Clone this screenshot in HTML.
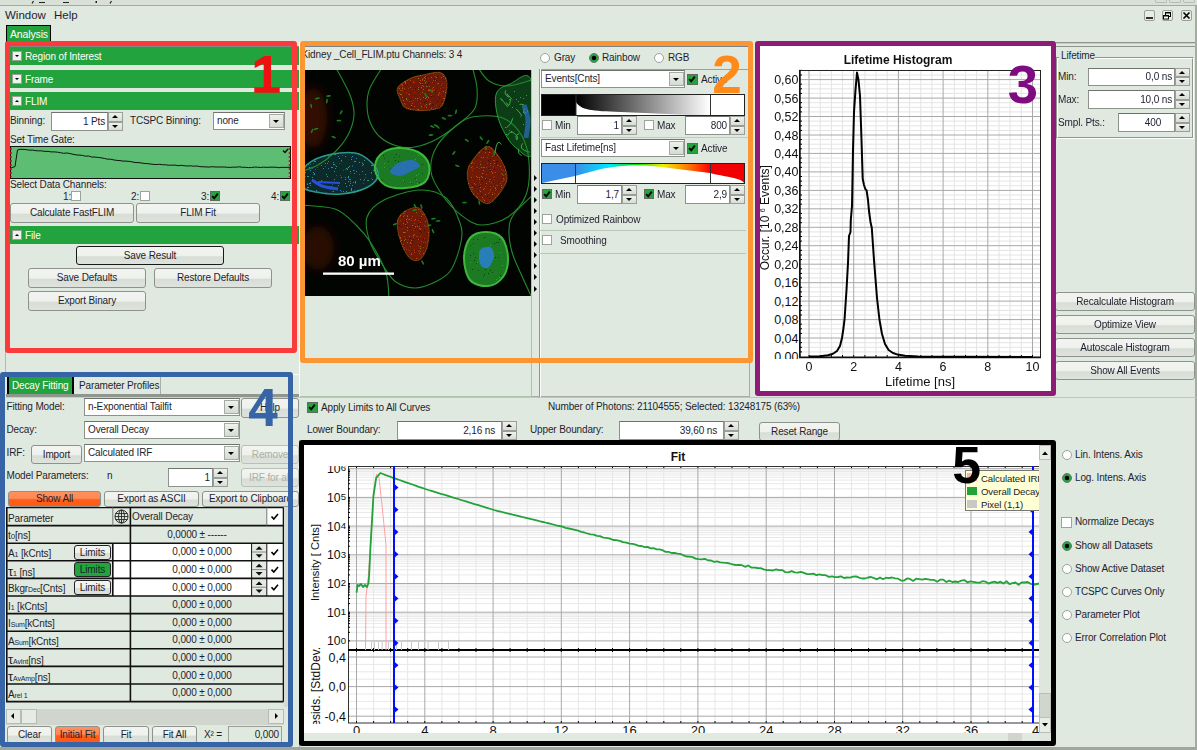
<!DOCTYPE html>
<html><head><meta charset="utf-8"><style>
html,body{margin:0;padding:0;}
body{width:1197px;height:750px;position:relative;overflow:hidden;background:#e0e9df;font-family:"Liberation Sans", sans-serif;color:#1e1e2e;}
body>div,body>svg{position:absolute;}
svg text{font-family:"Liberation Sans", sans-serif;}
</style></head><body>
<div style="left:0px;top:5px;width:1197px;height:1px;background:#a3aba1"></div>
<div style="left:0px;top:0px;width:1197px;height:5px;background:#d9e0d7"></div>
<svg style="left:0px;top:0px;" width="130" height="5" viewBox="0 0 130 5"><path d="M33.5 1 L32 3.5 M39 2.5 L45 2.5 M63 2.5 L69 2.5 M111.5 1 L110 3.5" stroke="#222" stroke-width="1.2"/><rect x="95.5" y="1" width="1.5" height="2" fill="#222"/></svg>
<div style="left:1155px;top:0px;width:12px;height:3px;border:1px solid #b5bcb3;border-top:none;border-radius:0 0 2px 2px;box-sizing:border-box"></div>
<div style="left:1169px;top:0px;width:12px;height:3px;border:1px solid #b5bcb3;border-top:none;border-radius:0 0 2px 2px;box-sizing:border-box"></div>
<div style="left:1183px;top:0px;width:12px;height:3px;border:1px solid #b5bcb3;border-top:none;border-radius:0 0 2px 2px;box-sizing:border-box"></div>
<div style="left:5px;top:9.87px;font-size:11.5px;line-height:11.5px;white-space:nowrap;color:#1e1e2e">Window</div>
<div style="left:54px;top:9.87px;font-size:11.5px;line-height:11.5px;white-space:nowrap;color:#1e1e2e">Help</div>
<div style="left:1144px;top:10px;width:11px;height:11px;border:1px solid #9aa098;border-radius:2px;background:#e8eee6;box-sizing:border-box"></div>
<div style="left:1162px;top:10px;width:11px;height:11px;border:1px solid #9aa098;border-radius:2px;background:#e8eee6;box-sizing:border-box"></div>
<div style="left:1181px;top:10px;width:11px;height:11px;border:1px solid #9aa098;border-radius:2px;background:#e8eee6;box-sizing:border-box"></div>
<svg style="left:1144px;top:10px;" width="11" height="11" viewBox="0 0 11 11"><rect x="2" y="7.2" width="7" height="1.6" fill="#000"/></svg>
<svg style="left:1162px;top:10px;" width="11" height="11" viewBox="0 0 11 11"><rect x="3.5" y="2.5" width="5" height="4" fill="none" stroke="#000" stroke-width="1"/><rect x="3.5" y="2" width="5" height="1.5" fill="#000"/><rect x="1.5" y="5.5" width="5" height="3.5" fill="#fff" stroke="#000" stroke-width="1"/><rect x="1.5" y="5" width="5" height="1.5" fill="#000"/></svg>
<svg style="left:1181px;top:10px;" width="11" height="11" viewBox="0 0 11 11"><path d="M2.5 2.5 L8.5 8.5 M8.5 2.5 L2.5 8.5" stroke="#000" stroke-width="1.6"/></svg>
<div style="left:1195px;top:6px;width:2px;height:744px;background:#a4aca2"></div>
<div style="left:0px;top:747px;width:1197px;height:3px;background:#9fa79d"></div>
<div style="left:1056px;top:42px;width:139px;height:1px;background:#8d948b"></div>
<div style="left:1056px;top:43px;width:139px;height:1px;background:#c7cec5"></div>
<div style="left:1056px;top:46px;width:139px;height:1px;background:#8d948b"></div>
<div style="left:6px;top:25px;width:45px;height:17px;background:#22a33e;border:1px solid #000;box-sizing:border-box"></div>
<div style="left:10px;top:28.61px;font-size:10.5px;line-height:10.5px;white-space:nowrap;letter-spacing:-0.14px;color:#fff">Analysis</div>
<div style="left:5px;top:42px;width:294px;height:333px;background:#e0e9df"></div>
<div style="left:299px;top:42px;width:1px;height:333px;background:#fafcfa"></div>
<div style="left:5px;top:42px;width:1px;height:332px;background:#b3bbb1"></div>
<div style="left:5px;top:374px;width:294px;height:1px;background:#fafcfa"></div>
<div style="left:299px;top:375px;width:1px;height:22px;background:#fafcfa"></div>
<div style="left:10px;top:46px;width:289px;height:1px;background:#808a80"></div>
<div style="left:10px;top:47px;width:289px;height:18px;background:#22a33e"></div>
<div style="left:12px;top:51px;width:10px;height:10px;background:#eef1ec;border:1px solid #9aa098;box-sizing:border-box"></div>
<div style="left:14.5px;top:55.2px;width:0;height:0;border-left:2.5px solid transparent;border-right:2.5px solid transparent;border-top:2.5px solid #000"></div>
<div style="left:25px;top:51.73px;font-size:10px;line-height:10px;white-space:nowrap;letter-spacing:-0.14px;color:#fff">Region of Interest</div>
<div style="left:10px;top:70px;width:289px;height:18px;background:#22a33e"></div>
<div style="left:12px;top:74px;width:10px;height:10px;background:#eef1ec;border:1px solid #9aa098;box-sizing:border-box"></div>
<div style="left:14.5px;top:78.2px;width:0;height:0;border-left:2.5px solid transparent;border-right:2.5px solid transparent;border-top:2.5px solid #000"></div>
<div style="left:25px;top:74.73px;font-size:10px;line-height:10px;white-space:nowrap;letter-spacing:-0.14px;color:#fff">Frame</div>
<div style="left:10px;top:92px;width:289px;height:18px;background:#22a33e"></div>
<div style="left:12px;top:96px;width:10px;height:10px;background:#eef1ec;border:1px solid #9aa098;box-sizing:border-box"></div>
<div style="left:14.5px;top:99.8px;width:0;height:0;border-left:2.5px solid transparent;border-right:2.5px solid transparent;border-bottom:2.5px solid #000"></div>
<div style="left:25px;top:96.73px;font-size:10px;line-height:10px;white-space:nowrap;letter-spacing:-0.14px;color:#fff">FLIM</div>
<div style="left:10px;top:115.53px;font-size:10px;line-height:10px;white-space:nowrap;letter-spacing:-0.14px;color:#1e1e2e">Binning:</div>
<div style="left:51px;top:112px;width:55px;height:17px;background:#fff;border:1px solid #8e928d;border-top-color:#6f736e;"></div>
<div style="left:-195px;top:116.63px;width:300px;font-size:10px;line-height:10px;text-align:right;white-space:nowrap;letter-spacing:-0.14px;color:#1e1e2e">1 Pts</div>
<div style="left:108px;top:112px;width:13px;height:7.5px;border:1px solid #9aa098;background:linear-gradient(#eef1ec,#d9ddd7)"></div>
<div style="left:108px;top:121.5px;width:13px;height:7.5px;border:1px solid #9aa098;background:linear-gradient(#eef1ec,#d9ddd7)"></div>
<div style="left:112.0px;top:115.0px;width:0;height:0;border-left:3.5px solid transparent;border-right:3.5px solid transparent;border-bottom:3.5px solid #000"></div>
<div style="left:112.0px;top:125.0px;width:0;height:0;border-left:3.5px solid transparent;border-right:3.5px solid transparent;border-top:3.5px solid #000"></div>
<div style="left:130px;top:115.53px;font-size:10px;line-height:10px;white-space:nowrap;letter-spacing:-0.14px;color:#1e1e2e">TCSPC Binning:</div>
<div style="left:213px;top:112px;width:70px;height:16px;background:#fff;border:1px solid #8e928d;border-top-color:#6f736e;"></div>
<div style="left:217px;top:116.13px;font-size:10px;line-height:10px;white-space:nowrap;letter-spacing:-0.14px;color:#1e1e2e">none</div>
<div style="left:269px;top:114px;width:13px;height:12px;border:1px solid #a5aba3;background:linear-gradient(#eef1ec,#d5dad3)"></div>
<div style="left:272.5px;top:119.8px;width:0;height:0;border-left:3.5px solid transparent;border-right:3.5px solid transparent;border-top:3.5px solid #000"></div>
<div style="left:10px;top:135.23px;font-size:10px;line-height:10px;white-space:nowrap;letter-spacing:-0.14px;color:#1e1e2e">Set Time Gate:</div>
<svg style="left:10px;top:146px;" width="281" height="33" viewBox="0 0 281 33"><rect x="0.5" y="0.5" width="280" height="32" fill="#5cbd73" stroke="#111" stroke-width="1"/><path d="M1.0 22.0 L5.0 20.5 L7.5 4.0 L10.0 3.3 L13.1 3.4 L16.2 3.6 L19.3 4.2 L22.5 4.1 L25.6 4.7 L28.7 4.8 L31.8 4.9 L34.9 5.4 L38.0 5.4 L41.1 5.9 L44.2 5.9 L47.4 6.2 L50.5 6.7 L53.6 7.3 L56.7 7.0 L59.8 7.5 L63.0 8.3 L66.1 8.9 L69.2 9.1 L72.4 9.4 L75.5 10.2 L78.6 10.0 L81.8 11.0 L84.9 11.1 L88.1 11.4 L91.2 11.8 L94.3 12.4 L97.5 13.2 L100.6 13.2 L103.7 13.9 L106.9 14.4 L110.0 14.6 L113.0 15.1 L116.0 15.1 L119.0 15.4 L122.0 15.8 L125.0 16.5 L128.0 16.6 L131.0 16.9 L134.0 17.4 L137.0 17.6 L140.0 17.9 L143.1 18.4 L146.2 18.5 L149.3 18.3 L152.4 18.7 L155.6 18.8 L158.7 19.2 L161.8 19.2 L164.9 19.1 L168.0 19.7 L171.1 19.3 L174.2 19.7 L177.3 20.0 L180.4 19.8 L183.6 20.2 L186.7 20.0 L189.8 20.6 L192.9 20.8 L196.0 20.9 L199.0 21.1 L202.1 20.7 L205.1 21.0 L208.2 21.0 L211.2 21.0 L214.2 21.0 L217.3 21.3 L220.3 21.4 L223.3 21.1 L226.4 21.2 L229.4 20.8 L232.5 21.3 L235.5 21.3 L238.5 21.6 L241.6 21.5 L244.6 21.1 L247.7 21.2 L250.7 21.5 L253.7 21.1 L256.8 21.4 L259.8 21.2 L262.8 21.2 L265.9 21.2 L268.9 21.7 L272.0 21.3 L275.0 21.4 L280.0 21.3" fill="none" stroke="#111" stroke-width="1"/><path d="M1 2 L1 31" stroke="#e01010" stroke-width="1.6" stroke-dasharray="2 2"/><path d="M279.5 2 L279.5 31" stroke="#e01010" stroke-width="1.6" stroke-dasharray="2 2"/><path d="M273 4.5 L275 6.5 L278 3" stroke="#111" stroke-width="1.5" fill="none"/></svg>
<div style="left:10px;top:180.23px;font-size:10px;line-height:10px;white-space:nowrap;letter-spacing:-0.14px;color:#1e1e2e">Select Data Channels:</div>
<div style="left:63px;top:191.53px;font-size:10px;line-height:10px;white-space:nowrap;letter-spacing:-0.14px;color:#1e1e2e">1:</div>
<div style="left:71px;top:191px;width:8px;height:8px;border:1px solid #9ba39a;background:#fff"></div>
<div style="left:131px;top:191.53px;font-size:10px;line-height:10px;white-space:nowrap;letter-spacing:-0.14px;color:#1e1e2e">2:</div>
<div style="left:140px;top:191px;width:8px;height:8px;border:1px solid #9ba39a;background:#fff"></div>
<div style="left:201px;top:191.53px;font-size:10px;line-height:10px;white-space:nowrap;letter-spacing:-0.14px;color:#1e1e2e">3:</div>
<div style="left:210px;top:191px;width:8px;height:8px;border:1px solid #5f6b5e;background:#24a33f"></div>
<svg style="left:210px;top:191px" width="10" height="10"><path d="M2.2 5.2 L4.2 7.3 L7.8 2.6" stroke="#000" stroke-width="1.8" fill="none"/></svg>
<div style="left:271px;top:191.53px;font-size:10px;line-height:10px;white-space:nowrap;letter-spacing:-0.14px;color:#1e1e2e">4:</div>
<div style="left:280px;top:191px;width:8px;height:8px;border:1px solid #5f6b5e;background:#24a33f"></div>
<svg style="left:280px;top:191px" width="10" height="10"><path d="M2.2 5.2 L4.2 7.3 L7.8 2.6" stroke="#000" stroke-width="1.8" fill="none"/></svg>
<div style="left:10px;top:203px;width:122px;height:18px;border:1px solid #8d938c;border-radius:3px;background:linear-gradient(#f1f4f0 0%,#eef1ec 50%,#d8ddd6 58%,#dfe3dd 100%);"></div>
<div style="left:-228.0px;top:208.13px;width:600px;font-size:10px;line-height:10px;text-align:center;white-space:nowrap;letter-spacing:-0.14px;color:#1e1e2e;">Calculate FastFLIM</div>
<div style="left:136px;top:203px;width:122px;height:18px;border:1px solid #8d938c;border-radius:3px;background:linear-gradient(#f1f4f0 0%,#eef1ec 50%,#d8ddd6 58%,#dfe3dd 100%);"></div>
<div style="left:-102.0px;top:208.13px;width:600px;font-size:10px;line-height:10px;text-align:center;white-space:nowrap;letter-spacing:-0.14px;color:#1e1e2e;">FLIM Fit</div>
<div style="left:10px;top:226px;width:289px;height:18px;background:#22a33e"></div>
<div style="left:12px;top:230px;width:10px;height:10px;background:#eef1ec;border:1px solid #9aa098;box-sizing:border-box"></div>
<div style="left:14.5px;top:233.8px;width:0;height:0;border-left:2.5px solid transparent;border-right:2.5px solid transparent;border-bottom:2.5px solid #000"></div>
<div style="left:25px;top:230.73px;font-size:10px;line-height:10px;white-space:nowrap;letter-spacing:-0.14px;color:#fff">File</div>
<div style="left:76px;top:246px;width:146px;height:17px;border:1px solid #1a1a1a;border-radius:3px;background:linear-gradient(#f1f4f0 0%,#eef1ec 50%,#d8ddd6 58%,#dfe3dd 100%);"></div>
<div style="left:-150.0px;top:250.64px;width:600px;font-size:10px;line-height:10px;text-align:center;white-space:nowrap;letter-spacing:-0.14px;color:#1e1e2e;">Save Result</div>
<div style="left:28px;top:268px;width:116px;height:18px;border:1px solid #8d938c;border-radius:3px;background:linear-gradient(#f1f4f0 0%,#eef1ec 50%,#d8ddd6 58%,#dfe3dd 100%);"></div>
<div style="left:-213.0px;top:273.14px;width:600px;font-size:10px;line-height:10px;text-align:center;white-space:nowrap;letter-spacing:-0.14px;color:#1e1e2e;">Save Defaults</div>
<div style="left:154px;top:268px;width:116px;height:18px;border:1px solid #8d938c;border-radius:3px;background:linear-gradient(#f1f4f0 0%,#eef1ec 50%,#d8ddd6 58%,#dfe3dd 100%);"></div>
<div style="left:-87.0px;top:273.14px;width:600px;font-size:10px;line-height:10px;text-align:center;white-space:nowrap;letter-spacing:-0.14px;color:#1e1e2e;">Restore Defaults</div>
<div style="left:28px;top:291px;width:116px;height:18px;border:1px solid #8d938c;border-radius:3px;background:linear-gradient(#f1f4f0 0%,#eef1ec 50%,#d8ddd6 58%,#dfe3dd 100%);"></div>
<div style="left:-213.0px;top:296.14px;width:600px;font-size:10px;line-height:10px;text-align:center;white-space:nowrap;letter-spacing:-0.14px;color:#1e1e2e;">Export Binary</div>
<div style="left:300px;top:42px;width:450px;height:355px;background:#e0e9df"></div>
<div style="left:749px;top:42px;width:1px;height:355px;background:#a6ada4"></div>
<div style="left:300px;top:396px;width:450px;height:1px;background:#a6ada4"></div>
<div style="left:301.5px;top:49.53px;font-size:10px;line-height:10px;white-space:nowrap;letter-spacing:-0.14px;color:#1e1e2e">Kidney _Cell_FLIM.ptu Channels: 3 4</div>
<svg style="left:304px;top:70px;" width="227" height="226" viewBox="0 0 227 226"><defs><filter id="bl1" x="-20%" y="-20%" width="140%" height="140%"><feGaussianBlur stdDeviation="0.5"/></filter><filter id="bl2" x="-30%" y="-30%" width="160%" height="160%"><feGaussianBlur stdDeviation="1.5"/></filter><filter id="bl3" x="-50%" y="-50%" width="200%" height="200%"><feGaussianBlur stdDeviation="5"/></filter></defs><rect width="227" height="226" fill="#020402"/><g filter="url(#bl3)"><ellipse cx="9" cy="48" rx="14" ry="30" fill="#4a1206" opacity="0.7"/><ellipse cx="14" cy="178" rx="16" ry="22" fill="#3a0e05" opacity="0.7"/></g><g filter="url(#bl1)"><path d="M114.0 82.0 C119.3 84.8 123.8 90.0 125.0 95.0 C126.2 100.0 125.0 108.2 121.0 112.0 C117.0 115.8 107.7 117.5 101.0 118.0 C94.3 118.5 86.0 118.0 81.0 115.0 C76.0 112.0 71.8 105.0 71.0 100.0 C70.2 95.0 72.3 88.7 76.0 85.0 C79.7 81.3 86.7 78.5 93.0 78.0 C99.3 77.5 108.7 79.2 114.0 82.0 Z" fill="#1e7a22"/><path d="M198.0 168.0 C201.7 172.3 203.8 181.5 204.0 188.0 C204.2 194.5 202.3 202.3 199.0 207.0 C195.7 211.7 189.5 215.5 184.0 216.0 C178.5 216.5 170.0 214.7 166.0 210.0 C162.0 205.3 160.0 195.0 160.0 188.0 C160.0 181.0 162.3 172.3 166.0 168.0 C169.7 163.7 176.7 162.0 182.0 162.0 C187.3 162.0 194.3 163.7 198.0 168.0 Z" fill="#1e7a22"/><path d="M20.0 86.0 C28.5 83.5 43.0 81.8 51.0 83.0 C59.0 84.2 64.2 89.2 68.0 93.0 C71.8 96.8 75.0 101.8 74.0 106.0 C73.0 110.2 68.2 115.0 62.0 118.0 C55.8 121.0 45.3 123.3 37.0 124.0 C28.7 124.7 18.5 123.3 12.0 122.0 C5.5 120.7 0.0 120.0 -2.0 116.0 C-4.0 112.0 -3.7 103.0 0.0 98.0 C3.7 93.0 11.5 88.5 20.0 86.0 Z" fill="#0a2a2a"/><path d="M206.0 14.0 C211.7 12.0 223.2 -1.3 227.0 10.0 C230.8 21.3 231.7 70.8 229.0 82.0 C226.3 93.2 216.2 81.0 211.0 77.0 C205.8 73.0 201.2 64.5 198.0 58.0 C194.8 51.5 192.8 44.0 192.0 38.0 C191.2 32.0 190.7 26.0 193.0 22.0 C195.3 18.0 200.3 16.0 206.0 14.0 Z" fill="#0e3e18"/></g><rect x="114" y="85" width="1" height="1" fill="#3aa040"/><rect x="94" y="91" width="1" height="1" fill="#0a3a10"/><rect x="112" y="109" width="1" height="1" fill="#3aa040"/><rect x="107" y="113" width="1" height="1" fill="#104a18"/><rect x="115" y="112" width="1" height="1" fill="#0a3a10"/><rect x="80" y="88" width="1" height="1" fill="#104a18"/><rect x="86" y="98" width="1" height="1" fill="#104a18"/><rect x="84" y="91" width="1" height="1" fill="#0a3a10"/><rect x="94" y="94" width="1" height="1" fill="#104a18"/><rect x="90" y="87" width="1" height="1" fill="#104a18"/><rect x="118" y="103" width="1" height="1" fill="#104a18"/><rect x="78" y="110" width="1" height="1" fill="#104a18"/><rect x="111" y="95" width="1" height="1" fill="#3aa040"/><rect x="93" y="97" width="1" height="1" fill="#3aa040"/><rect x="79" y="85" width="1" height="1" fill="#0a3a10"/><rect x="95" y="86" width="1" height="1" fill="#104a18"/><rect x="78" y="83" width="1" height="1" fill="#0a3a10"/><rect x="100" y="111" width="1" height="1" fill="#104a18"/><rect x="77" y="109" width="1" height="1" fill="#104a18"/><rect x="93" y="102" width="1" height="1" fill="#3aa040"/><rect x="103" y="97" width="1" height="1" fill="#0a3a10"/><rect x="113" y="113" width="1" height="1" fill="#3aa040"/><rect x="97" y="92" width="1" height="1" fill="#0a3a10"/><rect x="80" y="93" width="1" height="1" fill="#3aa040"/><rect x="97" y="104" width="1" height="1" fill="#104a18"/><rect x="77" y="112" width="1" height="1" fill="#104a18"/><rect x="92" y="104" width="1" height="1" fill="#0a3a10"/><rect x="109" y="92" width="1" height="1" fill="#104a18"/><rect x="114" y="104" width="1" height="1" fill="#3aa040"/><rect x="99" y="110" width="1" height="1" fill="#3aa040"/><rect x="110" y="99" width="1" height="1" fill="#104a18"/><rect x="91" y="90" width="1" height="1" fill="#0a3a10"/><rect x="111" y="108" width="1" height="1" fill="#104a18"/><rect x="111" y="89" width="1" height="1" fill="#3aa040"/><rect x="92" y="84" width="1" height="1" fill="#0a3a10"/><rect x="111" y="97" width="1" height="1" fill="#0a3a10"/><rect x="106" y="112" width="1" height="1" fill="#3aa040"/><rect x="112" y="105" width="1" height="1" fill="#3aa040"/><rect x="118" y="94" width="1" height="1" fill="#0a3a10"/><rect x="80" y="97" width="1" height="1" fill="#3aa040"/><rect x="172" y="193" width="1" height="1" fill="#104a18"/><rect x="194" y="187" width="1" height="1" fill="#104a18"/><rect x="177" y="194" width="1" height="1" fill="#104a18"/><rect x="169" y="183" width="1" height="1" fill="#104a18"/><rect x="191" y="187" width="1" height="1" fill="#0a3a10"/><rect x="180" y="194" width="1" height="1" fill="#0a3a10"/><rect x="192" y="209" width="1" height="1" fill="#3aa040"/><rect x="181" y="199" width="1" height="1" fill="#0a3a10"/><rect x="190" y="173" width="1" height="1" fill="#0a3a10"/><rect x="166" y="192" width="1" height="1" fill="#3aa040"/><rect x="192" y="172" width="1" height="1" fill="#104a18"/><rect x="198" y="195" width="1" height="1" fill="#3aa040"/><rect x="170" y="190" width="1" height="1" fill="#0a3a10"/><rect x="165" y="209" width="1" height="1" fill="#104a18"/><rect x="168" y="199" width="1" height="1" fill="#0a3a10"/><rect x="180" y="204" width="1" height="1" fill="#0a3a10"/><rect x="166" y="175" width="1" height="1" fill="#104a18"/><rect x="173" y="192" width="1" height="1" fill="#3aa040"/><rect x="184" y="203" width="1" height="1" fill="#0a3a10"/><rect x="196" y="182" width="1" height="1" fill="#3aa040"/><rect x="188" y="202" width="1" height="1" fill="#104a18"/><rect x="179" y="206" width="1" height="1" fill="#104a18"/><rect x="169" y="173" width="1" height="1" fill="#104a18"/><rect x="166" y="185" width="1" height="1" fill="#0a3a10"/><rect x="186" y="200" width="1" height="1" fill="#0a3a10"/><rect x="171" y="187" width="1" height="1" fill="#104a18"/><rect x="169" y="169" width="1" height="1" fill="#104a18"/><rect x="183" y="190" width="1" height="1" fill="#0a3a10"/><rect x="195" y="169" width="1" height="1" fill="#0a3a10"/><rect x="174" y="200" width="1" height="1" fill="#104a18"/><rect x="180" y="167" width="1" height="1" fill="#0a3a10"/><rect x="180" y="193" width="1" height="1" fill="#104a18"/><rect x="186" y="175" width="1" height="1" fill="#3aa040"/><rect x="180" y="189" width="1" height="1" fill="#3aa040"/><rect x="182" y="177" width="1" height="1" fill="#104a18"/><rect x="195" y="207" width="1" height="1" fill="#3aa040"/><rect x="196" y="205" width="1" height="1" fill="#0a3a10"/><rect x="194" y="172" width="1" height="1" fill="#0a3a10"/><rect x="178" y="180" width="1" height="1" fill="#104a18"/><rect x="173" y="169" width="1" height="1" fill="#104a18"/><rect x="206" y="26" width="1" height="1" fill="#0a3a10"/><rect x="222" y="52" width="1" height="1" fill="#3aa040"/><rect x="202" y="64" width="1" height="1" fill="#3aa040"/><rect x="204" y="68" width="1" height="1" fill="#3aa040"/><rect x="220" y="28" width="1" height="1" fill="#104a18"/><rect x="219" y="28" width="1" height="1" fill="#3aa040"/><rect x="223" y="40" width="1" height="1" fill="#3aa040"/><rect x="204" y="36" width="1" height="1" fill="#104a18"/><rect x="208" y="37" width="1" height="1" fill="#3aa040"/><rect x="210" y="21" width="1" height="1" fill="#3aa040"/><rect x="211" y="35" width="1" height="1" fill="#0a3a10"/><rect x="202" y="66" width="1" height="1" fill="#0a3a10"/><rect x="222" y="25" width="1" height="1" fill="#3aa040"/><rect x="206" y="65" width="1" height="1" fill="#0a3a10"/><rect x="205" y="26" width="1" height="1" fill="#3aa040"/><rect x="219" y="54" width="1" height="1" fill="#3aa040"/><rect x="209" y="47" width="1" height="1" fill="#104a18"/><rect x="213" y="55" width="1" height="1" fill="#0a3a10"/><rect x="206" y="60" width="1" height="1" fill="#0a3a10"/><rect x="209" y="24" width="1" height="1" fill="#0a3a10"/><rect x="214" y="60" width="1" height="1" fill="#0a3a10"/><rect x="214" y="31" width="1" height="1" fill="#3aa040"/><rect x="220" y="43" width="1" height="1" fill="#3aa040"/><rect x="223" y="41" width="1" height="1" fill="#3aa040"/><rect x="214" y="22" width="1" height="1" fill="#104a18"/><rect x="205" y="25" width="1" height="1" fill="#0a3a10"/><rect x="205" y="29" width="1" height="1" fill="#3aa040"/><rect x="214" y="47" width="1" height="1" fill="#0a3a10"/><rect x="206" y="45" width="1" height="1" fill="#0a3a10"/><rect x="205" y="60" width="1" height="1" fill="#3aa040"/><rect x="200" y="21" width="1" height="1" fill="#104a18"/><rect x="212" y="29" width="1" height="1" fill="#3aa040"/><rect x="205" y="42" width="1" height="1" fill="#104a18"/><rect x="219" y="42" width="1" height="1" fill="#3aa040"/><rect x="212" y="64" width="1" height="1" fill="#104a18"/><rect x="206" y="31" width="1" height="1" fill="#0a3a10"/><rect x="207" y="62" width="1" height="1" fill="#104a18"/><rect x="216" y="27" width="1" height="1" fill="#3aa040"/><rect x="223" y="62" width="1" height="1" fill="#0a3a10"/><rect x="201" y="57" width="1" height="1" fill="#3aa040"/><defs><clipPath id="clc"><path d="M20.0 86.0 C28.5 83.5 43.0 81.8 51.0 83.0 C59.0 84.2 64.2 89.2 68.0 93.0 C71.8 96.8 75.0 101.8 74.0 106.0 C73.0 110.2 68.2 115.0 62.0 118.0 C55.8 121.0 45.3 123.3 37.0 124.0 C28.7 124.7 18.5 123.3 12.0 122.0 C5.5 120.7 0.0 120.0 -2.0 116.0 C-4.0 112.0 -3.7 103.0 0.0 98.0 C3.7 93.0 11.5 88.5 20.0 86.0 Z"/></clipPath></defs><g clip-path="url(#clc)"><rect x="32" y="85" width="1" height="1" fill="#0a2a3a"/><rect x="64" y="110" width="1" height="1" fill="#2aa070"/><rect x="44" y="111" width="1" height="1" fill="#2a8aa0"/><rect x="34" y="89" width="1" height="1" fill="#0a2a3a"/><rect x="0" y="98" width="1" height="1" fill="#2aa070"/><rect x="72" y="105" width="1" height="1" fill="#1a5a8a"/><rect x="3" y="119" width="1" height="1" fill="#1a5a8a"/><rect x="26" y="83" width="1" height="1" fill="#0a2a3a"/><rect x="6" y="94" width="1" height="1" fill="#1a5a8a"/><rect x="18" y="115" width="1" height="1" fill="#2a8aa0"/><rect x="20" y="87" width="1" height="1" fill="#0a2a3a"/><rect x="43" y="99" width="1" height="1" fill="#2aa070"/><rect x="23" y="93" width="1" height="1" fill="#3a7ad0"/><rect x="71" y="118" width="1" height="1" fill="#1a5a8a"/><rect x="49" y="112" width="1" height="1" fill="#3a7ad0"/><rect x="29" y="96" width="1" height="1" fill="#0a2a3a"/><rect x="11" y="113" width="1" height="1" fill="#1a5a8a"/><rect x="3" y="117" width="1" height="1" fill="#3a7ad0"/><rect x="46" y="113" width="1" height="1" fill="#3a7ad0"/><rect x="10" y="104" width="1" height="1" fill="#3a7ad0"/><rect x="42" y="116" width="1" height="1" fill="#2a8aa0"/><rect x="61" y="107" width="1" height="1" fill="#1a5a8a"/><rect x="6" y="85" width="1" height="1" fill="#2aa070"/><rect x="71" y="98" width="1" height="1" fill="#0a2a3a"/><rect x="41" y="109" width="1" height="1" fill="#3a7ad0"/><rect x="50" y="103" width="1" height="1" fill="#2a8aa0"/><rect x="34" y="86" width="1" height="1" fill="#3a7ad0"/><rect x="66" y="87" width="1" height="1" fill="#3a7ad0"/><rect x="5" y="113" width="1" height="1" fill="#2aa070"/><rect x="60" y="118" width="1" height="1" fill="#1a5a8a"/><rect x="54" y="91" width="1" height="1" fill="#0a2a3a"/><rect x="37" y="99" width="1" height="1" fill="#0a2a3a"/><rect x="67" y="95" width="1" height="1" fill="#2a8aa0"/><rect x="46" y="109" width="1" height="1" fill="#2a8aa0"/><rect x="44" y="97" width="1" height="1" fill="#2aa070"/><rect x="46" y="88" width="1" height="1" fill="#0a2a3a"/><rect x="4" y="94" width="1" height="1" fill="#2a8aa0"/><rect x="51" y="111" width="1" height="1" fill="#2aa070"/><rect x="52" y="95" width="1" height="1" fill="#0a2a3a"/><rect x="35" y="88" width="1" height="1" fill="#3a7ad0"/><rect x="15" y="123" width="1" height="1" fill="#0a2a3a"/><rect x="1" y="102" width="1" height="1" fill="#3a7ad0"/><rect x="72" y="101" width="1" height="1" fill="#2aa070"/><rect x="29" y="121" width="1" height="1" fill="#1a5a8a"/><rect x="6" y="87" width="1" height="1" fill="#3a7ad0"/><rect x="19" y="98" width="1" height="1" fill="#3a7ad0"/><rect x="61" y="104" width="1" height="1" fill="#2a8aa0"/><rect x="52" y="92" width="1" height="1" fill="#0a2a3a"/><rect x="29" y="90" width="1" height="1" fill="#0a2a3a"/><rect x="50" y="100" width="1" height="1" fill="#1a5a8a"/><rect x="31" y="98" width="1" height="1" fill="#2a8aa0"/><rect x="62" y="83" width="1" height="1" fill="#2aa070"/><rect x="62" y="88" width="1" height="1" fill="#1a5a8a"/><rect x="53" y="120" width="1" height="1" fill="#2aa070"/><rect x="19" y="86" width="1" height="1" fill="#0a2a3a"/><rect x="74" y="107" width="1" height="1" fill="#2aa070"/><rect x="68" y="114" width="1" height="1" fill="#2a8aa0"/><rect x="21" y="85" width="1" height="1" fill="#2aa070"/><rect x="47" y="89" width="1" height="1" fill="#2aa070"/><rect x="32" y="96" width="1" height="1" fill="#2aa070"/><rect x="58" y="101" width="1" height="1" fill="#2a8aa0"/><rect x="60" y="109" width="1" height="1" fill="#3a7ad0"/><rect x="41" y="113" width="1" height="1" fill="#2a8aa0"/><rect x="69" y="100" width="1" height="1" fill="#3a7ad0"/><rect x="56" y="109" width="1" height="1" fill="#2aa070"/><rect x="36" y="120" width="1" height="1" fill="#3a7ad0"/><rect x="9" y="102" width="1" height="1" fill="#2aa070"/><rect x="21" y="93" width="1" height="1" fill="#2aa070"/><rect x="30" y="93" width="1" height="1" fill="#0a2a3a"/><rect x="41" y="99" width="1" height="1" fill="#1a5a8a"/><rect x="48" y="86" width="1" height="1" fill="#3a7ad0"/><rect x="67" y="103" width="1" height="1" fill="#1a5a8a"/><rect x="34" y="97" width="1" height="1" fill="#0a2a3a"/><rect x="32" y="105" width="1" height="1" fill="#1a5a8a"/><rect x="7" y="97" width="1" height="1" fill="#2a8aa0"/><rect x="24" y="98" width="1" height="1" fill="#3a7ad0"/><rect x="15" y="84" width="1" height="1" fill="#0a2a3a"/><rect x="28" y="114" width="1" height="1" fill="#1a5a8a"/><rect x="28" y="97" width="1" height="1" fill="#2a8aa0"/><rect x="37" y="107" width="1" height="1" fill="#2aa070"/><rect x="9" y="104" width="1" height="1" fill="#1a5a8a"/><rect x="7" y="120" width="1" height="1" fill="#0a2a3a"/><rect x="30" y="101" width="1" height="1" fill="#2aa070"/><rect x="63" y="119" width="1" height="1" fill="#2a8aa0"/><rect x="9" y="100" width="1" height="1" fill="#0a2a3a"/><rect x="72" y="103" width="1" height="1" fill="#2a8aa0"/><rect x="29" y="121" width="1" height="1" fill="#3a7ad0"/><rect x="63" y="123" width="1" height="1" fill="#1a5a8a"/><rect x="58" y="92" width="1" height="1" fill="#1a5a8a"/><rect x="39" y="111" width="1" height="1" fill="#0a2a3a"/><rect x="6" y="115" width="1" height="1" fill="#2a8aa0"/><rect x="58" y="93" width="1" height="1" fill="#2a8aa0"/><rect x="48" y="95" width="1" height="1" fill="#1a5a8a"/><rect x="46" y="105" width="1" height="1" fill="#0a2a3a"/><rect x="52" y="88" width="1" height="1" fill="#2a8aa0"/><rect x="22" y="122" width="1" height="1" fill="#1a5a8a"/><rect x="29" y="92" width="1" height="1" fill="#3a7ad0"/><rect x="0" y="105" width="1" height="1" fill="#0a2a3a"/><rect x="21" y="96" width="1" height="1" fill="#1a5a8a"/><rect x="35" y="93" width="1" height="1" fill="#1a5a8a"/><rect x="2" y="100" width="1" height="1" fill="#2aa070"/><rect x="4" y="91" width="1" height="1" fill="#0a2a3a"/><rect x="6" y="92" width="1" height="1" fill="#0a2a3a"/><rect x="68" y="92" width="1" height="1" fill="#2a8aa0"/><rect x="51" y="112" width="1" height="1" fill="#2aa070"/><rect x="51" y="91" width="1" height="1" fill="#2aa070"/><rect x="55" y="104" width="1" height="1" fill="#1a5a8a"/><rect x="37" y="91" width="1" height="1" fill="#1a5a8a"/><rect x="17" y="92" width="1" height="1" fill="#2aa070"/><rect x="8" y="109" width="1" height="1" fill="#3a7ad0"/><rect x="14" y="92" width="1" height="1" fill="#0a2a3a"/><rect x="67" y="85" width="1" height="1" fill="#3a7ad0"/><rect x="11" y="99" width="1" height="1" fill="#1a5a8a"/><rect x="2" y="107" width="1" height="1" fill="#0a2a3a"/><rect x="4" y="85" width="1" height="1" fill="#0a2a3a"/><rect x="33" y="112" width="1" height="1" fill="#2aa070"/><rect x="54" y="124" width="1" height="1" fill="#1a5a8a"/><rect x="24" y="91" width="1" height="1" fill="#3a7ad0"/><rect x="55" y="84" width="1" height="1" fill="#0a2a3a"/><rect x="62" y="123" width="1" height="1" fill="#0a2a3a"/><rect x="13" y="83" width="1" height="1" fill="#2aa070"/><rect x="6" y="100" width="1" height="1" fill="#2a8aa0"/><rect x="42" y="114" width="1" height="1" fill="#0a2a3a"/><rect x="26" y="117" width="1" height="1" fill="#0a2a3a"/><rect x="6" y="112" width="1" height="1" fill="#1a5a8a"/><rect x="28" y="121" width="1" height="1" fill="#1a5a8a"/><rect x="24" y="113" width="1" height="1" fill="#0a2a3a"/><rect x="2" y="100" width="1" height="1" fill="#0a2a3a"/><rect x="3" y="84" width="1" height="1" fill="#2a8aa0"/><rect x="59" y="86" width="1" height="1" fill="#1a5a8a"/><rect x="55" y="120" width="1" height="1" fill="#2aa070"/><rect x="27" y="97" width="1" height="1" fill="#3a7ad0"/><rect x="3" y="114" width="1" height="1" fill="#2aa070"/><rect x="68" y="95" width="1" height="1" fill="#3a7ad0"/><rect x="68" y="109" width="1" height="1" fill="#2a8aa0"/><rect x="2" y="93" width="1" height="1" fill="#0a2a3a"/><rect x="53" y="102" width="1" height="1" fill="#0a2a3a"/><rect x="58" y="120" width="1" height="1" fill="#0a2a3a"/><rect x="10" y="103" width="1" height="1" fill="#2a8aa0"/><rect x="59" y="113" width="1" height="1" fill="#1a5a8a"/><rect x="45" y="96" width="1" height="1" fill="#2aa070"/><rect x="34" y="115" width="1" height="1" fill="#3a7ad0"/><rect x="6" y="91" width="1" height="1" fill="#1a5a8a"/><rect x="18" y="86" width="1" height="1" fill="#2a8aa0"/><rect x="36" y="105" width="1" height="1" fill="#1a5a8a"/><rect x="73" y="119" width="1" height="1" fill="#2a8aa0"/><rect x="20" y="86" width="1" height="1" fill="#2a8aa0"/><rect x="31" y="124" width="1" height="1" fill="#0a2a3a"/><rect x="13" y="88" width="1" height="1" fill="#0a2a3a"/><rect x="46" y="111" width="1" height="1" fill="#3a7ad0"/><rect x="63" y="110" width="1" height="1" fill="#2a8aa0"/><rect x="58" y="95" width="1" height="1" fill="#2aa070"/><rect x="42" y="98" width="1" height="1" fill="#2aa070"/><rect x="15" y="93" width="1" height="1" fill="#1a5a8a"/><rect x="17" y="95" width="1" height="1" fill="#3a7ad0"/><rect x="14" y="86" width="1" height="1" fill="#2aa070"/><rect x="73" y="104" width="1" height="1" fill="#1a5a8a"/><rect x="48" y="87" width="1" height="1" fill="#0a2a3a"/><rect x="73" y="87" width="1" height="1" fill="#0a2a3a"/><rect x="65" y="92" width="1" height="1" fill="#0a2a3a"/><rect x="68" y="85" width="1" height="1" fill="#2aa070"/><rect x="17" y="85" width="1" height="1" fill="#3a7ad0"/><rect x="72" y="107" width="1" height="1" fill="#2a8aa0"/><rect x="28" y="119" width="1" height="1" fill="#0a2a3a"/><rect x="45" y="115" width="1" height="1" fill="#2a8aa0"/><rect x="8" y="107" width="1" height="1" fill="#3a7ad0"/><rect x="26" y="85" width="1" height="1" fill="#2aa070"/><rect x="10" y="91" width="1" height="1" fill="#2aa070"/><rect x="3" y="113" width="1" height="1" fill="#1a5a8a"/><rect x="60" y="117" width="1" height="1" fill="#0a2a3a"/><rect x="50" y="91" width="1" height="1" fill="#2aa070"/><rect x="6" y="84" width="1" height="1" fill="#0a2a3a"/><rect x="41" y="86" width="1" height="1" fill="#2a8aa0"/><rect x="59" y="110" width="1" height="1" fill="#1a5a8a"/><rect x="47" y="87" width="1" height="1" fill="#1a5a8a"/><rect x="29" y="94" width="1" height="1" fill="#2aa070"/><rect x="49" y="100" width="1" height="1" fill="#2a8aa0"/><rect x="23" y="106" width="1" height="1" fill="#2aa070"/><rect x="31" y="84" width="1" height="1" fill="#2aa070"/><rect x="48" y="99" width="1" height="1" fill="#0a2a3a"/><rect x="15" y="83" width="1" height="1" fill="#1a5a8a"/><rect x="31" y="117" width="1" height="1" fill="#0a2a3a"/><rect x="43" y="98" width="1" height="1" fill="#1a5a8a"/><rect x="10" y="85" width="1" height="1" fill="#1a5a8a"/><rect x="47" y="120" width="1" height="1" fill="#2a8aa0"/><rect x="42" y="121" width="1" height="1" fill="#3a7ad0"/><rect x="13" y="97" width="1" height="1" fill="#1a5a8a"/><rect x="39" y="121" width="1" height="1" fill="#2a8aa0"/><rect x="28" y="114" width="1" height="1" fill="#1a5a8a"/><rect x="22" y="117" width="1" height="1" fill="#2a8aa0"/><rect x="72" y="103" width="1" height="1" fill="#2a8aa0"/><rect x="45" y="109" width="1" height="1" fill="#2a8aa0"/><rect x="67" y="108" width="1" height="1" fill="#1a5a8a"/><rect x="47" y="118" width="1" height="1" fill="#3a7ad0"/><rect x="30" y="118" width="1" height="1" fill="#0a2a3a"/><rect x="14" y="92" width="1" height="1" fill="#0a2a3a"/><rect x="69" y="89" width="1" height="1" fill="#2aa070"/><rect x="9" y="93" width="1" height="1" fill="#1a5a8a"/><rect x="3" y="106" width="1" height="1" fill="#2a8aa0"/><rect x="49" y="96" width="1" height="1" fill="#0a2a3a"/><rect x="44" y="106" width="1" height="1" fill="#2aa070"/><rect x="48" y="96" width="1" height="1" fill="#1a5a8a"/><rect x="32" y="110" width="1" height="1" fill="#0a2a3a"/><rect x="37" y="90" width="1" height="1" fill="#2a8aa0"/><rect x="46" y="103" width="1" height="1" fill="#1a5a8a"/><rect x="33" y="108" width="1" height="1" fill="#0a2a3a"/><rect x="62" y="116" width="1" height="1" fill="#0a2a3a"/><rect x="8" y="88" width="1" height="1" fill="#0a2a3a"/><rect x="27" y="116" width="1" height="1" fill="#3a7ad0"/><rect x="38" y="85" width="1" height="1" fill="#1a5a8a"/><rect x="6" y="113" width="1" height="1" fill="#3a7ad0"/><rect x="6" y="114" width="1" height="1" fill="#0a2a3a"/><rect x="48" y="115" width="1" height="1" fill="#2a8aa0"/><rect x="63" y="124" width="1" height="1" fill="#2a8aa0"/><rect x="14" y="123" width="1" height="1" fill="#0a2a3a"/><rect x="21" y="116" width="1" height="1" fill="#1a5a8a"/><rect x="51" y="113" width="1" height="1" fill="#1a5a8a"/><rect x="5" y="97" width="1" height="1" fill="#2aa070"/><rect x="12" y="120" width="1" height="1" fill="#2aa070"/><rect x="67" y="102" width="1" height="1" fill="#2aa070"/><rect x="37" y="121" width="1" height="1" fill="#1a5a8a"/><rect x="44" y="108" width="1" height="1" fill="#1a5a8a"/><rect x="24" y="85" width="1" height="1" fill="#1a5a8a"/><rect x="30" y="109" width="1" height="1" fill="#2aa070"/><rect x="50" y="120" width="1" height="1" fill="#1a5a8a"/><rect x="59" y="94" width="1" height="1" fill="#3a7ad0"/><rect x="4" y="118" width="1" height="1" fill="#0a2a3a"/><rect x="41" y="107" width="1" height="1" fill="#2a8aa0"/><rect x="19" y="105" width="1" height="1" fill="#0a2a3a"/><rect x="55" y="98" width="1" height="1" fill="#0a2a3a"/><rect x="73" y="107" width="1" height="1" fill="#2aa070"/><rect x="24" y="86" width="1" height="1" fill="#1a5a8a"/><rect x="13" y="113" width="1" height="1" fill="#2a8aa0"/><rect x="22" y="104" width="1" height="1" fill="#2aa070"/><rect x="47" y="123" width="1" height="1" fill="#3a7ad0"/><rect x="69" y="120" width="1" height="1" fill="#2a8aa0"/><rect x="55" y="92" width="1" height="1" fill="#2aa070"/><rect x="46" y="101" width="1" height="1" fill="#3a7ad0"/><rect x="27" y="85" width="1" height="1" fill="#0a2a3a"/><rect x="17" y="110" width="1" height="1" fill="#2a8aa0"/><rect x="4" y="106" width="1" height="1" fill="#2aa070"/><rect x="8" y="98" width="1" height="1" fill="#1a5a8a"/><rect x="31" y="95" width="1" height="1" fill="#1a5a8a"/><rect x="15" y="109" width="1" height="1" fill="#0a2a3a"/><rect x="12" y="84" width="1" height="1" fill="#1a5a8a"/><rect x="52" y="101" width="1" height="1" fill="#2a8aa0"/><rect x="47" y="119" width="1" height="1" fill="#2aa070"/><rect x="30" y="94" width="1" height="1" fill="#2a8aa0"/><rect x="4" y="117" width="1" height="1" fill="#2aa070"/><rect x="44" y="107" width="1" height="1" fill="#3a7ad0"/><rect x="69" y="113" width="1" height="1" fill="#1a5a8a"/><rect x="12" y="83" width="1" height="1" fill="#2a8aa0"/><rect x="39" y="100" width="1" height="1" fill="#1a5a8a"/><rect x="12" y="120" width="1" height="1" fill="#2a8aa0"/><rect x="1" y="106" width="1" height="1" fill="#1a5a8a"/><rect x="11" y="91" width="1" height="1" fill="#3a7ad0"/><rect x="48" y="110" width="1" height="1" fill="#0a2a3a"/><rect x="60" y="90" width="1" height="1" fill="#2aa070"/><rect x="5" y="109" width="1" height="1" fill="#0a2a3a"/><rect x="53" y="83" width="1" height="1" fill="#0a2a3a"/></g><g filter="url(#bl1)"><path d="M216.6 46.8 q 2.9 -0.8 -4.4 -7.9" stroke="#38b040" stroke-width="1" fill="none"/><path d="M201.7 20.4 q -2.0 4.0 3.1 6.9" stroke="#38b040" stroke-width="1" fill="none"/><path d="M215.6 34.5 q 0.6 -1.0 4.6 0.5" stroke="#38b040" stroke-width="1" fill="none"/><path d="M202.7 57.8 q 5.6 -4.5 6.1 -9.7" stroke="#38b040" stroke-width="1" fill="none"/><path d="M202.6 32.6 q 2.9 7.1 3.9 -3.5" stroke="#38b040" stroke-width="1" fill="none"/><path d="M220.5 38.4 q -3.1 6.5 2.1 3.9" stroke="#38b040" stroke-width="1" fill="none"/><path d="M214.3 78.7 q -0.4 5.4 3.2 7.2" stroke="#38b040" stroke-width="1" fill="none"/><path d="M207.7 62.9 q 0.8 -3.1 -4.6 2.5" stroke="#38b040" stroke-width="1" fill="none"/><path d="M197.3 74.5 q -4.3 -7.6 -6.3 8.6" stroke="#38b040" stroke-width="1" fill="none"/><path d="M205.0 26.8 q -5.7 -7.3 3.1 2.7" stroke="#38b040" stroke-width="1" fill="none"/><path d="M215.2 63.7 q -5.2 1.4 -2.2 6.4" stroke="#38b040" stroke-width="1" fill="none"/><path d="M218.8 73.3 q -5.2 5.9 6.6 8.9" stroke="#38b040" stroke-width="1" fill="none"/><path d="M198.1 30.8 q -4.7 -7.4 5.6 6.2" stroke="#38b040" stroke-width="1" fill="none"/><path d="M213.4 69.2 q 1.6 -3.4 -6.4 -8.0" stroke="#38b040" stroke-width="1" fill="none"/></g><defs><clipPath id="nc0"><path d="M93.0 18.0 C94.7 14.3 101.3 10.3 106.0 8.0 C110.7 5.7 116.0 5.0 121.0 4.0 C126.0 3.0 132.3 1.0 136.0 2.0 C139.7 3.0 142.0 6.0 143.0 10.0 C144.0 14.0 143.2 21.3 142.0 26.0 C140.8 30.7 140.3 35.5 136.0 38.0 C131.7 40.5 121.8 41.0 116.0 41.0 C110.2 41.0 104.3 39.8 101.0 38.0 C97.7 36.2 97.3 33.3 96.0 30.0 C94.7 26.7 91.3 21.7 93.0 18.0 Z"/></clipPath><clipPath id="nc1"><path d="M195.0 86.0 C198.2 90.5 202.0 98.0 203.0 103.0 C204.0 108.0 203.7 111.0 201.0 116.0 C198.3 121.0 191.2 130.5 187.0 133.0 C182.8 135.5 179.5 133.3 176.0 131.0 C172.5 128.7 168.2 124.0 166.0 119.0 C163.8 114.0 162.0 106.7 163.0 101.0 C164.0 95.3 168.5 89.2 172.0 85.0 C175.5 80.8 180.2 75.8 184.0 76.0 C187.8 76.2 191.8 81.5 195.0 86.0 Z"/></clipPath><clipPath id="nc2"><path d="M116.0 138.0 C119.8 140.5 123.7 148.7 125.0 155.0 C126.3 161.3 125.5 170.2 124.0 176.0 C122.5 181.8 119.2 188.0 116.0 190.0 C112.8 192.0 108.3 191.2 105.0 188.0 C101.7 184.8 98.0 177.2 96.0 171.0 C94.0 164.8 92.0 156.2 93.0 151.0 C94.0 145.8 98.2 142.2 102.0 140.0 C105.8 137.8 112.2 135.5 116.0 138.0 Z"/></clipPath></defs><g clip-path="url(#nc0)"><path d="M93.0 18.0 C94.7 14.3 101.3 10.3 106.0 8.0 C110.7 5.7 116.0 5.0 121.0 4.0 C126.0 3.0 132.3 1.0 136.0 2.0 C139.7 3.0 142.0 6.0 143.0 10.0 C144.0 14.0 143.2 21.3 142.0 26.0 C140.8 30.7 140.3 35.5 136.0 38.0 C131.7 40.5 121.8 41.0 116.0 41.0 C110.2 41.0 104.3 39.8 101.0 38.0 C97.7 36.2 97.3 33.3 96.0 30.0 C94.7 26.7 91.3 21.7 93.0 18.0 Z" fill="#6e1a08"/><rect x="131" y="10" width="1" height="1" fill="#c04a10"/><rect x="110" y="12" width="1" height="1" fill="#c04a10"/><rect x="106" y="13" width="1" height="1" fill="#5a1004"/><rect x="131" y="38" width="1" height="1" fill="#7a7a10"/><rect x="141" y="22" width="1" height="1" fill="#7a7a10"/><rect x="107" y="31" width="1" height="1" fill="#7a7a10"/><rect x="114" y="19" width="1" height="1" fill="#7a7a10"/><rect x="98" y="20" width="1" height="1" fill="#b02a0a"/><rect x="120" y="10" width="1" height="1" fill="#7a7a10"/><rect x="134" y="24" width="1" height="1" fill="#c04a10"/><rect x="102" y="2" width="1" height="1" fill="#a03a0a"/><rect x="107" y="31" width="1" height="1" fill="#b02a0a"/><rect x="93" y="21" width="1" height="1" fill="#3a0a04"/><rect x="128" y="34" width="1" height="1" fill="#3a0a04"/><rect x="123" y="39" width="1" height="1" fill="#8a1a06"/><rect x="106" y="39" width="1" height="1" fill="#c04a10"/><rect x="134" y="39" width="1" height="1" fill="#a03a0a"/><rect x="118" y="6" width="1" height="1" fill="#5a1004"/><rect x="131" y="21" width="1" height="1" fill="#5a1004"/><rect x="121" y="6" width="1" height="1" fill="#c04a10"/><rect x="111" y="18" width="1" height="1" fill="#3a0a04"/><rect x="138" y="31" width="1" height="1" fill="#3a0a04"/><rect x="137" y="3" width="1" height="1" fill="#a03a0a"/><rect x="108" y="19" width="1" height="1" fill="#8a1a06"/><rect x="118" y="17" width="1" height="1" fill="#5a1004"/><rect x="105" y="20" width="1" height="1" fill="#8a1a06"/><rect x="123" y="29" width="1" height="1" fill="#8a1a06"/><rect x="125" y="16" width="1" height="1" fill="#c04a10"/><rect x="119" y="36" width="1" height="1" fill="#3a0a04"/><rect x="126" y="31" width="1" height="1" fill="#a03a0a"/><rect x="116" y="29" width="1" height="1" fill="#c04a10"/><rect x="122" y="7" width="1" height="1" fill="#3a0a04"/><rect x="125" y="29" width="1" height="1" fill="#8a1a06"/><rect x="103" y="14" width="1" height="1" fill="#5a1004"/><rect x="134" y="26" width="1" height="1" fill="#5a1004"/><rect x="101" y="12" width="1" height="1" fill="#c04a10"/><rect x="123" y="16" width="1" height="1" fill="#a03a0a"/><rect x="109" y="9" width="1" height="1" fill="#5a1004"/><rect x="143" y="8" width="1" height="1" fill="#5a1004"/><rect x="98" y="17" width="1" height="1" fill="#a03a0a"/><rect x="133" y="31" width="1" height="1" fill="#3a0a04"/><rect x="107" y="6" width="1" height="1" fill="#b02a0a"/><rect x="107" y="37" width="1" height="1" fill="#3a0a04"/><rect x="95" y="18" width="1" height="1" fill="#7a7a10"/><rect x="115" y="11" width="1" height="1" fill="#5a1004"/><rect x="108" y="3" width="1" height="1" fill="#c04a10"/><rect x="123" y="18" width="1" height="1" fill="#5a1004"/><rect x="105" y="35" width="1" height="1" fill="#5a1004"/><rect x="122" y="31" width="1" height="1" fill="#3a0a04"/><rect x="135" y="28" width="1" height="1" fill="#5a1004"/><rect x="137" y="32" width="1" height="1" fill="#5a1004"/><rect x="122" y="11" width="1" height="1" fill="#a03a0a"/><rect x="125" y="20" width="1" height="1" fill="#c04a10"/><rect x="106" y="29" width="1" height="1" fill="#3a0a04"/><rect x="105" y="18" width="1" height="1" fill="#5a1004"/><rect x="124" y="12" width="1" height="1" fill="#3a0a04"/><rect x="117" y="3" width="1" height="1" fill="#7a7a10"/><rect x="113" y="28" width="1" height="1" fill="#7a7a10"/><rect x="102" y="28" width="1" height="1" fill="#7a7a10"/><rect x="94" y="34" width="1" height="1" fill="#b02a0a"/><rect x="95" y="23" width="1" height="1" fill="#a03a0a"/><rect x="129" y="39" width="1" height="1" fill="#a03a0a"/><rect x="119" y="6" width="1" height="1" fill="#8a1a06"/><rect x="116" y="10" width="1" height="1" fill="#3a0a04"/><rect x="119" y="27" width="1" height="1" fill="#7a7a10"/><rect x="111" y="15" width="1" height="1" fill="#5a1004"/><rect x="140" y="10" width="1" height="1" fill="#5a1004"/><rect x="102" y="22" width="1" height="1" fill="#b02a0a"/><rect x="129" y="26" width="1" height="1" fill="#5a1004"/><rect x="96" y="13" width="1" height="1" fill="#3a0a04"/><rect x="96" y="5" width="1" height="1" fill="#3a0a04"/><rect x="124" y="28" width="1" height="1" fill="#8a1a06"/><rect x="106" y="11" width="1" height="1" fill="#5a1004"/><rect x="113" y="39" width="1" height="1" fill="#a03a0a"/><rect x="143" y="39" width="1" height="1" fill="#3a0a04"/><rect x="104" y="7" width="1" height="1" fill="#7a7a10"/><rect x="96" y="33" width="1" height="1" fill="#a03a0a"/><rect x="116" y="24" width="1" height="1" fill="#a03a0a"/><rect x="134" y="8" width="1" height="1" fill="#5a1004"/><rect x="125" y="34" width="1" height="1" fill="#7a7a10"/><rect x="114" y="41" width="1" height="1" fill="#7a7a10"/><rect x="120" y="7" width="1" height="1" fill="#7a7a10"/><rect x="116" y="33" width="1" height="1" fill="#a03a0a"/><rect x="106" y="17" width="1" height="1" fill="#c04a10"/><rect x="142" y="28" width="1" height="1" fill="#3a0a04"/><rect x="93" y="30" width="1" height="1" fill="#c04a10"/><rect x="111" y="28" width="1" height="1" fill="#c04a10"/><rect x="117" y="19" width="1" height="1" fill="#5a1004"/><rect x="97" y="37" width="1" height="1" fill="#a03a0a"/><rect x="139" y="35" width="1" height="1" fill="#b02a0a"/><rect x="97" y="24" width="1" height="1" fill="#c04a10"/><rect x="132" y="7" width="1" height="1" fill="#7a7a10"/><rect x="110" y="25" width="1" height="1" fill="#5a1004"/><rect x="94" y="39" width="1" height="1" fill="#5a1004"/><rect x="108" y="26" width="1" height="1" fill="#8a1a06"/><rect x="100" y="11" width="1" height="1" fill="#7a7a10"/><rect x="116" y="33" width="1" height="1" fill="#a03a0a"/><rect x="138" y="33" width="1" height="1" fill="#a03a0a"/><rect x="123" y="29" width="1" height="1" fill="#7a7a10"/><rect x="98" y="37" width="1" height="1" fill="#8a1a06"/><rect x="132" y="35" width="1" height="1" fill="#a03a0a"/><rect x="118" y="10" width="1" height="1" fill="#b02a0a"/><rect x="130" y="19" width="1" height="1" fill="#b02a0a"/><rect x="121" y="12" width="1" height="1" fill="#a03a0a"/><rect x="134" y="20" width="1" height="1" fill="#8a1a06"/><rect x="96" y="20" width="1" height="1" fill="#a03a0a"/><rect x="128" y="12" width="1" height="1" fill="#a03a0a"/><rect x="120" y="36" width="1" height="1" fill="#b02a0a"/><rect x="101" y="15" width="1" height="1" fill="#5a1004"/><rect x="121" y="28" width="1" height="1" fill="#7a7a10"/><rect x="116" y="19" width="1" height="1" fill="#5a1004"/><rect x="97" y="27" width="1" height="1" fill="#5a1004"/><rect x="125" y="3" width="1" height="1" fill="#b02a0a"/><rect x="127" y="38" width="1" height="1" fill="#c04a10"/><rect x="133" y="6" width="1" height="1" fill="#3a0a04"/><rect x="117" y="37" width="1" height="1" fill="#b02a0a"/><rect x="104" y="18" width="1" height="1" fill="#a03a0a"/><rect x="110" y="36" width="1" height="1" fill="#c04a10"/><rect x="110" y="32" width="1" height="1" fill="#8a1a06"/><rect x="132" y="10" width="1" height="1" fill="#3a0a04"/><rect x="110" y="12" width="1" height="1" fill="#b02a0a"/><rect x="134" y="13" width="1" height="1" fill="#7a7a10"/><rect x="118" y="15" width="1" height="1" fill="#c04a10"/><rect x="137" y="15" width="1" height="1" fill="#a03a0a"/><rect x="126" y="33" width="1" height="1" fill="#c04a10"/><rect x="103" y="30" width="1" height="1" fill="#a03a0a"/><rect x="122" y="27" width="1" height="1" fill="#7a7a10"/><rect x="143" y="18" width="1" height="1" fill="#8a1a06"/><rect x="137" y="23" width="1" height="1" fill="#b02a0a"/><rect x="113" y="6" width="1" height="1" fill="#b02a0a"/><rect x="102" y="38" width="1" height="1" fill="#8a1a06"/><rect x="131" y="4" width="1" height="1" fill="#8a1a06"/><rect x="138" y="26" width="1" height="1" fill="#8a1a06"/><rect x="100" y="28" width="1" height="1" fill="#5a1004"/><rect x="123" y="29" width="1" height="1" fill="#a03a0a"/><rect x="95" y="27" width="1" height="1" fill="#5a1004"/><rect x="131" y="6" width="1" height="1" fill="#a03a0a"/><rect x="136" y="18" width="1" height="1" fill="#b02a0a"/><rect x="139" y="28" width="1" height="1" fill="#c04a10"/><rect x="137" y="7" width="1" height="1" fill="#c04a10"/><rect x="121" y="12" width="1" height="1" fill="#c04a10"/><rect x="102" y="3" width="1" height="1" fill="#b02a0a"/><rect x="115" y="27" width="1" height="1" fill="#b02a0a"/><rect x="118" y="22" width="1" height="1" fill="#7a7a10"/><rect x="99" y="34" width="1" height="1" fill="#8a1a06"/><rect x="128" y="18" width="1" height="1" fill="#b02a0a"/><rect x="94" y="17" width="1" height="1" fill="#8a1a06"/><rect x="143" y="28" width="1" height="1" fill="#a03a0a"/><rect x="117" y="18" width="1" height="1" fill="#b02a0a"/><rect x="97" y="20" width="1" height="1" fill="#a03a0a"/><rect x="124" y="19" width="1" height="1" fill="#b02a0a"/><rect x="127" y="7" width="1" height="1" fill="#7a7a10"/><rect x="97" y="36" width="1" height="1" fill="#a03a0a"/><rect x="117" y="13" width="1" height="1" fill="#8a1a06"/><rect x="105" y="31" width="1" height="1" fill="#a03a0a"/><rect x="139" y="16" width="1" height="1" fill="#5a1004"/><rect x="129" y="35" width="1" height="1" fill="#5a1004"/><rect x="131" y="13" width="1" height="1" fill="#8a1a06"/><rect x="128" y="20" width="1" height="1" fill="#c04a10"/><rect x="139" y="4" width="1" height="1" fill="#b02a0a"/><rect x="94" y="3" width="1" height="1" fill="#5a1004"/><rect x="127" y="26" width="1" height="1" fill="#3a0a04"/><rect x="109" y="30" width="1" height="1" fill="#a03a0a"/><rect x="141" y="35" width="1" height="1" fill="#8a1a06"/><rect x="96" y="16" width="1" height="1" fill="#8a1a06"/><rect x="129" y="20" width="1" height="1" fill="#a03a0a"/><rect x="100" y="33" width="1" height="1" fill="#c04a10"/><rect x="141" y="8" width="1" height="1" fill="#7a7a10"/><rect x="114" y="17" width="1" height="1" fill="#7a7a10"/><rect x="116" y="13" width="1" height="1" fill="#7a7a10"/><rect x="121" y="13" width="1" height="1" fill="#b02a0a"/><rect x="124" y="27" width="1" height="1" fill="#7a7a10"/><rect x="134" y="15" width="1" height="1" fill="#8a1a06"/><rect x="129" y="3" width="1" height="1" fill="#a03a0a"/><rect x="123" y="14" width="1" height="1" fill="#3a0a04"/><rect x="142" y="12" width="1" height="1" fill="#3a0a04"/><rect x="127" y="25" width="1" height="1" fill="#a03a0a"/><rect x="133" y="13" width="1" height="1" fill="#b02a0a"/><rect x="109" y="12" width="1" height="1" fill="#a03a0a"/><rect x="122" y="34" width="1" height="1" fill="#7a7a10"/><rect x="95" y="34" width="1" height="1" fill="#7a7a10"/><rect x="138" y="41" width="1" height="1" fill="#a03a0a"/><rect x="107" y="35" width="1" height="1" fill="#7a7a10"/><rect x="120" y="32" width="1" height="1" fill="#3a0a04"/><rect x="110" y="5" width="1" height="1" fill="#8a1a06"/><rect x="117" y="17" width="1" height="1" fill="#7a7a10"/><rect x="131" y="38" width="1" height="1" fill="#a03a0a"/><rect x="108" y="4" width="1" height="1" fill="#3a0a04"/><rect x="116" y="10" width="1" height="1" fill="#c04a10"/><rect x="122" y="2" width="1" height="1" fill="#3a0a04"/><rect x="116" y="5" width="1" height="1" fill="#7a7a10"/><rect x="111" y="4" width="1" height="1" fill="#3a0a04"/><rect x="122" y="37" width="1" height="1" fill="#7a7a10"/><rect x="119" y="21" width="1" height="1" fill="#8a1a06"/><rect x="103" y="10" width="1" height="1" fill="#b02a0a"/><rect x="102" y="29" width="1" height="1" fill="#c04a10"/><rect x="122" y="16" width="1" height="1" fill="#7a7a10"/><rect x="119" y="8" width="1" height="1" fill="#b02a0a"/><rect x="139" y="21" width="1" height="1" fill="#7a7a10"/><rect x="98" y="27" width="1" height="1" fill="#7a7a10"/><rect x="97" y="14" width="1" height="1" fill="#b02a0a"/><rect x="110" y="22" width="1" height="1" fill="#b02a0a"/><rect x="98" y="10" width="1" height="1" fill="#7a7a10"/><rect x="136" y="21" width="1" height="1" fill="#8a1a06"/><rect x="104" y="38" width="1" height="1" fill="#c04a10"/><rect x="114" y="39" width="1" height="1" fill="#7a7a10"/><rect x="123" y="26" width="1" height="1" fill="#a03a0a"/><rect x="106" y="3" width="1" height="1" fill="#a03a0a"/><rect x="143" y="17" width="1" height="1" fill="#b02a0a"/><rect x="96" y="24" width="1" height="1" fill="#7a7a10"/><rect x="128" y="21" width="1" height="1" fill="#7a7a10"/><rect x="138" y="5" width="1" height="1" fill="#8a1a06"/><rect x="125" y="38" width="1" height="1" fill="#5a1004"/><rect x="141" y="12" width="1" height="1" fill="#8a1a06"/><rect x="105" y="6" width="1" height="1" fill="#5a1004"/><rect x="118" y="9" width="1" height="1" fill="#7a7a10"/><rect x="101" y="40" width="1" height="1" fill="#5a1004"/><rect x="104" y="4" width="1" height="1" fill="#c04a10"/><rect x="140" y="4" width="1" height="1" fill="#8a1a06"/><rect x="138" y="35" width="1" height="1" fill="#b02a0a"/><rect x="106" y="22" width="1" height="1" fill="#5a1004"/><rect x="125" y="40" width="1" height="1" fill="#b02a0a"/><rect x="98" y="14" width="1" height="1" fill="#b02a0a"/><rect x="140" y="28" width="1" height="1" fill="#c04a10"/><rect x="122" y="19" width="1" height="1" fill="#5a1004"/><rect x="98" y="15" width="1" height="1" fill="#c04a10"/><rect x="113" y="17" width="1" height="1" fill="#3a0a04"/><rect x="101" y="11" width="1" height="1" fill="#a03a0a"/><rect x="139" y="37" width="1" height="1" fill="#3a0a04"/><rect x="129" y="10" width="1" height="1" fill="#b02a0a"/><rect x="101" y="34" width="1" height="1" fill="#b02a0a"/><rect x="140" y="36" width="1" height="1" fill="#5a1004"/><rect x="100" y="19" width="1" height="1" fill="#b02a0a"/><rect x="139" y="17" width="1" height="1" fill="#b02a0a"/><rect x="124" y="20" width="1" height="1" fill="#c04a10"/><rect x="109" y="11" width="1" height="1" fill="#b02a0a"/><rect x="124" y="8" width="1" height="1" fill="#a03a0a"/><rect x="130" y="9" width="1" height="1" fill="#3a0a04"/><rect x="121" y="8" width="1" height="1" fill="#7a7a10"/><rect x="100" y="18" width="1" height="1" fill="#a03a0a"/><rect x="101" y="13" width="1" height="1" fill="#7a7a10"/><rect x="108" y="33" width="1" height="1" fill="#c04a10"/><rect x="118" y="14" width="1" height="1" fill="#3a0a04"/><rect x="99" y="40" width="1" height="1" fill="#b02a0a"/><rect x="125" y="33" width="1" height="1" fill="#a03a0a"/><rect x="121" y="35" width="1" height="1" fill="#b02a0a"/><rect x="106" y="10" width="1" height="1" fill="#c04a10"/><rect x="115" y="12" width="1" height="1" fill="#a03a0a"/><rect x="139" y="6" width="1" height="1" fill="#c04a10"/><rect x="114" y="8" width="1" height="1" fill="#7a7a10"/><rect x="129" y="13" width="1" height="1" fill="#5a1004"/><rect x="94" y="33" width="1" height="1" fill="#c04a10"/><rect x="119" y="19" width="1" height="1" fill="#7a7a10"/><rect x="135" y="23" width="1" height="1" fill="#a03a0a"/><rect x="111" y="4" width="1" height="1" fill="#3a0a04"/><rect x="104" y="24" width="1" height="1" fill="#a03a0a"/><rect x="135" y="22" width="1" height="1" fill="#a03a0a"/><rect x="129" y="10" width="1" height="1" fill="#b02a0a"/><rect x="134" y="37" width="1" height="1" fill="#5a1004"/><rect x="118" y="13" width="1" height="1" fill="#a03a0a"/><rect x="100" y="28" width="1" height="1" fill="#5a1004"/><rect x="134" y="25" width="1" height="1" fill="#a03a0a"/><rect x="94" y="29" width="1" height="1" fill="#8a1a06"/><rect x="113" y="30" width="1" height="1" fill="#b02a0a"/><rect x="119" y="16" width="1" height="1" fill="#c04a10"/><rect x="135" y="36" width="1" height="1" fill="#3a0a04"/><rect x="98" y="18" width="1" height="1" fill="#7a7a10"/><rect x="117" y="36" width="1" height="1" fill="#c04a10"/><rect x="105" y="24" width="1" height="1" fill="#c04a10"/><rect x="95" y="29" width="1" height="1" fill="#8a1a06"/><rect x="123" y="2" width="1" height="1" fill="#8a1a06"/><rect x="140" y="40" width="1" height="1" fill="#b02a0a"/><rect x="99" y="30" width="1" height="1" fill="#7a7a10"/><rect x="135" y="38" width="1" height="1" fill="#7a7a10"/><rect x="129" y="17" width="1" height="1" fill="#7a7a10"/><rect x="138" y="13" width="1" height="1" fill="#b02a0a"/><rect x="141" y="21" width="1" height="1" fill="#8a1a06"/><rect x="94" y="33" width="1" height="1" fill="#a03a0a"/><path d="M93.0 18.0 C94.7 14.3 101.3 10.3 106.0 8.0 C110.7 5.7 116.0 5.0 121.0 4.0 C126.0 3.0 132.3 1.0 136.0 2.0 C139.7 3.0 142.0 6.0 143.0 10.0 C144.0 14.0 143.2 21.3 142.0 26.0 C140.8 30.7 140.3 35.5 136.0 38.0 C131.7 40.5 121.8 41.0 116.0 41.0 C110.2 41.0 104.3 39.8 101.0 38.0 C97.7 36.2 97.3 33.3 96.0 30.0 C94.7 26.7 91.3 21.7 93.0 18.0 Z" fill="none" stroke="#9a8a10" stroke-width="2" opacity="0.35"/></g><g clip-path="url(#nc1)"><path d="M195.0 86.0 C198.2 90.5 202.0 98.0 203.0 103.0 C204.0 108.0 203.7 111.0 201.0 116.0 C198.3 121.0 191.2 130.5 187.0 133.0 C182.8 135.5 179.5 133.3 176.0 131.0 C172.5 128.7 168.2 124.0 166.0 119.0 C163.8 114.0 162.0 106.7 163.0 101.0 C164.0 95.3 168.5 89.2 172.0 85.0 C175.5 80.8 180.2 75.8 184.0 76.0 C187.8 76.2 191.8 81.5 195.0 86.0 Z" fill="#6e1a08"/><rect x="164" y="131" width="1" height="1" fill="#a03a0a"/><rect x="188" y="86" width="1" height="1" fill="#c04a10"/><rect x="173" y="123" width="1" height="1" fill="#b02a0a"/><rect x="164" y="129" width="1" height="1" fill="#5a1004"/><rect x="171" y="77" width="1" height="1" fill="#8a1a06"/><rect x="188" y="102" width="1" height="1" fill="#a03a0a"/><rect x="191" y="82" width="1" height="1" fill="#7a7a10"/><rect x="167" y="86" width="1" height="1" fill="#c04a10"/><rect x="168" y="104" width="1" height="1" fill="#8a1a06"/><rect x="193" y="82" width="1" height="1" fill="#b02a0a"/><rect x="179" y="84" width="1" height="1" fill="#8a1a06"/><rect x="172" y="89" width="1" height="1" fill="#5a1004"/><rect x="186" y="119" width="1" height="1" fill="#a03a0a"/><rect x="201" y="77" width="1" height="1" fill="#5a1004"/><rect x="179" y="100" width="1" height="1" fill="#7a7a10"/><rect x="187" y="78" width="1" height="1" fill="#b02a0a"/><rect x="194" y="95" width="1" height="1" fill="#a03a0a"/><rect x="197" y="117" width="1" height="1" fill="#7a7a10"/><rect x="202" y="122" width="1" height="1" fill="#c04a10"/><rect x="196" y="124" width="1" height="1" fill="#b02a0a"/><rect x="176" y="84" width="1" height="1" fill="#5a1004"/><rect x="200" y="90" width="1" height="1" fill="#3a0a04"/><rect x="190" y="77" width="1" height="1" fill="#b02a0a"/><rect x="184" y="80" width="1" height="1" fill="#3a0a04"/><rect x="171" y="114" width="1" height="1" fill="#a03a0a"/><rect x="169" y="131" width="1" height="1" fill="#7a7a10"/><rect x="203" y="102" width="1" height="1" fill="#b02a0a"/><rect x="195" y="126" width="1" height="1" fill="#b02a0a"/><rect x="164" y="113" width="1" height="1" fill="#c04a10"/><rect x="200" y="112" width="1" height="1" fill="#5a1004"/><rect x="185" y="129" width="1" height="1" fill="#8a1a06"/><rect x="167" y="83" width="1" height="1" fill="#b02a0a"/><rect x="180" y="130" width="1" height="1" fill="#c04a10"/><rect x="168" y="96" width="1" height="1" fill="#a03a0a"/><rect x="168" y="110" width="1" height="1" fill="#8a1a06"/><rect x="199" y="81" width="1" height="1" fill="#8a1a06"/><rect x="184" y="84" width="1" height="1" fill="#b02a0a"/><rect x="183" y="126" width="1" height="1" fill="#3a0a04"/><rect x="186" y="92" width="1" height="1" fill="#5a1004"/><rect x="167" y="107" width="1" height="1" fill="#7a7a10"/><rect x="181" y="116" width="1" height="1" fill="#a03a0a"/><rect x="189" y="87" width="1" height="1" fill="#5a1004"/><rect x="178" y="127" width="1" height="1" fill="#c04a10"/><rect x="188" y="103" width="1" height="1" fill="#c04a10"/><rect x="164" y="95" width="1" height="1" fill="#a03a0a"/><rect x="183" y="98" width="1" height="1" fill="#8a1a06"/><rect x="179" y="129" width="1" height="1" fill="#a03a0a"/><rect x="197" y="90" width="1" height="1" fill="#8a1a06"/><rect x="176" y="91" width="1" height="1" fill="#a03a0a"/><rect x="175" y="120" width="1" height="1" fill="#a03a0a"/><rect x="185" y="111" width="1" height="1" fill="#c04a10"/><rect x="181" y="80" width="1" height="1" fill="#3a0a04"/><rect x="196" y="96" width="1" height="1" fill="#7a7a10"/><rect x="167" y="89" width="1" height="1" fill="#5a1004"/><rect x="193" y="85" width="1" height="1" fill="#c04a10"/><rect x="190" y="84" width="1" height="1" fill="#a03a0a"/><rect x="188" y="124" width="1" height="1" fill="#7a7a10"/><rect x="197" y="81" width="1" height="1" fill="#7a7a10"/><rect x="193" y="119" width="1" height="1" fill="#3a0a04"/><rect x="174" y="112" width="1" height="1" fill="#5a1004"/><rect x="200" y="83" width="1" height="1" fill="#7a7a10"/><rect x="167" y="99" width="1" height="1" fill="#8a1a06"/><rect x="186" y="104" width="1" height="1" fill="#8a1a06"/><rect x="169" y="124" width="1" height="1" fill="#c04a10"/><rect x="198" y="111" width="1" height="1" fill="#3a0a04"/><rect x="197" y="115" width="1" height="1" fill="#c04a10"/><rect x="192" y="93" width="1" height="1" fill="#3a0a04"/><rect x="184" y="110" width="1" height="1" fill="#5a1004"/><rect x="176" y="121" width="1" height="1" fill="#7a7a10"/><rect x="203" y="98" width="1" height="1" fill="#c04a10"/><rect x="170" y="93" width="1" height="1" fill="#a03a0a"/><rect x="180" y="97" width="1" height="1" fill="#a03a0a"/><rect x="167" y="128" width="1" height="1" fill="#c04a10"/><rect x="202" y="111" width="1" height="1" fill="#a03a0a"/><rect x="201" y="88" width="1" height="1" fill="#3a0a04"/><rect x="199" y="130" width="1" height="1" fill="#b02a0a"/><rect x="165" y="108" width="1" height="1" fill="#3a0a04"/><rect x="175" y="107" width="1" height="1" fill="#c04a10"/><rect x="185" y="133" width="1" height="1" fill="#8a1a06"/><rect x="196" y="117" width="1" height="1" fill="#3a0a04"/><rect x="179" y="96" width="1" height="1" fill="#8a1a06"/><rect x="190" y="102" width="1" height="1" fill="#b02a0a"/><rect x="190" y="106" width="1" height="1" fill="#b02a0a"/><rect x="179" y="105" width="1" height="1" fill="#5a1004"/><rect x="185" y="109" width="1" height="1" fill="#a03a0a"/><rect x="202" y="104" width="1" height="1" fill="#3a0a04"/><rect x="194" y="127" width="1" height="1" fill="#8a1a06"/><rect x="177" y="106" width="1" height="1" fill="#7a7a10"/><rect x="167" y="97" width="1" height="1" fill="#c04a10"/><rect x="202" y="123" width="1" height="1" fill="#8a1a06"/><rect x="170" y="113" width="1" height="1" fill="#c04a10"/><rect x="191" y="123" width="1" height="1" fill="#8a1a06"/><rect x="199" y="100" width="1" height="1" fill="#a03a0a"/><rect x="184" y="123" width="1" height="1" fill="#a03a0a"/><rect x="183" y="87" width="1" height="1" fill="#a03a0a"/><rect x="165" y="108" width="1" height="1" fill="#b02a0a"/><rect x="177" y="133" width="1" height="1" fill="#5a1004"/><rect x="192" y="115" width="1" height="1" fill="#b02a0a"/><rect x="195" y="93" width="1" height="1" fill="#5a1004"/><rect x="185" y="128" width="1" height="1" fill="#3a0a04"/><rect x="197" y="109" width="1" height="1" fill="#5a1004"/><rect x="164" y="86" width="1" height="1" fill="#7a7a10"/><rect x="185" y="91" width="1" height="1" fill="#5a1004"/><rect x="199" y="105" width="1" height="1" fill="#a03a0a"/><rect x="186" y="99" width="1" height="1" fill="#b02a0a"/><rect x="169" y="106" width="1" height="1" fill="#8a1a06"/><rect x="167" y="82" width="1" height="1" fill="#a03a0a"/><rect x="201" y="104" width="1" height="1" fill="#3a0a04"/><rect x="188" y="122" width="1" height="1" fill="#b02a0a"/><rect x="189" y="115" width="1" height="1" fill="#8a1a06"/><rect x="176" y="117" width="1" height="1" fill="#c04a10"/><rect x="174" y="78" width="1" height="1" fill="#5a1004"/><rect x="167" y="128" width="1" height="1" fill="#8a1a06"/><rect x="166" y="87" width="1" height="1" fill="#8a1a06"/><rect x="178" y="79" width="1" height="1" fill="#3a0a04"/><rect x="186" y="131" width="1" height="1" fill="#3a0a04"/><rect x="165" y="90" width="1" height="1" fill="#a03a0a"/><rect x="165" y="129" width="1" height="1" fill="#7a7a10"/><rect x="170" y="76" width="1" height="1" fill="#7a7a10"/><rect x="196" y="93" width="1" height="1" fill="#8a1a06"/><rect x="173" y="127" width="1" height="1" fill="#b02a0a"/><rect x="173" y="98" width="1" height="1" fill="#5a1004"/><rect x="186" y="100" width="1" height="1" fill="#3a0a04"/><rect x="198" y="104" width="1" height="1" fill="#7a7a10"/><rect x="198" y="81" width="1" height="1" fill="#a03a0a"/><rect x="177" y="87" width="1" height="1" fill="#c04a10"/><rect x="179" y="97" width="1" height="1" fill="#c04a10"/><rect x="184" y="98" width="1" height="1" fill="#3a0a04"/><rect x="189" y="131" width="1" height="1" fill="#3a0a04"/><rect x="196" y="96" width="1" height="1" fill="#a03a0a"/><rect x="178" y="103" width="1" height="1" fill="#c04a10"/><rect x="172" y="78" width="1" height="1" fill="#5a1004"/><rect x="164" y="122" width="1" height="1" fill="#a03a0a"/><rect x="191" y="81" width="1" height="1" fill="#c04a10"/><rect x="185" y="121" width="1" height="1" fill="#8a1a06"/><rect x="181" y="124" width="1" height="1" fill="#7a7a10"/><rect x="173" y="97" width="1" height="1" fill="#a03a0a"/><rect x="192" y="97" width="1" height="1" fill="#8a1a06"/><rect x="171" y="130" width="1" height="1" fill="#8a1a06"/><rect x="171" y="125" width="1" height="1" fill="#5a1004"/><rect x="168" y="116" width="1" height="1" fill="#c04a10"/><rect x="187" y="101" width="1" height="1" fill="#c04a10"/><rect x="184" y="99" width="1" height="1" fill="#8a1a06"/><rect x="172" y="126" width="1" height="1" fill="#b02a0a"/><rect x="190" y="81" width="1" height="1" fill="#7a7a10"/><rect x="174" y="120" width="1" height="1" fill="#3a0a04"/><rect x="164" y="117" width="1" height="1" fill="#a03a0a"/><rect x="175" y="98" width="1" height="1" fill="#b02a0a"/><rect x="191" y="120" width="1" height="1" fill="#a03a0a"/><rect x="176" y="114" width="1" height="1" fill="#b02a0a"/><rect x="166" y="128" width="1" height="1" fill="#7a7a10"/><rect x="183" y="93" width="1" height="1" fill="#b02a0a"/><rect x="192" y="81" width="1" height="1" fill="#c04a10"/><rect x="168" y="117" width="1" height="1" fill="#c04a10"/><rect x="177" y="124" width="1" height="1" fill="#3a0a04"/><rect x="194" y="126" width="1" height="1" fill="#7a7a10"/><rect x="198" y="129" width="1" height="1" fill="#a03a0a"/><rect x="164" y="115" width="1" height="1" fill="#5a1004"/><rect x="191" y="127" width="1" height="1" fill="#b02a0a"/><rect x="189" y="116" width="1" height="1" fill="#a03a0a"/><rect x="203" y="99" width="1" height="1" fill="#5a1004"/><rect x="167" y="93" width="1" height="1" fill="#c04a10"/><rect x="200" y="118" width="1" height="1" fill="#5a1004"/><rect x="190" y="99" width="1" height="1" fill="#8a1a06"/><rect x="169" y="87" width="1" height="1" fill="#c04a10"/><rect x="169" y="118" width="1" height="1" fill="#8a1a06"/><rect x="175" y="112" width="1" height="1" fill="#a03a0a"/><rect x="186" y="89" width="1" height="1" fill="#3a0a04"/><rect x="192" y="91" width="1" height="1" fill="#3a0a04"/><rect x="190" y="109" width="1" height="1" fill="#b02a0a"/><rect x="167" y="120" width="1" height="1" fill="#5a1004"/><rect x="174" y="78" width="1" height="1" fill="#7a7a10"/><rect x="186" y="116" width="1" height="1" fill="#a03a0a"/><rect x="190" y="78" width="1" height="1" fill="#c04a10"/><rect x="171" y="128" width="1" height="1" fill="#5a1004"/><rect x="200" y="100" width="1" height="1" fill="#5a1004"/><rect x="179" y="119" width="1" height="1" fill="#7a7a10"/><rect x="172" y="106" width="1" height="1" fill="#c04a10"/><rect x="201" y="100" width="1" height="1" fill="#c04a10"/><rect x="191" y="118" width="1" height="1" fill="#7a7a10"/><rect x="197" y="112" width="1" height="1" fill="#8a1a06"/><rect x="165" y="116" width="1" height="1" fill="#3a0a04"/><rect x="190" y="124" width="1" height="1" fill="#7a7a10"/><rect x="168" y="119" width="1" height="1" fill="#b02a0a"/><rect x="201" y="123" width="1" height="1" fill="#8a1a06"/><rect x="173" y="107" width="1" height="1" fill="#7a7a10"/><rect x="189" y="107" width="1" height="1" fill="#a03a0a"/><rect x="202" y="86" width="1" height="1" fill="#c04a10"/><rect x="179" y="87" width="1" height="1" fill="#c04a10"/><rect x="168" y="115" width="1" height="1" fill="#3a0a04"/><rect x="190" y="90" width="1" height="1" fill="#a03a0a"/><rect x="163" y="115" width="1" height="1" fill="#a03a0a"/><rect x="200" y="96" width="1" height="1" fill="#c04a10"/><rect x="168" y="116" width="1" height="1" fill="#8a1a06"/><rect x="186" y="95" width="1" height="1" fill="#7a7a10"/><rect x="168" y="100" width="1" height="1" fill="#a03a0a"/><rect x="190" y="85" width="1" height="1" fill="#3a0a04"/><rect x="197" y="99" width="1" height="1" fill="#a03a0a"/><rect x="168" y="92" width="1" height="1" fill="#c04a10"/><rect x="182" y="78" width="1" height="1" fill="#c04a10"/><rect x="175" y="82" width="1" height="1" fill="#c04a10"/><rect x="181" y="82" width="1" height="1" fill="#c04a10"/><rect x="181" y="108" width="1" height="1" fill="#c04a10"/><rect x="170" y="80" width="1" height="1" fill="#b02a0a"/><rect x="182" y="132" width="1" height="1" fill="#3a0a04"/><rect x="166" y="117" width="1" height="1" fill="#5a1004"/><rect x="186" y="82" width="1" height="1" fill="#3a0a04"/><rect x="201" y="104" width="1" height="1" fill="#7a7a10"/><rect x="185" y="76" width="1" height="1" fill="#b02a0a"/><rect x="189" y="112" width="1" height="1" fill="#5a1004"/><rect x="189" y="90" width="1" height="1" fill="#a03a0a"/><rect x="166" y="119" width="1" height="1" fill="#b02a0a"/><rect x="194" y="124" width="1" height="1" fill="#c04a10"/><rect x="178" y="131" width="1" height="1" fill="#8a1a06"/><rect x="197" y="129" width="1" height="1" fill="#a03a0a"/><rect x="167" y="117" width="1" height="1" fill="#c04a10"/><rect x="193" y="95" width="1" height="1" fill="#a03a0a"/><rect x="189" y="96" width="1" height="1" fill="#a03a0a"/><rect x="178" y="107" width="1" height="1" fill="#c04a10"/><rect x="197" y="90" width="1" height="1" fill="#b02a0a"/><rect x="165" y="108" width="1" height="1" fill="#5a1004"/><rect x="200" y="133" width="1" height="1" fill="#3a0a04"/><rect x="199" y="130" width="1" height="1" fill="#3a0a04"/><rect x="180" y="118" width="1" height="1" fill="#c04a10"/><rect x="187" y="112" width="1" height="1" fill="#a03a0a"/><rect x="191" y="85" width="1" height="1" fill="#3a0a04"/><rect x="188" y="99" width="1" height="1" fill="#b02a0a"/><rect x="197" y="103" width="1" height="1" fill="#a03a0a"/><rect x="192" y="76" width="1" height="1" fill="#7a7a10"/><rect x="187" y="124" width="1" height="1" fill="#8a1a06"/><rect x="180" y="92" width="1" height="1" fill="#5a1004"/><rect x="165" y="117" width="1" height="1" fill="#c04a10"/><rect x="166" y="77" width="1" height="1" fill="#7a7a10"/><rect x="170" y="117" width="1" height="1" fill="#3a0a04"/><rect x="175" y="101" width="1" height="1" fill="#8a1a06"/><rect x="190" y="108" width="1" height="1" fill="#3a0a04"/><rect x="166" y="94" width="1" height="1" fill="#3a0a04"/><rect x="180" y="106" width="1" height="1" fill="#5a1004"/><rect x="198" y="132" width="1" height="1" fill="#8a1a06"/><rect x="188" y="122" width="1" height="1" fill="#b02a0a"/><rect x="192" y="95" width="1" height="1" fill="#5a1004"/><rect x="175" y="109" width="1" height="1" fill="#c04a10"/><rect x="182" y="113" width="1" height="1" fill="#c04a10"/><rect x="198" y="106" width="1" height="1" fill="#5a1004"/><rect x="164" y="87" width="1" height="1" fill="#5a1004"/><rect x="193" y="115" width="1" height="1" fill="#a03a0a"/><rect x="189" y="97" width="1" height="1" fill="#8a1a06"/><rect x="201" y="97" width="1" height="1" fill="#a03a0a"/><rect x="186" y="99" width="1" height="1" fill="#b02a0a"/><rect x="172" y="131" width="1" height="1" fill="#a03a0a"/><rect x="185" y="82" width="1" height="1" fill="#7a7a10"/><rect x="196" y="113" width="1" height="1" fill="#a03a0a"/><rect x="184" y="90" width="1" height="1" fill="#3a0a04"/><rect x="172" y="102" width="1" height="1" fill="#8a1a06"/><rect x="186" y="82" width="1" height="1" fill="#8a1a06"/><rect x="199" y="108" width="1" height="1" fill="#7a7a10"/><rect x="179" y="80" width="1" height="1" fill="#3a0a04"/><rect x="168" y="105" width="1" height="1" fill="#8a1a06"/><rect x="192" y="119" width="1" height="1" fill="#b02a0a"/><rect x="188" y="131" width="1" height="1" fill="#8a1a06"/><rect x="167" y="123" width="1" height="1" fill="#3a0a04"/><rect x="185" y="131" width="1" height="1" fill="#a03a0a"/><rect x="186" y="120" width="1" height="1" fill="#a03a0a"/><rect x="178" y="111" width="1" height="1" fill="#3a0a04"/><rect x="172" y="97" width="1" height="1" fill="#b02a0a"/><rect x="191" y="130" width="1" height="1" fill="#3a0a04"/><rect x="175" y="116" width="1" height="1" fill="#3a0a04"/><rect x="199" y="81" width="1" height="1" fill="#7a7a10"/><rect x="171" y="83" width="1" height="1" fill="#5a1004"/><rect x="198" y="86" width="1" height="1" fill="#5a1004"/><rect x="197" y="122" width="1" height="1" fill="#5a1004"/><rect x="190" y="123" width="1" height="1" fill="#b02a0a"/><rect x="173" y="105" width="1" height="1" fill="#8a1a06"/><rect x="201" y="117" width="1" height="1" fill="#b02a0a"/><rect x="196" y="96" width="1" height="1" fill="#c04a10"/><rect x="185" y="122" width="1" height="1" fill="#b02a0a"/><rect x="164" y="128" width="1" height="1" fill="#a03a0a"/><rect x="173" y="87" width="1" height="1" fill="#3a0a04"/><rect x="164" y="132" width="1" height="1" fill="#3a0a04"/><rect x="168" y="77" width="1" height="1" fill="#b02a0a"/><rect x="166" y="91" width="1" height="1" fill="#a03a0a"/><rect x="185" y="93" width="1" height="1" fill="#5a1004"/><rect x="190" y="124" width="1" height="1" fill="#8a1a06"/><rect x="198" y="107" width="1" height="1" fill="#5a1004"/><rect x="193" y="91" width="1" height="1" fill="#3a0a04"/><rect x="164" y="96" width="1" height="1" fill="#a03a0a"/><rect x="182" y="104" width="1" height="1" fill="#b02a0a"/><rect x="195" y="78" width="1" height="1" fill="#a03a0a"/><rect x="188" y="113" width="1" height="1" fill="#8a1a06"/><rect x="179" y="103" width="1" height="1" fill="#a03a0a"/><rect x="191" y="102" width="1" height="1" fill="#a03a0a"/><rect x="198" y="111" width="1" height="1" fill="#b02a0a"/><rect x="177" y="106" width="1" height="1" fill="#c04a10"/><rect x="199" y="110" width="1" height="1" fill="#b02a0a"/><rect x="171" y="123" width="1" height="1" fill="#5a1004"/><rect x="182" y="109" width="1" height="1" fill="#3a0a04"/><rect x="200" y="94" width="1" height="1" fill="#c04a10"/><rect x="186" y="95" width="1" height="1" fill="#b02a0a"/><rect x="173" y="126" width="1" height="1" fill="#8a1a06"/><rect x="165" y="84" width="1" height="1" fill="#5a1004"/><rect x="169" y="98" width="1" height="1" fill="#b02a0a"/><rect x="183" y="91" width="1" height="1" fill="#8a1a06"/><rect x="186" y="109" width="1" height="1" fill="#a03a0a"/><rect x="203" y="78" width="1" height="1" fill="#8a1a06"/><rect x="199" y="81" width="1" height="1" fill="#a03a0a"/><rect x="194" y="112" width="1" height="1" fill="#5a1004"/><rect x="167" y="121" width="1" height="1" fill="#7a7a10"/><rect x="195" y="126" width="1" height="1" fill="#a03a0a"/><rect x="190" y="93" width="1" height="1" fill="#7a7a10"/><rect x="177" y="97" width="1" height="1" fill="#7a7a10"/><rect x="188" y="96" width="1" height="1" fill="#8a1a06"/><rect x="192" y="95" width="1" height="1" fill="#5a1004"/><rect x="176" y="94" width="1" height="1" fill="#7a7a10"/><rect x="182" y="97" width="1" height="1" fill="#a03a0a"/><rect x="195" y="133" width="1" height="1" fill="#a03a0a"/><rect x="168" y="76" width="1" height="1" fill="#7a7a10"/><rect x="190" y="99" width="1" height="1" fill="#3a0a04"/><rect x="186" y="93" width="1" height="1" fill="#a03a0a"/><rect x="186" y="84" width="1" height="1" fill="#5a1004"/><rect x="175" y="117" width="1" height="1" fill="#8a1a06"/><rect x="189" y="131" width="1" height="1" fill="#b02a0a"/><rect x="200" y="109" width="1" height="1" fill="#b02a0a"/><rect x="186" y="93" width="1" height="1" fill="#c04a10"/><rect x="202" y="96" width="1" height="1" fill="#7a7a10"/><rect x="191" y="117" width="1" height="1" fill="#b02a0a"/><path d="M195.0 86.0 C198.2 90.5 202.0 98.0 203.0 103.0 C204.0 108.0 203.7 111.0 201.0 116.0 C198.3 121.0 191.2 130.5 187.0 133.0 C182.8 135.5 179.5 133.3 176.0 131.0 C172.5 128.7 168.2 124.0 166.0 119.0 C163.8 114.0 162.0 106.7 163.0 101.0 C164.0 95.3 168.5 89.2 172.0 85.0 C175.5 80.8 180.2 75.8 184.0 76.0 C187.8 76.2 191.8 81.5 195.0 86.0 Z" fill="none" stroke="#9a8a10" stroke-width="2" opacity="0.35"/></g><g clip-path="url(#nc2)"><path d="M116.0 138.0 C119.8 140.5 123.7 148.7 125.0 155.0 C126.3 161.3 125.5 170.2 124.0 176.0 C122.5 181.8 119.2 188.0 116.0 190.0 C112.8 192.0 108.3 191.2 105.0 188.0 C101.7 184.8 98.0 177.2 96.0 171.0 C94.0 164.8 92.0 156.2 93.0 151.0 C94.0 145.8 98.2 142.2 102.0 140.0 C105.8 137.8 112.2 135.5 116.0 138.0 Z" fill="#6e1a08"/><rect x="120" y="155" width="1" height="1" fill="#a03a0a"/><rect x="102" y="151" width="1" height="1" fill="#b02a0a"/><rect x="117" y="171" width="1" height="1" fill="#a03a0a"/><rect x="116" y="149" width="1" height="1" fill="#3a0a04"/><rect x="107" y="184" width="1" height="1" fill="#c04a10"/><rect x="121" y="172" width="1" height="1" fill="#a03a0a"/><rect x="101" y="141" width="1" height="1" fill="#a03a0a"/><rect x="112" y="142" width="1" height="1" fill="#7a7a10"/><rect x="119" y="168" width="1" height="1" fill="#5a1004"/><rect x="97" y="148" width="1" height="1" fill="#8a1a06"/><rect x="114" y="139" width="1" height="1" fill="#c04a10"/><rect x="123" y="149" width="1" height="1" fill="#c04a10"/><rect x="121" y="139" width="1" height="1" fill="#3a0a04"/><rect x="106" y="173" width="1" height="1" fill="#c04a10"/><rect x="99" y="183" width="1" height="1" fill="#7a7a10"/><rect x="94" y="171" width="1" height="1" fill="#c04a10"/><rect x="118" y="189" width="1" height="1" fill="#3a0a04"/><rect x="101" y="162" width="1" height="1" fill="#b02a0a"/><rect x="94" y="154" width="1" height="1" fill="#5a1004"/><rect x="125" y="141" width="1" height="1" fill="#8a1a06"/><rect x="116" y="181" width="1" height="1" fill="#a03a0a"/><rect x="96" y="146" width="1" height="1" fill="#a03a0a"/><rect x="110" y="182" width="1" height="1" fill="#c04a10"/><rect x="119" y="160" width="1" height="1" fill="#8a1a06"/><rect x="115" y="183" width="1" height="1" fill="#a03a0a"/><rect x="114" y="169" width="1" height="1" fill="#c04a10"/><rect x="100" y="170" width="1" height="1" fill="#7a7a10"/><rect x="116" y="178" width="1" height="1" fill="#7a7a10"/><rect x="114" y="172" width="1" height="1" fill="#8a1a06"/><rect x="124" y="162" width="1" height="1" fill="#c04a10"/><rect x="105" y="166" width="1" height="1" fill="#c04a10"/><rect x="97" y="138" width="1" height="1" fill="#3a0a04"/><rect x="96" y="180" width="1" height="1" fill="#c04a10"/><rect x="98" y="171" width="1" height="1" fill="#3a0a04"/><rect x="117" y="143" width="1" height="1" fill="#b02a0a"/><rect x="113" y="144" width="1" height="1" fill="#8a1a06"/><rect x="109" y="167" width="1" height="1" fill="#a03a0a"/><rect x="101" y="170" width="1" height="1" fill="#5a1004"/><rect x="98" y="147" width="1" height="1" fill="#5a1004"/><rect x="120" y="179" width="1" height="1" fill="#8a1a06"/><rect x="94" y="178" width="1" height="1" fill="#a03a0a"/><rect x="107" y="183" width="1" height="1" fill="#a03a0a"/><rect x="113" y="156" width="1" height="1" fill="#7a7a10"/><rect x="105" y="149" width="1" height="1" fill="#7a7a10"/><rect x="122" y="144" width="1" height="1" fill="#5a1004"/><rect x="93" y="180" width="1" height="1" fill="#3a0a04"/><rect x="115" y="156" width="1" height="1" fill="#a03a0a"/><rect x="111" y="159" width="1" height="1" fill="#3a0a04"/><rect x="123" y="171" width="1" height="1" fill="#a03a0a"/><rect x="94" y="139" width="1" height="1" fill="#5a1004"/><rect x="107" y="150" width="1" height="1" fill="#a03a0a"/><rect x="103" y="160" width="1" height="1" fill="#c04a10"/><rect x="103" y="190" width="1" height="1" fill="#a03a0a"/><rect x="124" y="179" width="1" height="1" fill="#3a0a04"/><rect x="121" y="183" width="1" height="1" fill="#c04a10"/><rect x="124" y="145" width="1" height="1" fill="#c04a10"/><rect x="102" y="155" width="1" height="1" fill="#3a0a04"/><rect x="121" y="151" width="1" height="1" fill="#c04a10"/><rect x="115" y="169" width="1" height="1" fill="#3a0a04"/><rect x="100" y="141" width="1" height="1" fill="#7a7a10"/><rect x="100" y="184" width="1" height="1" fill="#c04a10"/><rect x="94" y="178" width="1" height="1" fill="#3a0a04"/><rect x="99" y="183" width="1" height="1" fill="#c04a10"/><rect x="115" y="180" width="1" height="1" fill="#a03a0a"/><rect x="124" y="138" width="1" height="1" fill="#c04a10"/><rect x="98" y="176" width="1" height="1" fill="#b02a0a"/><rect x="117" y="162" width="1" height="1" fill="#3a0a04"/><rect x="96" y="156" width="1" height="1" fill="#5a1004"/><rect x="116" y="184" width="1" height="1" fill="#b02a0a"/><rect x="112" y="148" width="1" height="1" fill="#5a1004"/><rect x="115" y="140" width="1" height="1" fill="#8a1a06"/><rect x="112" y="168" width="1" height="1" fill="#5a1004"/><rect x="96" y="139" width="1" height="1" fill="#c04a10"/><rect x="95" y="144" width="1" height="1" fill="#3a0a04"/><rect x="124" y="165" width="1" height="1" fill="#b02a0a"/><rect x="99" y="174" width="1" height="1" fill="#a03a0a"/><rect x="113" y="166" width="1" height="1" fill="#b02a0a"/><rect x="110" y="182" width="1" height="1" fill="#b02a0a"/><rect x="104" y="149" width="1" height="1" fill="#a03a0a"/><rect x="116" y="152" width="1" height="1" fill="#a03a0a"/><rect x="93" y="152" width="1" height="1" fill="#b02a0a"/><rect x="99" y="140" width="1" height="1" fill="#7a7a10"/><rect x="111" y="157" width="1" height="1" fill="#b02a0a"/><rect x="103" y="140" width="1" height="1" fill="#3a0a04"/><rect x="110" y="167" width="1" height="1" fill="#5a1004"/><rect x="106" y="190" width="1" height="1" fill="#5a1004"/><rect x="116" y="159" width="1" height="1" fill="#c04a10"/><rect x="110" y="158" width="1" height="1" fill="#a03a0a"/><rect x="105" y="158" width="1" height="1" fill="#3a0a04"/><rect x="119" y="185" width="1" height="1" fill="#5a1004"/><rect x="93" y="170" width="1" height="1" fill="#c04a10"/><rect x="115" y="176" width="1" height="1" fill="#a03a0a"/><rect x="119" y="172" width="1" height="1" fill="#b02a0a"/><rect x="120" y="179" width="1" height="1" fill="#5a1004"/><rect x="95" y="174" width="1" height="1" fill="#c04a10"/><rect x="115" y="161" width="1" height="1" fill="#5a1004"/><rect x="103" y="189" width="1" height="1" fill="#b02a0a"/><rect x="108" y="172" width="1" height="1" fill="#3a0a04"/><rect x="109" y="169" width="1" height="1" fill="#3a0a04"/><rect x="101" y="171" width="1" height="1" fill="#5a1004"/><rect x="121" y="156" width="1" height="1" fill="#b02a0a"/><rect x="106" y="165" width="1" height="1" fill="#8a1a06"/><rect x="114" y="181" width="1" height="1" fill="#b02a0a"/><rect x="113" y="166" width="1" height="1" fill="#a03a0a"/><rect x="123" y="178" width="1" height="1" fill="#c04a10"/><rect x="122" y="163" width="1" height="1" fill="#5a1004"/><rect x="104" y="169" width="1" height="1" fill="#8a1a06"/><rect x="100" y="145" width="1" height="1" fill="#7a7a10"/><rect x="110" y="165" width="1" height="1" fill="#8a1a06"/><rect x="98" y="157" width="1" height="1" fill="#5a1004"/><rect x="99" y="181" width="1" height="1" fill="#3a0a04"/><rect x="99" y="187" width="1" height="1" fill="#7a7a10"/><rect x="122" y="183" width="1" height="1" fill="#b02a0a"/><rect x="103" y="157" width="1" height="1" fill="#7a7a10"/><rect x="119" y="144" width="1" height="1" fill="#a03a0a"/><rect x="115" y="158" width="1" height="1" fill="#c04a10"/><rect x="104" y="180" width="1" height="1" fill="#8a1a06"/><rect x="103" y="172" width="1" height="1" fill="#c04a10"/><rect x="106" y="190" width="1" height="1" fill="#5a1004"/><rect x="97" y="171" width="1" height="1" fill="#5a1004"/><rect x="119" y="177" width="1" height="1" fill="#a03a0a"/><rect x="93" y="145" width="1" height="1" fill="#3a0a04"/><rect x="110" y="150" width="1" height="1" fill="#c04a10"/><rect x="110" y="180" width="1" height="1" fill="#c04a10"/><rect x="94" y="148" width="1" height="1" fill="#8a1a06"/><rect x="101" y="169" width="1" height="1" fill="#c04a10"/><rect x="116" y="152" width="1" height="1" fill="#c04a10"/><rect x="101" y="152" width="1" height="1" fill="#3a0a04"/><rect x="96" y="171" width="1" height="1" fill="#7a7a10"/><rect x="96" y="145" width="1" height="1" fill="#7a7a10"/><rect x="102" y="179" width="1" height="1" fill="#b02a0a"/><rect x="116" y="158" width="1" height="1" fill="#b02a0a"/><rect x="116" y="153" width="1" height="1" fill="#3a0a04"/><rect x="107" y="170" width="1" height="1" fill="#c04a10"/><rect x="104" y="158" width="1" height="1" fill="#8a1a06"/><rect x="97" y="170" width="1" height="1" fill="#7a7a10"/><rect x="116" y="157" width="1" height="1" fill="#5a1004"/><rect x="100" y="183" width="1" height="1" fill="#b02a0a"/><rect x="117" y="158" width="1" height="1" fill="#8a1a06"/><rect x="106" y="187" width="1" height="1" fill="#5a1004"/><rect x="117" y="139" width="1" height="1" fill="#8a1a06"/><rect x="111" y="187" width="1" height="1" fill="#5a1004"/><rect x="120" y="160" width="1" height="1" fill="#3a0a04"/><rect x="99" y="141" width="1" height="1" fill="#3a0a04"/><rect x="109" y="165" width="1" height="1" fill="#7a7a10"/><rect x="93" y="150" width="1" height="1" fill="#a03a0a"/><rect x="106" y="140" width="1" height="1" fill="#5a1004"/><rect x="102" y="155" width="1" height="1" fill="#3a0a04"/><rect x="118" y="144" width="1" height="1" fill="#a03a0a"/><rect x="120" y="168" width="1" height="1" fill="#b02a0a"/><rect x="96" y="143" width="1" height="1" fill="#7a7a10"/><rect x="100" y="162" width="1" height="1" fill="#7a7a10"/><rect x="115" y="175" width="1" height="1" fill="#3a0a04"/><rect x="121" y="167" width="1" height="1" fill="#5a1004"/><rect x="106" y="168" width="1" height="1" fill="#3a0a04"/><rect x="119" y="183" width="1" height="1" fill="#a03a0a"/><rect x="103" y="148" width="1" height="1" fill="#b02a0a"/><rect x="99" y="166" width="1" height="1" fill="#8a1a06"/><rect x="101" y="154" width="1" height="1" fill="#c04a10"/><rect x="114" y="154" width="1" height="1" fill="#3a0a04"/><rect x="109" y="160" width="1" height="1" fill="#b02a0a"/><rect x="103" y="151" width="1" height="1" fill="#3a0a04"/><rect x="119" y="183" width="1" height="1" fill="#c04a10"/><rect x="103" y="145" width="1" height="1" fill="#a03a0a"/><rect x="110" y="157" width="1" height="1" fill="#3a0a04"/><rect x="114" y="175" width="1" height="1" fill="#a03a0a"/><rect x="105" y="180" width="1" height="1" fill="#a03a0a"/><rect x="108" y="175" width="1" height="1" fill="#5a1004"/><rect x="95" y="154" width="1" height="1" fill="#8a1a06"/><rect x="95" y="187" width="1" height="1" fill="#7a7a10"/><rect x="103" y="152" width="1" height="1" fill="#7a7a10"/><rect x="107" y="148" width="1" height="1" fill="#a03a0a"/><rect x="119" y="169" width="1" height="1" fill="#3a0a04"/><rect x="106" y="176" width="1" height="1" fill="#a03a0a"/><rect x="121" y="141" width="1" height="1" fill="#3a0a04"/><rect x="120" y="144" width="1" height="1" fill="#a03a0a"/><rect x="121" y="142" width="1" height="1" fill="#8a1a06"/><rect x="109" y="139" width="1" height="1" fill="#5a1004"/><rect x="111" y="180" width="1" height="1" fill="#3a0a04"/><rect x="100" y="175" width="1" height="1" fill="#5a1004"/><rect x="102" y="149" width="1" height="1" fill="#7a7a10"/><rect x="98" y="178" width="1" height="1" fill="#5a1004"/><rect x="100" y="143" width="1" height="1" fill="#b02a0a"/><rect x="99" y="143" width="1" height="1" fill="#b02a0a"/><rect x="106" y="172" width="1" height="1" fill="#c04a10"/><rect x="116" y="161" width="1" height="1" fill="#3a0a04"/><rect x="98" y="141" width="1" height="1" fill="#5a1004"/><rect x="97" y="146" width="1" height="1" fill="#3a0a04"/><rect x="102" y="150" width="1" height="1" fill="#8a1a06"/><rect x="119" y="175" width="1" height="1" fill="#5a1004"/><rect x="98" y="185" width="1" height="1" fill="#c04a10"/><rect x="111" y="149" width="1" height="1" fill="#7a7a10"/><rect x="114" y="150" width="1" height="1" fill="#b02a0a"/><rect x="103" y="146" width="1" height="1" fill="#c04a10"/><rect x="100" y="166" width="1" height="1" fill="#b02a0a"/><rect x="99" y="146" width="1" height="1" fill="#a03a0a"/><rect x="107" y="173" width="1" height="1" fill="#b02a0a"/><rect x="94" y="156" width="1" height="1" fill="#5a1004"/><rect x="123" y="190" width="1" height="1" fill="#8a1a06"/><rect x="110" y="153" width="1" height="1" fill="#c04a10"/><rect x="94" y="179" width="1" height="1" fill="#b02a0a"/><rect x="99" y="153" width="1" height="1" fill="#c04a10"/><rect x="112" y="166" width="1" height="1" fill="#b02a0a"/><rect x="99" y="162" width="1" height="1" fill="#7a7a10"/><rect x="122" y="182" width="1" height="1" fill="#a03a0a"/><rect x="112" y="154" width="1" height="1" fill="#8a1a06"/><rect x="112" y="188" width="1" height="1" fill="#c04a10"/><rect x="99" y="146" width="1" height="1" fill="#c04a10"/><rect x="95" y="155" width="1" height="1" fill="#3a0a04"/><rect x="108" y="155" width="1" height="1" fill="#c04a10"/><rect x="99" y="179" width="1" height="1" fill="#c04a10"/><rect x="119" y="176" width="1" height="1" fill="#3a0a04"/><rect x="96" y="167" width="1" height="1" fill="#7a7a10"/><rect x="98" y="158" width="1" height="1" fill="#b02a0a"/><rect x="94" y="165" width="1" height="1" fill="#b02a0a"/><rect x="106" y="174" width="1" height="1" fill="#3a0a04"/><rect x="111" y="156" width="1" height="1" fill="#c04a10"/><rect x="116" y="176" width="1" height="1" fill="#c04a10"/><rect x="98" y="187" width="1" height="1" fill="#c04a10"/><rect x="93" y="172" width="1" height="1" fill="#7a7a10"/><rect x="108" y="146" width="1" height="1" fill="#b02a0a"/><rect x="96" y="150" width="1" height="1" fill="#a03a0a"/><rect x="109" y="166" width="1" height="1" fill="#b02a0a"/><rect x="103" y="151" width="1" height="1" fill="#8a1a06"/><rect x="110" y="164" width="1" height="1" fill="#c04a10"/><rect x="123" y="153" width="1" height="1" fill="#8a1a06"/><rect x="100" y="145" width="1" height="1" fill="#a03a0a"/><rect x="116" y="166" width="1" height="1" fill="#a03a0a"/><rect x="121" y="139" width="1" height="1" fill="#b02a0a"/><rect x="109" y="179" width="1" height="1" fill="#8a1a06"/><rect x="100" y="177" width="1" height="1" fill="#b02a0a"/><rect x="117" y="146" width="1" height="1" fill="#c04a10"/><rect x="125" y="160" width="1" height="1" fill="#8a1a06"/><rect x="110" y="153" width="1" height="1" fill="#b02a0a"/><rect x="96" y="168" width="1" height="1" fill="#a03a0a"/><rect x="101" y="178" width="1" height="1" fill="#8a1a06"/><rect x="116" y="141" width="1" height="1" fill="#a03a0a"/><path d="M116.0 138.0 C119.8 140.5 123.7 148.7 125.0 155.0 C126.3 161.3 125.5 170.2 124.0 176.0 C122.5 181.8 119.2 188.0 116.0 190.0 C112.8 192.0 108.3 191.2 105.0 188.0 C101.7 184.8 98.0 177.2 96.0 171.0 C94.0 164.8 92.0 156.2 93.0 151.0 C94.0 145.8 98.2 142.2 102.0 140.0 C105.8 137.8 112.2 135.5 116.0 138.0 Z" fill="none" stroke="#9a8a10" stroke-width="2" opacity="0.35"/></g><g filter="url(#bl1)"><path d="M31.0 -4.0 C33.5 0.8 42.8 16.8 46.0 25.0 C49.2 33.2 50.3 38.3 50.0 45.0 C49.7 51.7 47.2 58.8 44.0 65.0 C40.8 71.2 36.0 77.0 31.0 82.0 C26.0 87.0 19.8 91.7 14.0 95.0 C8.2 98.3 -1.0 100.8 -4.0 102.0" fill="none" stroke="#228a2a" stroke-width="1.1"/><path d="M79.0 -4.0 C76.8 -0.3 68.7 11.7 66.0 18.0 C63.3 24.3 63.0 28.3 63.0 34.0 C63.0 39.7 63.8 46.5 66.0 52.0 C68.2 57.5 71.5 63.0 76.0 67.0 C80.5 71.0 87.2 74.3 93.0 76.0 C98.8 77.7 104.3 78.2 111.0 77.0 C117.7 75.8 125.3 73.2 133.0 69.0 C140.7 64.8 150.7 57.2 157.0 52.0 C163.3 46.8 168.3 43.7 171.0 38.0 C173.7 32.3 173.5 25.0 173.0 18.0 C172.5 11.0 168.8 -0.3 168.0 -4.0" fill="none" stroke="#228a2a" stroke-width="1.1"/><path d="M177.0 46.0 C184.3 45.5 194.2 45.7 201.0 49.0 C207.8 52.3 214.0 58.8 218.0 66.0 C222.0 73.2 224.3 82.2 225.0 92.0 C225.7 101.8 225.5 115.8 222.0 125.0 C218.5 134.2 211.5 142.0 204.0 147.0 C196.5 152.0 184.8 155.3 177.0 155.0 C169.2 154.7 163.3 149.8 157.0 145.0 C150.7 140.2 144.0 133.2 139.0 126.0 C134.0 118.8 128.0 110.3 127.0 102.0 C126.0 93.7 128.0 84.3 133.0 76.0 C138.0 67.7 149.7 57.0 157.0 52.0 C164.3 47.0 169.7 46.5 177.0 46.0 Z" fill="none" stroke="#228a2a" stroke-width="1.1"/><path d="M142.0 128.0 C148.7 133.5 153.5 145.7 156.0 153.0 C158.5 160.3 158.5 164.2 157.0 172.0 C155.5 179.8 151.3 193.3 147.0 200.0 C142.7 206.7 137.0 209.0 131.0 212.0 C125.0 215.0 117.5 218.0 111.0 218.0 C104.5 218.0 97.2 215.5 92.0 212.0 C86.8 208.5 84.3 203.7 80.0 197.0 C75.7 190.3 68.8 180.3 66.0 172.0 C63.2 163.7 60.7 154.0 63.0 147.0 C65.3 140.0 71.2 134.5 80.0 130.0 C88.8 125.5 105.7 120.3 116.0 120.0 C126.3 119.7 135.3 122.5 142.0 128.0 Z" fill="none" stroke="#228a2a" stroke-width="1.1"/><path d="M-4.0 135.0 C1.8 135.7 21.7 135.7 31.0 139.0 C40.3 142.3 46.0 149.3 52.0 155.0 C58.0 160.7 62.0 165.0 67.0 173.0 C72.0 181.0 79.0 193.5 82.0 203.0 C85.0 212.5 84.5 225.5 85.0 230.0" fill="none" stroke="#228a2a" stroke-width="1.1"/><path d="M173.0 -4.0 C175.0 -1.5 179.8 7.7 185.0 11.0 C190.2 14.3 196.3 16.3 204.0 16.0 C211.7 15.7 226.5 10.2 231.0 9.0" fill="none" stroke="#228a2a" stroke-width="1.1"/><path d="M231.0 123.0 C227.5 126.5 214.3 137.8 210.0 144.0 C205.7 150.2 205.3 153.7 205.0 160.0 C204.7 166.3 206.0 174.7 208.0 182.0 C210.0 189.3 213.5 196.0 217.0 204.0 C220.5 212.0 227.0 225.7 229.0 230.0" fill="none" stroke="#228a2a" stroke-width="1.1"/><path d="M20.0 86.0 C28.5 83.5 43.0 81.8 51.0 83.0 C59.0 84.2 64.2 89.2 68.0 93.0 C71.8 96.8 75.0 101.8 74.0 106.0 C73.0 110.2 68.2 115.0 62.0 118.0 C55.8 121.0 45.3 123.3 37.0 124.0 C28.7 124.7 18.5 123.3 12.0 122.0 C5.5 120.7 0.0 120.0 -2.0 116.0 C-4.0 112.0 -3.7 103.0 0.0 98.0 C3.7 93.0 11.5 88.5 20.0 86.0 Z" fill="none" stroke="#2a9a8a" stroke-width="1.5"/><path d="M114.0 82.0 C119.3 84.8 123.8 90.0 125.0 95.0 C126.2 100.0 125.0 108.2 121.0 112.0 C117.0 115.8 107.7 117.5 101.0 118.0 C94.3 118.5 86.0 118.0 81.0 115.0 C76.0 112.0 71.8 105.0 71.0 100.0 C70.2 95.0 72.3 88.7 76.0 85.0 C79.7 81.3 86.7 78.5 93.0 78.0 C99.3 77.5 108.7 79.2 114.0 82.0 Z" fill="none" stroke="#3cb83a" stroke-width="2"/><path d="M198.0 168.0 C201.7 172.3 203.8 181.5 204.0 188.0 C204.2 194.5 202.3 202.3 199.0 207.0 C195.7 211.7 189.5 215.5 184.0 216.0 C178.5 216.5 170.0 214.7 166.0 210.0 C162.0 205.3 160.0 195.0 160.0 188.0 C160.0 181.0 162.3 172.3 166.0 168.0 C169.7 163.7 176.7 162.0 182.0 162.0 C187.3 162.0 194.3 163.7 198.0 168.0 Z" fill="none" stroke="#3cb83a" stroke-width="2"/><path d="M206.0 14.0 C211.7 12.0 223.2 -1.3 227.0 10.0 C230.8 21.3 231.7 70.8 229.0 82.0 C226.3 93.2 216.2 81.0 211.0 77.0 C205.8 73.0 201.2 64.5 198.0 58.0 C194.8 51.5 192.8 44.0 192.0 38.0 C191.2 32.0 190.7 26.0 193.0 22.0 C195.3 18.0 200.3 16.0 206.0 14.0 Z" fill="none" stroke="#2a9a3a" stroke-width="1.0"/></g><g filter="url(#bl1)"><path d="M94.0 93.0 C97.7 91.0 104.3 89.5 108.0 90.0 C111.7 90.5 116.3 94.0 116.0 96.0 C115.7 98.0 109.3 100.3 106.0 102.0 C102.7 103.7 99.3 106.0 96.0 106.0 C92.7 106.0 86.3 104.2 86.0 102.0 C85.7 99.8 90.3 95.0 94.0 93.0 Z" fill="#2a70c8" opacity="0.85"/><path d="M186.0 177.0 C188.3 178.0 190.3 182.5 190.0 186.0 C189.7 189.5 186.3 196.7 184.0 198.0 C181.7 199.3 177.3 197.0 176.0 194.0 C174.7 191.0 174.3 182.8 176.0 180.0 C177.7 177.2 183.7 176.0 186.0 177.0 Z" fill="#2a80d0" opacity="0.85"/><path d="M8.0 110.0 C9.7 111.0 13.7 114.5 18.0 116.0 C22.3 117.5 31.3 118.5 34.0 119.0" fill="none" stroke="#2a50d8" stroke-width="3"/><path d="M14.0 112.0 C17.7 112.2 32.3 112.8 36.0 113.0" fill="none" stroke="#2a50d8" stroke-width="2"/><path d="M220.0 35.0 C220.7 37.5 223.7 44.5 224.0 50.0 C224.3 55.5 222.3 65.0 222.0 68.0" fill="none" stroke="#2a70c8" stroke-width="5" opacity="0.7"/></g><g filter="url(#bl1)"><ellipse cx="139.8" cy="48.4" rx="2.5" ry="0.9" transform="rotate(25 139.8 48.4)" fill="#1d7a22"/><ellipse cx="145.9" cy="45.7" rx="2.5" ry="0.9" transform="rotate(177 145.9 45.7)" fill="#1d7a22"/><ellipse cx="128.3" cy="56.6" rx="2.5" ry="0.9" transform="rotate(21 128.3 56.6)" fill="#1d7a22"/><ellipse cx="127.2" cy="20.9" rx="2.5" ry="0.9" transform="rotate(46 127.2 20.9)" fill="#1d7a22"/><ellipse cx="152.0" cy="41.8" rx="2.5" ry="0.9" transform="rotate(105 152.0 41.8)" fill="#1d7a22"/><ellipse cx="121.7" cy="25.0" rx="2.5" ry="0.9" transform="rotate(62 121.7 25.0)" fill="#1d7a22"/><ellipse cx="133.8" cy="56.9" rx="2.5" ry="0.9" transform="rotate(42 133.8 56.9)" fill="#1d7a22"/><ellipse cx="131.8" cy="55.6" rx="2.5" ry="0.9" transform="rotate(35 131.8 55.6)" fill="#1d7a22"/><ellipse cx="127.0" cy="65.0" rx="2.5" ry="0.9" transform="rotate(175 127.0 65.0)" fill="#1d7a22"/><ellipse cx="160.5" cy="132.6" rx="2.5" ry="0.9" transform="rotate(0 160.5 132.6)" fill="#1d7a22"/><ellipse cx="183.8" cy="71.9" rx="2.5" ry="0.9" transform="rotate(127 183.8 71.9)" fill="#1d7a22"/><ellipse cx="153.3" cy="95.8" rx="2.5" ry="0.9" transform="rotate(17 153.3 95.8)" fill="#1d7a22"/><ellipse cx="177.3" cy="68.3" rx="2.5" ry="0.9" transform="rotate(50 177.3 68.3)" fill="#1d7a22"/><ellipse cx="190.2" cy="83.8" rx="2.5" ry="0.9" transform="rotate(93 190.2 83.8)" fill="#1d7a22"/><ellipse cx="181.7" cy="78.0" rx="2.5" ry="0.9" transform="rotate(89 181.7 78.0)" fill="#1d7a22"/><ellipse cx="149.9" cy="82.9" rx="2.5" ry="0.9" transform="rotate(126 149.9 82.9)" fill="#1d7a22"/><ellipse cx="162.8" cy="70.3" rx="2.5" ry="0.9" transform="rotate(34 162.8 70.3)" fill="#1d7a22"/><ellipse cx="175.3" cy="132.6" rx="2.5" ry="0.9" transform="rotate(77 175.3 132.6)" fill="#1d7a22"/><ellipse cx="134.1" cy="150.9" rx="2.5" ry="0.9" transform="rotate(174 134.1 150.9)" fill="#1d7a22"/><ellipse cx="91.1" cy="154.2" rx="2.5" ry="0.9" transform="rotate(163 91.1 154.2)" fill="#1d7a22"/><ellipse cx="117.4" cy="136.5" rx="2.5" ry="0.9" transform="rotate(76 117.4 136.5)" fill="#1d7a22"/><ellipse cx="110.7" cy="140.0" rx="2.5" ry="0.9" transform="rotate(167 110.7 140.0)" fill="#1d7a22"/><ellipse cx="129.0" cy="161.1" rx="2.5" ry="0.9" transform="rotate(64 129.0 161.1)" fill="#1d7a22"/><ellipse cx="111.1" cy="136.1" rx="2.5" ry="0.9" transform="rotate(61 111.1 136.1)" fill="#1d7a22"/><ellipse cx="118.7" cy="192.6" rx="2.5" ry="0.9" transform="rotate(60 118.7 192.6)" fill="#1d7a22"/><ellipse cx="129.4" cy="148.7" rx="2.5" ry="0.9" transform="rotate(175 129.4 148.7)" fill="#1d7a22"/><ellipse cx="125.0" cy="155.4" rx="2.5" ry="0.9" transform="rotate(169 125.0 155.4)" fill="#1d7a22"/><ellipse cx="24.5" cy="26.0" rx="2.5" ry="0.9" transform="rotate(174 24.5 26.0)" fill="#1d7a22"/><ellipse cx="22.9" cy="31.1" rx="2.5" ry="0.9" transform="rotate(97 22.9 31.1)" fill="#1d7a22"/><ellipse cx="12.1" cy="58.9" rx="2.5" ry="0.9" transform="rotate(167 12.1 58.9)" fill="#1d7a22"/><ellipse cx="13.3" cy="28.4" rx="2.5" ry="0.9" transform="rotate(169 13.3 28.4)" fill="#1d7a22"/><ellipse cx="7.2" cy="35.9" rx="2.5" ry="0.9" transform="rotate(78 7.2 35.9)" fill="#1d7a22"/><ellipse cx="34.9" cy="50.6" rx="2.5" ry="0.9" transform="rotate(4 34.9 50.6)" fill="#1d7a22"/><ellipse cx="37.2" cy="42.3" rx="2.5" ry="0.9" transform="rotate(121 37.2 42.3)" fill="#1d7a22"/><ellipse cx="8.1" cy="60.9" rx="2.5" ry="0.9" transform="rotate(117 8.1 60.9)" fill="#1d7a22"/><ellipse cx="29.7" cy="67.1" rx="2.5" ry="0.9" transform="rotate(21 29.7 67.1)" fill="#1d7a22"/></g><text x="34" y="195.5" font-family="Liberation Sans" font-weight="bold" font-size="15" fill="#fff">80 µm</text><rect x="19" y="202.5" width="71" height="2.3" fill="#fff"/></svg>
<div style="left:300px;top:46px;width:450px;height:1px;background:#7a828a"></div>
<div style="left:534.2px;top:175.0px;width:0;height:0;border-top:3.1px solid transparent;border-bottom:3.1px solid transparent;border-left:3.1px solid #000"></div>
<div style="left:534.2px;top:186.05px;width:0;height:0;border-top:3.1px solid transparent;border-bottom:3.1px solid transparent;border-left:3.1px solid #000"></div>
<div style="left:534.2px;top:197.1px;width:0;height:0;border-top:3.1px solid transparent;border-bottom:3.1px solid transparent;border-left:3.1px solid #000"></div>
<div style="left:534.2px;top:208.15px;width:0;height:0;border-top:3.1px solid transparent;border-bottom:3.1px solid transparent;border-left:3.1px solid #000"></div>
<div style="left:534.2px;top:219.20000000000002px;width:0;height:0;border-top:3.1px solid transparent;border-bottom:3.1px solid transparent;border-left:3.1px solid #000"></div>
<div style="left:534.2px;top:230.25px;width:0;height:0;border-top:3.1px solid transparent;border-bottom:3.1px solid transparent;border-left:3.1px solid #000"></div>
<div style="left:534.2px;top:241.3px;width:0;height:0;border-top:3.1px solid transparent;border-bottom:3.1px solid transparent;border-left:3.1px solid #000"></div>
<div style="left:534.2px;top:252.35px;width:0;height:0;border-top:3.1px solid transparent;border-bottom:3.1px solid transparent;border-left:3.1px solid #000"></div>
<div style="left:534.2px;top:263.4px;width:0;height:0;border-top:3.1px solid transparent;border-bottom:3.1px solid transparent;border-left:3.1px solid #000"></div>
<div style="left:534.2px;top:274.45px;width:0;height:0;border-top:3.1px solid transparent;border-bottom:3.1px solid transparent;border-left:3.1px solid #000"></div>
<div style="left:534.2px;top:285.5px;width:0;height:0;border-top:3.1px solid transparent;border-bottom:3.1px solid transparent;border-left:3.1px solid #000"></div>
<svg style="left:539px;top:51.5px" width="12" height="12"><circle cx="6" cy="6" r="4.5" fill="#fff" stroke="#9ba39a" stroke-width="1"/></svg>
<div style="left:554px;top:53.03px;font-size:10px;line-height:10px;white-space:nowrap;letter-spacing:-0.14px;color:#1e1e2e">Gray</div>
<svg style="left:587.5px;top:51.5px" width="12" height="12"><circle cx="6" cy="6" r="4.5" fill="#24a33f" stroke="#6d7a6c" stroke-width="1"/><circle cx="6" cy="6" r="2.2" fill="#000"/></svg>
<div style="left:602px;top:53.03px;font-size:10px;line-height:10px;white-space:nowrap;letter-spacing:-0.14px;color:#1e1e2e">Rainbow</div>
<svg style="left:653px;top:51.5px" width="12" height="12"><circle cx="6" cy="6" r="4.5" fill="#fff" stroke="#9ba39a" stroke-width="1"/></svg>
<div style="left:668px;top:53.03px;font-size:10px;line-height:10px;white-space:nowrap;letter-spacing:-0.14px;color:#1e1e2e">RGB</div>
<div style="left:539px;top:69px;width:210px;height:1px;background:#9aa198"></div>
<div style="left:539px;top:69px;width:1px;height:328px;background:#8e958c"></div>
<div style="left:540px;top:69px;width:1px;height:328px;background:#fbfdfb"></div>
<div style="left:531px;top:70px;width:1px;height:327px;background:#a9c4a6"></div>
<div style="left:300px;top:396px;width:232px;height:1px;background:#a9c4a6"></div>
<div style="left:541px;top:70px;width:142px;height:16px;background:#fff;border:1px solid #8e928d;border-top-color:#6f736e;"></div>
<div style="left:545px;top:74.13px;font-size:10px;line-height:10px;white-space:nowrap;letter-spacing:-0.14px;color:#1e1e2e">Events[Cnts]</div>
<div style="left:669px;top:72px;width:13px;height:12px;border:1px solid #a5aba3;background:linear-gradient(#eef1ec,#d5dad3)"></div>
<div style="left:672.5px;top:77.8px;width:0;height:0;border-left:3.5px solid transparent;border-right:3.5px solid transparent;border-top:3.5px solid #000"></div>
<div style="left:687px;top:74px;width:9px;height:9px;border:1px solid #5f6b5e;background:#24a33f"></div>
<svg style="left:687px;top:74px" width="11" height="11"><path d="M2.2 5.2 L4.2 7.3 L7.8 2.6" stroke="#000" stroke-width="1.8" fill="none"/></svg>
<div style="left:701px;top:74.53px;font-size:10px;line-height:10px;white-space:nowrap;letter-spacing:-0.14px;color:#1e1e2e">Active</div>
<svg style="left:541px;top:94px;" width="204" height="22" viewBox="0 0 204 22"><defs><linearGradient id="gg" x1="0" x2="1"><stop offset="0" stop-color="#000"/><stop offset="1" stop-color="#fff"/></linearGradient></defs><rect x="0" y="0" width="204" height="22" fill="#fff"/><rect x="1" y="1" width="34" height="20" fill="#000"/><path d="M35 1 L35 8 C 40 16, 50 17, 80 18 L 150 21 L169 21 L169 1 Z" fill="url(#gg)"/><rect x="0.5" y="0.5" width="203" height="21" fill="none" stroke="#222" stroke-width="1"/><path d="M35 1 L35 21 M169.5 1 L169.5 21" stroke="#333" stroke-width="1"/></svg>
<div style="left:542px;top:120px;width:8px;height:8px;border:1px solid #9ba39a;background:#fff"></div>
<div style="left:555px;top:121.23px;font-size:10px;line-height:10px;white-space:nowrap;letter-spacing:-0.14px;color:#1e1e2e">Min</div>
<div style="left:577px;top:116px;width:43px;height:17px;background:#fff;border:1px solid #8e928d;border-top-color:#6f736e;"></div>
<div style="left:319px;top:120.63px;width:300px;font-size:10px;line-height:10px;text-align:right;white-space:nowrap;letter-spacing:-0.14px;color:#1e1e2e">1</div>
<div style="left:622px;top:116px;width:13px;height:7.5px;border:1px solid #9aa098;background:linear-gradient(#eef1ec,#d9ddd7)"></div>
<div style="left:622px;top:125.5px;width:13px;height:7.5px;border:1px solid #9aa098;background:linear-gradient(#eef1ec,#d9ddd7)"></div>
<div style="left:626.0px;top:119.0px;width:0;height:0;border-left:3.5px solid transparent;border-right:3.5px solid transparent;border-bottom:3.5px solid #000"></div>
<div style="left:626.0px;top:129.0px;width:0;height:0;border-left:3.5px solid transparent;border-right:3.5px solid transparent;border-top:3.5px solid #000"></div>
<div style="left:644px;top:120px;width:8px;height:8px;border:1px solid #9ba39a;background:#fff"></div>
<div style="left:657px;top:121.23px;font-size:10px;line-height:10px;white-space:nowrap;letter-spacing:-0.14px;color:#1e1e2e">Max</div>
<div style="left:685px;top:116px;width:43px;height:17px;background:#fff;border:1px solid #8e928d;border-top-color:#6f736e;"></div>
<div style="left:427px;top:120.63px;width:300px;font-size:10px;line-height:10px;text-align:right;white-space:nowrap;letter-spacing:-0.14px;color:#1e1e2e">800</div>
<div style="left:730px;top:116px;width:13px;height:7.5px;border:1px solid #9aa098;background:linear-gradient(#eef1ec,#d9ddd7)"></div>
<div style="left:730px;top:125.5px;width:13px;height:7.5px;border:1px solid #9aa098;background:linear-gradient(#eef1ec,#d9ddd7)"></div>
<div style="left:734.0px;top:119.0px;width:0;height:0;border-left:3.5px solid transparent;border-right:3.5px solid transparent;border-bottom:3.5px solid #000"></div>
<div style="left:734.0px;top:129.0px;width:0;height:0;border-left:3.5px solid transparent;border-right:3.5px solid transparent;border-top:3.5px solid #000"></div>
<div style="left:539px;top:137px;width:210px;height:1px;background:#c2c9c0"></div>
<div style="left:541px;top:139px;width:142px;height:16px;background:#fff;border:1px solid #8e928d;border-top-color:#6f736e;"></div>
<div style="left:545px;top:143.13px;font-size:10px;line-height:10px;white-space:nowrap;letter-spacing:-0.14px;color:#1e1e2e">Fast Lifetime[ns]</div>
<div style="left:669px;top:141px;width:13px;height:12px;border:1px solid #a5aba3;background:linear-gradient(#eef1ec,#d5dad3)"></div>
<div style="left:672.5px;top:146.8px;width:0;height:0;border-left:3.5px solid transparent;border-right:3.5px solid transparent;border-top:3.5px solid #000"></div>
<div style="left:687px;top:143px;width:9px;height:9px;border:1px solid #5f6b5e;background:#24a33f"></div>
<svg style="left:687px;top:143px" width="11" height="11"><path d="M2.2 5.2 L4.2 7.3 L7.8 2.6" stroke="#000" stroke-width="1.8" fill="none"/></svg>
<div style="left:701px;top:143.53px;font-size:10px;line-height:10px;white-space:nowrap;letter-spacing:-0.14px;color:#1e1e2e">Active</div>
<svg style="left:541px;top:163px;" width="204" height="21" viewBox="0 0 204 21"><defs><linearGradient id="rg" x1="0" x2="1"><stop offset="0" stop-color="#3a8ee8"/><stop offset="0.25" stop-color="#00e5ff"/><stop offset="0.45" stop-color="#00e000"/><stop offset="0.65" stop-color="#f0f000"/><stop offset="0.85" stop-color="#ff7000"/><stop offset="1" stop-color="#ff0000"/></linearGradient></defs><rect x="0" y="0" width="204" height="21" fill="#fff"/><path d="M1 1 L34 1 L34 13 L1 20 Z" fill="#3a8ee8"/><path d="M34 1 L169 1 L169 10 L120 4 C 100 2, 90 1, 60 6 L34 13 Z" fill="url(#rg)"/><path d="M169 1 L203 1 L203 20 C 200 15, 190 15, 169 10 Z" fill="#f00000"/><rect x="0.5" y="0.5" width="203" height="20" fill="none" stroke="#222" stroke-width="1"/><path d="M34.5 1 L34.5 20 M169.5 1 L169.5 20" stroke="#333" stroke-width="1"/></svg>
<div style="left:542px;top:189px;width:8px;height:8px;border:1px solid #5f6b5e;background:#24a33f"></div>
<svg style="left:542px;top:189px" width="10" height="10"><path d="M2.2 5.2 L4.2 7.3 L7.8 2.6" stroke="#000" stroke-width="1.8" fill="none"/></svg>
<div style="left:555px;top:190.03px;font-size:10px;line-height:10px;white-space:nowrap;letter-spacing:-0.14px;color:#1e1e2e">Min</div>
<div style="left:577px;top:185px;width:43px;height:17px;background:#fff;border:1px solid #8e928d;border-top-color:#6f736e;"></div>
<div style="left:319px;top:189.63px;width:300px;font-size:10px;line-height:10px;text-align:right;white-space:nowrap;letter-spacing:-0.14px;color:#1e1e2e">1,7</div>
<div style="left:622px;top:185px;width:13px;height:7.5px;border:1px solid #9aa098;background:linear-gradient(#eef1ec,#d9ddd7)"></div>
<div style="left:622px;top:194.5px;width:13px;height:7.5px;border:1px solid #9aa098;background:linear-gradient(#eef1ec,#d9ddd7)"></div>
<div style="left:626.0px;top:188.0px;width:0;height:0;border-left:3.5px solid transparent;border-right:3.5px solid transparent;border-bottom:3.5px solid #000"></div>
<div style="left:626.0px;top:198.0px;width:0;height:0;border-left:3.5px solid transparent;border-right:3.5px solid transparent;border-top:3.5px solid #000"></div>
<div style="left:644px;top:189px;width:8px;height:8px;border:1px solid #5f6b5e;background:#24a33f"></div>
<svg style="left:644px;top:189px" width="10" height="10"><path d="M2.2 5.2 L4.2 7.3 L7.8 2.6" stroke="#000" stroke-width="1.8" fill="none"/></svg>
<div style="left:657px;top:190.03px;font-size:10px;line-height:10px;white-space:nowrap;letter-spacing:-0.14px;color:#1e1e2e">Max</div>
<div style="left:685px;top:185px;width:43px;height:17px;background:#fff;border:1px solid #8e928d;border-top-color:#6f736e;"></div>
<div style="left:427px;top:189.63px;width:300px;font-size:10px;line-height:10px;text-align:right;white-space:nowrap;letter-spacing:-0.14px;color:#1e1e2e">2,9</div>
<div style="left:730px;top:185px;width:13px;height:7.5px;border:1px solid #9aa098;background:linear-gradient(#eef1ec,#d9ddd7)"></div>
<div style="left:730px;top:194.5px;width:13px;height:7.5px;border:1px solid #9aa098;background:linear-gradient(#eef1ec,#d9ddd7)"></div>
<div style="left:734.0px;top:188.0px;width:0;height:0;border-left:3.5px solid transparent;border-right:3.5px solid transparent;border-bottom:3.5px solid #000"></div>
<div style="left:734.0px;top:198.0px;width:0;height:0;border-left:3.5px solid transparent;border-right:3.5px solid transparent;border-top:3.5px solid #000"></div>
<div style="left:542px;top:214px;width:8px;height:8px;border:1px solid #9ba39a;background:#fff"></div>
<div style="left:556px;top:215.03px;font-size:10px;line-height:10px;white-space:nowrap;letter-spacing:-0.14px;color:#1e1e2e">Optimized Rainbow</div>
<div style="left:539px;top:230px;width:207px;height:1px;background:#b9c6b6"></div>
<div style="left:542px;top:235px;width:8px;height:8px;border:1px solid #9ba39a;background:#fff"></div>
<div style="left:560px;top:236.03px;font-size:10px;line-height:10px;white-space:nowrap;letter-spacing:-0.14px;color:#1e1e2e">Smoothing</div>
<div style="left:539px;top:253px;width:207px;height:1px;background:#b9c6b6"></div>
<svg style="left:756px;top:42px;" width="299" height="353" viewBox="0 0 299 353"><rect x="0" y="0" width="299" height="353" fill="#fff"/><clipPath id="hyclip"><rect x="0" y="0" width="299" height="317"/></clipPath><line x1="64.2" y1="28" x2="64.2" y2="316" stroke="#e4e4e4" stroke-width="1"/><line x1="75.4" y1="28" x2="75.4" y2="316" stroke="#e4e4e4" stroke-width="1"/><line x1="86.5" y1="28" x2="86.5" y2="316" stroke="#e4e4e4" stroke-width="1"/><line x1="108.9" y1="28" x2="108.9" y2="316" stroke="#e4e4e4" stroke-width="1"/><line x1="120.0" y1="28" x2="120.0" y2="316" stroke="#e4e4e4" stroke-width="1"/><line x1="131.2" y1="28" x2="131.2" y2="316" stroke="#e4e4e4" stroke-width="1"/><line x1="153.6" y1="28" x2="153.6" y2="316" stroke="#e4e4e4" stroke-width="1"/><line x1="164.8" y1="28" x2="164.8" y2="316" stroke="#e4e4e4" stroke-width="1"/><line x1="175.9" y1="28" x2="175.9" y2="316" stroke="#e4e4e4" stroke-width="1"/><line x1="198.3" y1="28" x2="198.3" y2="316" stroke="#e4e4e4" stroke-width="1"/><line x1="209.5" y1="28" x2="209.5" y2="316" stroke="#e4e4e4" stroke-width="1"/><line x1="220.6" y1="28" x2="220.6" y2="316" stroke="#e4e4e4" stroke-width="1"/><line x1="243.0" y1="28" x2="243.0" y2="316" stroke="#e4e4e4" stroke-width="1"/><line x1="254.1" y1="28" x2="254.1" y2="316" stroke="#e4e4e4" stroke-width="1"/><line x1="265.3" y1="28" x2="265.3" y2="316" stroke="#e4e4e4" stroke-width="1"/><line x1="43" y1="309.9" x2="285" y2="309.9" stroke="#e4e4e4" stroke-width="1"/><line x1="43" y1="309.9" x2="46" y2="309.9" stroke="#000" stroke-width="1"/><line x1="43" y1="305.3" x2="285" y2="305.3" stroke="#e4e4e4" stroke-width="1"/><line x1="43" y1="305.3" x2="46" y2="305.3" stroke="#000" stroke-width="1"/><line x1="43" y1="300.7" x2="285" y2="300.7" stroke="#e4e4e4" stroke-width="1"/><line x1="43" y1="300.7" x2="46" y2="300.7" stroke="#000" stroke-width="1"/><line x1="43" y1="291.4" x2="285" y2="291.4" stroke="#e4e4e4" stroke-width="1"/><line x1="43" y1="291.4" x2="46" y2="291.4" stroke="#000" stroke-width="1"/><line x1="43" y1="286.8" x2="285" y2="286.8" stroke="#e4e4e4" stroke-width="1"/><line x1="43" y1="286.8" x2="46" y2="286.8" stroke="#000" stroke-width="1"/><line x1="43" y1="282.2" x2="285" y2="282.2" stroke="#e4e4e4" stroke-width="1"/><line x1="43" y1="282.2" x2="46" y2="282.2" stroke="#000" stroke-width="1"/><line x1="43" y1="273.0" x2="285" y2="273.0" stroke="#e4e4e4" stroke-width="1"/><line x1="43" y1="273.0" x2="46" y2="273.0" stroke="#000" stroke-width="1"/><line x1="43" y1="268.4" x2="285" y2="268.4" stroke="#e4e4e4" stroke-width="1"/><line x1="43" y1="268.4" x2="46" y2="268.4" stroke="#000" stroke-width="1"/><line x1="43" y1="263.7" x2="285" y2="263.7" stroke="#e4e4e4" stroke-width="1"/><line x1="43" y1="263.7" x2="46" y2="263.7" stroke="#000" stroke-width="1"/><line x1="43" y1="254.5" x2="285" y2="254.5" stroke="#e4e4e4" stroke-width="1"/><line x1="43" y1="254.5" x2="46" y2="254.5" stroke="#000" stroke-width="1"/><line x1="43" y1="249.9" x2="285" y2="249.9" stroke="#e4e4e4" stroke-width="1"/><line x1="43" y1="249.9" x2="46" y2="249.9" stroke="#000" stroke-width="1"/><line x1="43" y1="245.3" x2="285" y2="245.3" stroke="#e4e4e4" stroke-width="1"/><line x1="43" y1="245.3" x2="46" y2="245.3" stroke="#000" stroke-width="1"/><line x1="43" y1="236.0" x2="285" y2="236.0" stroke="#e4e4e4" stroke-width="1"/><line x1="43" y1="236.0" x2="46" y2="236.0" stroke="#000" stroke-width="1"/><line x1="43" y1="231.4" x2="285" y2="231.4" stroke="#e4e4e4" stroke-width="1"/><line x1="43" y1="231.4" x2="46" y2="231.4" stroke="#000" stroke-width="1"/><line x1="43" y1="226.8" x2="285" y2="226.8" stroke="#e4e4e4" stroke-width="1"/><line x1="43" y1="226.8" x2="46" y2="226.8" stroke="#000" stroke-width="1"/><line x1="43" y1="217.6" x2="285" y2="217.6" stroke="#e4e4e4" stroke-width="1"/><line x1="43" y1="217.6" x2="46" y2="217.6" stroke="#000" stroke-width="1"/><line x1="43" y1="213.0" x2="285" y2="213.0" stroke="#e4e4e4" stroke-width="1"/><line x1="43" y1="213.0" x2="46" y2="213.0" stroke="#000" stroke-width="1"/><line x1="43" y1="208.4" x2="285" y2="208.4" stroke="#e4e4e4" stroke-width="1"/><line x1="43" y1="208.4" x2="46" y2="208.4" stroke="#000" stroke-width="1"/><line x1="43" y1="199.1" x2="285" y2="199.1" stroke="#e4e4e4" stroke-width="1"/><line x1="43" y1="199.1" x2="46" y2="199.1" stroke="#000" stroke-width="1"/><line x1="43" y1="194.5" x2="285" y2="194.5" stroke="#e4e4e4" stroke-width="1"/><line x1="43" y1="194.5" x2="46" y2="194.5" stroke="#000" stroke-width="1"/><line x1="43" y1="189.9" x2="285" y2="189.9" stroke="#e4e4e4" stroke-width="1"/><line x1="43" y1="189.9" x2="46" y2="189.9" stroke="#000" stroke-width="1"/><line x1="43" y1="180.7" x2="285" y2="180.7" stroke="#e4e4e4" stroke-width="1"/><line x1="43" y1="180.7" x2="46" y2="180.7" stroke="#000" stroke-width="1"/><line x1="43" y1="176.0" x2="285" y2="176.0" stroke="#e4e4e4" stroke-width="1"/><line x1="43" y1="176.0" x2="46" y2="176.0" stroke="#000" stroke-width="1"/><line x1="43" y1="171.4" x2="285" y2="171.4" stroke="#e4e4e4" stroke-width="1"/><line x1="43" y1="171.4" x2="46" y2="171.4" stroke="#000" stroke-width="1"/><line x1="43" y1="162.2" x2="285" y2="162.2" stroke="#e4e4e4" stroke-width="1"/><line x1="43" y1="162.2" x2="46" y2="162.2" stroke="#000" stroke-width="1"/><line x1="43" y1="157.6" x2="285" y2="157.6" stroke="#e4e4e4" stroke-width="1"/><line x1="43" y1="157.6" x2="46" y2="157.6" stroke="#000" stroke-width="1"/><line x1="43" y1="153.0" x2="285" y2="153.0" stroke="#e4e4e4" stroke-width="1"/><line x1="43" y1="153.0" x2="46" y2="153.0" stroke="#000" stroke-width="1"/><line x1="43" y1="143.7" x2="285" y2="143.7" stroke="#e4e4e4" stroke-width="1"/><line x1="43" y1="143.7" x2="46" y2="143.7" stroke="#000" stroke-width="1"/><line x1="43" y1="139.1" x2="285" y2="139.1" stroke="#e4e4e4" stroke-width="1"/><line x1="43" y1="139.1" x2="46" y2="139.1" stroke="#000" stroke-width="1"/><line x1="43" y1="134.5" x2="285" y2="134.5" stroke="#e4e4e4" stroke-width="1"/><line x1="43" y1="134.5" x2="46" y2="134.5" stroke="#000" stroke-width="1"/><line x1="43" y1="125.3" x2="285" y2="125.3" stroke="#e4e4e4" stroke-width="1"/><line x1="43" y1="125.3" x2="46" y2="125.3" stroke="#000" stroke-width="1"/><line x1="43" y1="120.7" x2="285" y2="120.7" stroke="#e4e4e4" stroke-width="1"/><line x1="43" y1="120.7" x2="46" y2="120.7" stroke="#000" stroke-width="1"/><line x1="43" y1="116.1" x2="285" y2="116.1" stroke="#e4e4e4" stroke-width="1"/><line x1="43" y1="116.1" x2="46" y2="116.1" stroke="#000" stroke-width="1"/><line x1="43" y1="106.8" x2="285" y2="106.8" stroke="#e4e4e4" stroke-width="1"/><line x1="43" y1="106.8" x2="46" y2="106.8" stroke="#000" stroke-width="1"/><line x1="43" y1="102.2" x2="285" y2="102.2" stroke="#e4e4e4" stroke-width="1"/><line x1="43" y1="102.2" x2="46" y2="102.2" stroke="#000" stroke-width="1"/><line x1="43" y1="97.6" x2="285" y2="97.6" stroke="#e4e4e4" stroke-width="1"/><line x1="43" y1="97.6" x2="46" y2="97.6" stroke="#000" stroke-width="1"/><line x1="43" y1="88.4" x2="285" y2="88.4" stroke="#e4e4e4" stroke-width="1"/><line x1="43" y1="88.4" x2="46" y2="88.4" stroke="#000" stroke-width="1"/><line x1="43" y1="83.8" x2="285" y2="83.8" stroke="#e4e4e4" stroke-width="1"/><line x1="43" y1="83.8" x2="46" y2="83.8" stroke="#000" stroke-width="1"/><line x1="43" y1="79.1" x2="285" y2="79.1" stroke="#e4e4e4" stroke-width="1"/><line x1="43" y1="79.1" x2="46" y2="79.1" stroke="#000" stroke-width="1"/><line x1="43" y1="69.9" x2="285" y2="69.9" stroke="#e4e4e4" stroke-width="1"/><line x1="43" y1="69.9" x2="46" y2="69.9" stroke="#000" stroke-width="1"/><line x1="43" y1="65.3" x2="285" y2="65.3" stroke="#e4e4e4" stroke-width="1"/><line x1="43" y1="65.3" x2="46" y2="65.3" stroke="#000" stroke-width="1"/><line x1="43" y1="60.7" x2="285" y2="60.7" stroke="#e4e4e4" stroke-width="1"/><line x1="43" y1="60.7" x2="46" y2="60.7" stroke="#000" stroke-width="1"/><line x1="43" y1="51.4" x2="285" y2="51.4" stroke="#e4e4e4" stroke-width="1"/><line x1="43" y1="51.4" x2="46" y2="51.4" stroke="#000" stroke-width="1"/><line x1="43" y1="46.8" x2="285" y2="46.8" stroke="#e4e4e4" stroke-width="1"/><line x1="43" y1="46.8" x2="46" y2="46.8" stroke="#000" stroke-width="1"/><line x1="43" y1="42.2" x2="285" y2="42.2" stroke="#e4e4e4" stroke-width="1"/><line x1="43" y1="42.2" x2="46" y2="42.2" stroke="#000" stroke-width="1"/><line x1="43" y1="33.0" x2="285" y2="33.0" stroke="#e4e4e4" stroke-width="1"/><line x1="43" y1="33.0" x2="46" y2="33.0" stroke="#000" stroke-width="1"/><line x1="43" y1="28.4" x2="285" y2="28.4" stroke="#e4e4e4" stroke-width="1"/><line x1="43" y1="28.4" x2="46" y2="28.4" stroke="#000" stroke-width="1"/><line x1="53.0" y1="28" x2="53.0" y2="316" stroke="#a8a8a8" stroke-width="1"/><line x1="97.7" y1="28" x2="97.7" y2="316" stroke="#a8a8a8" stroke-width="1"/><line x1="142.4" y1="28" x2="142.4" y2="316" stroke="#a8a8a8" stroke-width="1"/><line x1="187.1" y1="28" x2="187.1" y2="316" stroke="#a8a8a8" stroke-width="1"/><line x1="231.8" y1="28" x2="231.8" y2="316" stroke="#a8a8a8" stroke-width="1"/><line x1="276.5" y1="28" x2="276.5" y2="316" stroke="#a8a8a8" stroke-width="1"/><line x1="43" y1="314.5" x2="285" y2="314.5" stroke="#a8a8a8" stroke-width="1"/><text clip-path="url(#hyclip)" x="42.5" y="319.0" font-family="Liberation Sans" font-size="12.5" text-anchor="end" fill="#111">0,00</text><line x1="43" y1="296.0" x2="285" y2="296.0" stroke="#a8a8a8" stroke-width="1"/><text clip-path="url(#hyclip)" x="42.5" y="300.5" font-family="Liberation Sans" font-size="12.5" text-anchor="end" fill="#111">0,04</text><line x1="43" y1="277.6" x2="285" y2="277.6" stroke="#a8a8a8" stroke-width="1"/><text clip-path="url(#hyclip)" x="42.5" y="282.1" font-family="Liberation Sans" font-size="12.5" text-anchor="end" fill="#111">0,08</text><line x1="43" y1="259.1" x2="285" y2="259.1" stroke="#a8a8a8" stroke-width="1"/><text clip-path="url(#hyclip)" x="42.5" y="263.6" font-family="Liberation Sans" font-size="12.5" text-anchor="end" fill="#111">0,12</text><line x1="43" y1="240.7" x2="285" y2="240.7" stroke="#a8a8a8" stroke-width="1"/><text clip-path="url(#hyclip)" x="42.5" y="245.2" font-family="Liberation Sans" font-size="12.5" text-anchor="end" fill="#111">0,16</text><line x1="43" y1="222.2" x2="285" y2="222.2" stroke="#a8a8a8" stroke-width="1"/><text clip-path="url(#hyclip)" x="42.5" y="226.7" font-family="Liberation Sans" font-size="12.5" text-anchor="end" fill="#111">0,20</text><line x1="43" y1="203.7" x2="285" y2="203.7" stroke="#a8a8a8" stroke-width="1"/><text clip-path="url(#hyclip)" x="42.5" y="208.2" font-family="Liberation Sans" font-size="12.5" text-anchor="end" fill="#111">0,24</text><line x1="43" y1="185.3" x2="285" y2="185.3" stroke="#a8a8a8" stroke-width="1"/><text clip-path="url(#hyclip)" x="42.5" y="189.8" font-family="Liberation Sans" font-size="12.5" text-anchor="end" fill="#111">0,28</text><line x1="43" y1="166.8" x2="285" y2="166.8" stroke="#a8a8a8" stroke-width="1"/><text clip-path="url(#hyclip)" x="42.5" y="171.3" font-family="Liberation Sans" font-size="12.5" text-anchor="end" fill="#111">0,32</text><line x1="43" y1="148.4" x2="285" y2="148.4" stroke="#a8a8a8" stroke-width="1"/><text clip-path="url(#hyclip)" x="42.5" y="152.9" font-family="Liberation Sans" font-size="12.5" text-anchor="end" fill="#111">0,36</text><line x1="43" y1="129.9" x2="285" y2="129.9" stroke="#a8a8a8" stroke-width="1"/><text clip-path="url(#hyclip)" x="42.5" y="134.4" font-family="Liberation Sans" font-size="12.5" text-anchor="end" fill="#111">0,40</text><line x1="43" y1="111.4" x2="285" y2="111.4" stroke="#a8a8a8" stroke-width="1"/><text clip-path="url(#hyclip)" x="42.5" y="115.9" font-family="Liberation Sans" font-size="12.5" text-anchor="end" fill="#111">0,44</text><line x1="43" y1="93.0" x2="285" y2="93.0" stroke="#a8a8a8" stroke-width="1"/><text clip-path="url(#hyclip)" x="42.5" y="97.5" font-family="Liberation Sans" font-size="12.5" text-anchor="end" fill="#111">0,48</text><line x1="43" y1="74.5" x2="285" y2="74.5" stroke="#a8a8a8" stroke-width="1"/><text clip-path="url(#hyclip)" x="42.5" y="79.0" font-family="Liberation Sans" font-size="12.5" text-anchor="end" fill="#111">0,52</text><line x1="43" y1="56.1" x2="285" y2="56.1" stroke="#a8a8a8" stroke-width="1"/><text clip-path="url(#hyclip)" x="42.5" y="60.6" font-family="Liberation Sans" font-size="12.5" text-anchor="end" fill="#111">0,56</text><line x1="43" y1="37.6" x2="285" y2="37.6" stroke="#a8a8a8" stroke-width="1"/><text clip-path="url(#hyclip)" x="42.5" y="42.1" font-family="Liberation Sans" font-size="12.5" text-anchor="end" fill="#111">0,60</text><text x="53.0" y="329" font-family="Liberation Sans" font-size="12.5" text-anchor="middle" fill="#111">0</text><text x="97.7" y="329" font-family="Liberation Sans" font-size="12.5" text-anchor="middle" fill="#111">2</text><text x="142.4" y="329" font-family="Liberation Sans" font-size="12.5" text-anchor="middle" fill="#111">4</text><text x="187.1" y="329" font-family="Liberation Sans" font-size="12.5" text-anchor="middle" fill="#111">6</text><text x="231.8" y="329" font-family="Liberation Sans" font-size="12.5" text-anchor="middle" fill="#111">8</text><text x="276.5" y="329" font-family="Liberation Sans" font-size="12.5" text-anchor="middle" fill="#111">10</text><line x1="53.0" y1="313" x2="53.0" y2="316" stroke="#000" stroke-width="1"/><line x1="64.2" y1="313" x2="64.2" y2="316" stroke="#000" stroke-width="1"/><line x1="75.4" y1="313" x2="75.4" y2="316" stroke="#000" stroke-width="1"/><line x1="86.5" y1="313" x2="86.5" y2="316" stroke="#000" stroke-width="1"/><line x1="97.7" y1="313" x2="97.7" y2="316" stroke="#000" stroke-width="1"/><line x1="108.9" y1="313" x2="108.9" y2="316" stroke="#000" stroke-width="1"/><line x1="120.0" y1="313" x2="120.0" y2="316" stroke="#000" stroke-width="1"/><line x1="131.2" y1="313" x2="131.2" y2="316" stroke="#000" stroke-width="1"/><line x1="142.4" y1="313" x2="142.4" y2="316" stroke="#000" stroke-width="1"/><line x1="153.6" y1="313" x2="153.6" y2="316" stroke="#000" stroke-width="1"/><line x1="164.8" y1="313" x2="164.8" y2="316" stroke="#000" stroke-width="1"/><line x1="175.9" y1="313" x2="175.9" y2="316" stroke="#000" stroke-width="1"/><line x1="187.1" y1="313" x2="187.1" y2="316" stroke="#000" stroke-width="1"/><line x1="198.3" y1="313" x2="198.3" y2="316" stroke="#000" stroke-width="1"/><line x1="209.5" y1="313" x2="209.5" y2="316" stroke="#000" stroke-width="1"/><line x1="220.6" y1="313" x2="220.6" y2="316" stroke="#000" stroke-width="1"/><line x1="231.8" y1="313" x2="231.8" y2="316" stroke="#000" stroke-width="1"/><line x1="243.0" y1="313" x2="243.0" y2="316" stroke="#000" stroke-width="1"/><line x1="254.1" y1="313" x2="254.1" y2="316" stroke="#000" stroke-width="1"/><line x1="265.3" y1="313" x2="265.3" y2="316" stroke="#000" stroke-width="1"/><line x1="276.5" y1="313" x2="276.5" y2="316" stroke="#000" stroke-width="1"/><rect x="43.5" y="28.5" width="241" height="287" fill="none" stroke="#222" stroke-width="1"/><line x1="44" y1="28" x2="44" y2="316" stroke="#111" stroke-width="1.5"/><line x1="43" y1="315.5" x2="285" y2="315.5" stroke="#111" stroke-width="1.5"/><path d="M53.0 314.4 L64.0 314.2 L72.0 313.3 L77.0 311.8 L81.0 309.0 L84.0 304.0 L86.0 296.0 L87.5 286.0 L88.6 276.8 L90.5 248.0 L92.0 221.0 L93.0 194.0 L94.5 190.0 L94.8 178.0 L96.0 164.0 L96.3 148.4 L97.0 108.0 L98.0 70.0 L99.5 48.0 L101.0 30.6 L102.5 38.0 L104.0 54.0 L105.5 98.0 L106.7 136.8 L108.0 143.0 L109.3 147.0 L110.6 148.4 L112.0 158.0 L113.0 169.0 L114.5 180.0 L115.8 186.0 L118.0 218.0 L121.0 256.0 L123.5 278.0 L126.0 292.0 L129.0 302.0 L132.6 308.0 L137.0 311.0 L141.7 312.6 L149.0 313.8 L162.4 314.4 L204.0 314.8 L276.4 315.0" fill="none" stroke="#000" stroke-width="2" stroke-linejoin="round"/><text x="142" y="22" font-family="Liberation Sans" font-weight="bold" font-size="12" text-anchor="middle" fill="#111">Lifetime Histogram</text><text x="164" y="343.5" font-family="Liberation Sans" font-size="13" text-anchor="middle" fill="#111">Lifetime [ns]</text><text transform="translate(13 175.7) rotate(-90)" font-family="Liberation Sans" font-size="12" text-anchor="middle" fill="#111">Occur. [10 <tspan font-size="7" dy="-4">6</tspan><tspan dy="4"> Events]</tspan></text></svg>
<div style="left:1056px;top:47px;width:139px;height:300px;background:#e0e9df"></div>
<div style="left:1056px;top:57px;width:138px;height:82px;border:1px solid #8f968d;border-right-color:#fff;border-bottom-color:#fff;box-sizing:border-box"></div>
<div style="left:1057px;top:58px;width:136px;height:80px;border:1px solid #fff;border-right-color:#8f968d;border-bottom-color:#8f968d;box-sizing:border-box"></div>
<div style="left:1059px;top:50px;width:36px;height:12px;background:#e0e9df"></div>
<div style="left:1061px;top:51.03px;font-size:10px;line-height:10px;white-space:nowrap;letter-spacing:-0.14px;color:#1e1e2e">Lifetime</div>
<div style="left:1058px;top:71.53px;font-size:10px;line-height:10px;white-space:nowrap;letter-spacing:-0.14px;color:#1e1e2e">Min:</div>
<div style="left:1088px;top:68px;width:85px;height:16px;background:#fff;border:1px solid #8e928d;border-top-color:#6f736e;"></div>
<div style="left:872px;top:72.13px;width:300px;font-size:10px;line-height:10px;text-align:right;white-space:nowrap;letter-spacing:-0.14px;color:#1e1e2e">0,0 ns</div>
<div style="left:1175px;top:68px;width:13px;height:7.0px;border:1px solid #9aa098;background:linear-gradient(#eef1ec,#d9ddd7)"></div>
<div style="left:1175px;top:77.0px;width:13px;height:7.0px;border:1px solid #9aa098;background:linear-gradient(#eef1ec,#d9ddd7)"></div>
<div style="left:1179.0px;top:70.8px;width:0;height:0;border-left:3.5px solid transparent;border-right:3.5px solid transparent;border-bottom:3.5px solid #000"></div>
<div style="left:1179.0px;top:80.2px;width:0;height:0;border-left:3.5px solid transparent;border-right:3.5px solid transparent;border-top:3.5px solid #000"></div>
<div style="left:1058px;top:94.53px;font-size:10px;line-height:10px;white-space:nowrap;letter-spacing:-0.14px;color:#1e1e2e">Max:</div>
<div style="left:1088px;top:90px;width:85px;height:17px;background:#fff;border:1px solid #8e928d;border-top-color:#6f736e;"></div>
<div style="left:872px;top:94.63px;width:300px;font-size:10px;line-height:10px;text-align:right;white-space:nowrap;letter-spacing:-0.14px;color:#1e1e2e">10,0 ns</div>
<div style="left:1175px;top:90px;width:13px;height:7.5px;border:1px solid #9aa098;background:linear-gradient(#eef1ec,#d9ddd7)"></div>
<div style="left:1175px;top:99.5px;width:13px;height:7.5px;border:1px solid #9aa098;background:linear-gradient(#eef1ec,#d9ddd7)"></div>
<div style="left:1179.0px;top:93.0px;width:0;height:0;border-left:3.5px solid transparent;border-right:3.5px solid transparent;border-bottom:3.5px solid #000"></div>
<div style="left:1179.0px;top:103.0px;width:0;height:0;border-left:3.5px solid transparent;border-right:3.5px solid transparent;border-top:3.5px solid #000"></div>
<div style="left:1058px;top:117.53px;font-size:10px;line-height:10px;white-space:nowrap;letter-spacing:-0.14px;color:#1e1e2e">Smpl. Pts.:</div>
<div style="left:1118px;top:113px;width:55px;height:17px;background:#fff;border:1px solid #8e928d;border-top-color:#6f736e;"></div>
<div style="left:853px;top:117.53px;width:600px;font-size:10px;line-height:10px;text-align:center;white-space:nowrap;letter-spacing:-0.14px;color:#1e1e2e">400</div>
<div style="left:1175px;top:113px;width:13px;height:7.5px;border:1px solid #9aa098;background:linear-gradient(#eef1ec,#d9ddd7)"></div>
<div style="left:1175px;top:122.5px;width:13px;height:7.5px;border:1px solid #9aa098;background:linear-gradient(#eef1ec,#d9ddd7)"></div>
<div style="left:1179.0px;top:116.0px;width:0;height:0;border-left:3.5px solid transparent;border-right:3.5px solid transparent;border-bottom:3.5px solid #000"></div>
<div style="left:1179.0px;top:126.0px;width:0;height:0;border-left:3.5px solid transparent;border-right:3.5px solid transparent;border-top:3.5px solid #000"></div>
<div style="left:1055px;top:292px;width:138px;height:17px;border:1px solid #8d938c;border-radius:3px;background:linear-gradient(#f1f4f0 0%,#eef1ec 50%,#d8ddd6 58%,#dfe3dd 100%);"></div>
<div style="left:825.0px;top:296.64px;width:600px;font-size:10px;line-height:10px;text-align:center;white-space:nowrap;letter-spacing:-0.14px;color:#1e1e2e;">Recalculate Histogram</div>
<div style="left:1055px;top:315px;width:138px;height:17px;border:1px solid #8d938c;border-radius:3px;background:linear-gradient(#f1f4f0 0%,#eef1ec 50%,#d8ddd6 58%,#dfe3dd 100%);"></div>
<div style="left:825.0px;top:319.64px;width:600px;font-size:10px;line-height:10px;text-align:center;white-space:nowrap;letter-spacing:-0.14px;color:#1e1e2e;">Optimize View</div>
<div style="left:1055px;top:338px;width:138px;height:17px;border:1px solid #8d938c;border-radius:3px;background:linear-gradient(#f1f4f0 0%,#eef1ec 50%,#d8ddd6 58%,#dfe3dd 100%);"></div>
<div style="left:825.0px;top:342.64px;width:600px;font-size:10px;line-height:10px;text-align:center;white-space:nowrap;letter-spacing:-0.14px;color:#1e1e2e;">Autoscale Histogram</div>
<div style="left:1055px;top:361px;width:138px;height:17px;border:1px solid #8d938c;border-radius:3px;background:linear-gradient(#f1f4f0 0%,#eef1ec 50%,#d8ddd6 58%,#dfe3dd 100%);"></div>
<div style="left:825.0px;top:365.64px;width:600px;font-size:10px;line-height:10px;text-align:center;white-space:nowrap;letter-spacing:-0.14px;color:#1e1e2e;">Show All Events</div>
<div style="left:5px;top:375px;width:294px;height:372px;background:#e0e9df"></div>
<div style="left:7px;top:377px;width:67px;height:17px;background:#22a33e;border-left:2px solid #000;border-right:2px solid #000;box-sizing:border-box"></div>
<div style="left:12px;top:381.04px;font-size:10px;line-height:10px;white-space:nowrap;letter-spacing:-0.14px;color:#fff">Decay Fitting</div>
<div style="left:74px;top:377px;width:87px;height:17px;border-right:1px solid #a9b0a7;box-sizing:border-box"></div>
<div style="left:79px;top:381.04px;font-size:10px;line-height:10px;white-space:nowrap;letter-spacing:-0.14px;color:#1e1e2e">Parameter Profiles</div>
<div style="left:6px;top:394px;width:293px;height:3px;background:#8f968d"></div>
<div style="left:6px;top:397px;width:293px;height:1px;background:#c9d0c7"></div>
<div style="left:6.5px;top:401.54px;font-size:10px;line-height:10px;white-space:nowrap;letter-spacing:-0.14px;color:#1e1e2e">Fitting Model:</div>
<div style="left:84px;top:398px;width:154px;height:16px;background:#fff;border:1px solid #8e928d;border-top-color:#6f736e;"></div>
<div style="left:88px;top:402.14px;font-size:10px;line-height:10px;white-space:nowrap;letter-spacing:-0.14px;color:#1e1e2e">n-Exponential Tailfit</div>
<div style="left:224px;top:400px;width:13px;height:12px;border:1px solid #a5aba3;background:linear-gradient(#eef1ec,#d5dad3)"></div>
<div style="left:227.5px;top:405.8px;width:0;height:0;border-left:3.5px solid transparent;border-right:3.5px solid transparent;border-top:3.5px solid #000"></div>
<div style="left:241px;top:398px;width:56px;height:18px;border:1px solid #8d938c;border-radius:3px;background:linear-gradient(#f1f4f0 0%,#eef1ec 50%,#d8ddd6 58%,#dfe3dd 100%);"></div>
<div style="left:-30.0px;top:403.14px;width:600px;font-size:10px;line-height:10px;text-align:center;white-space:nowrap;letter-spacing:-0.14px;color:#1e1e2e;">Help</div>
<div style="left:6.5px;top:424.54px;font-size:10px;line-height:10px;white-space:nowrap;letter-spacing:-0.14px;color:#1e1e2e">Decay:</div>
<div style="left:84px;top:421px;width:154px;height:16px;background:#fff;border:1px solid #8e928d;border-top-color:#6f736e;"></div>
<div style="left:88px;top:425.14px;font-size:10px;line-height:10px;white-space:nowrap;letter-spacing:-0.14px;color:#1e1e2e">Overall Decay</div>
<div style="left:224px;top:423px;width:13px;height:12px;border:1px solid #a5aba3;background:linear-gradient(#eef1ec,#d5dad3)"></div>
<div style="left:227.5px;top:428.8px;width:0;height:0;border-left:3.5px solid transparent;border-right:3.5px solid transparent;border-top:3.5px solid #000"></div>
<div style="left:6.5px;top:447.54px;font-size:10px;line-height:10px;white-space:nowrap;letter-spacing:-0.14px;color:#1e1e2e">IRF:</div>
<div style="left:31px;top:445px;width:49px;height:17px;border:1px solid #8d938c;border-radius:3px;background:linear-gradient(#f1f4f0 0%,#eef1ec 50%,#d8ddd6 58%,#dfe3dd 100%);"></div>
<div style="left:-243.5px;top:449.64px;width:600px;font-size:10px;line-height:10px;text-align:center;white-space:nowrap;letter-spacing:-0.14px;color:#1e1e2e;">Import</div>
<div style="left:84px;top:444px;width:154px;height:16px;background:#fff;border:1px solid #8e928d;border-top-color:#6f736e;"></div>
<div style="left:88px;top:448.14px;font-size:10px;line-height:10px;white-space:nowrap;letter-spacing:-0.14px;color:#1e1e2e">Calculated IRF</div>
<div style="left:224px;top:446px;width:13px;height:12px;border:1px solid #a5aba3;background:linear-gradient(#eef1ec,#d5dad3)"></div>
<div style="left:227.5px;top:451.8px;width:0;height:0;border-left:3.5px solid transparent;border-right:3.5px solid transparent;border-top:3.5px solid #000"></div>
<div style="left:241px;top:445px;width:56px;height:17px;border:1px solid #b9c0b7;border-radius:3px;background:linear-gradient(#f1f4f0 0%,#eef1ec 50%,#d8ddd6 58%,#dfe3dd 100%);"></div>
<div style="left:-30.0px;top:449.64px;width:600px;font-size:10px;line-height:10px;text-align:center;white-space:nowrap;letter-spacing:-0.14px;color:#a9b0a7;">Remove</div>
<div style="left:6.5px;top:470.54px;font-size:10px;line-height:10px;white-space:nowrap;letter-spacing:-0.14px;color:#1e1e2e">Model Parameters:</div>
<div style="left:107px;top:470.54px;font-size:10px;line-height:10px;white-space:nowrap;letter-spacing:-0.14px;color:#1e1e2e">n</div>
<div style="left:168px;top:468px;width:43px;height:17px;background:#fff;border:1px solid #8e928d;border-top-color:#6f736e;"></div>
<div style="left:-90px;top:472.64px;width:300px;font-size:10px;line-height:10px;text-align:right;white-space:nowrap;letter-spacing:-0.14px;color:#1e1e2e">1</div>
<div style="left:213px;top:468px;width:13px;height:7.5px;border:1px solid #9aa098;background:linear-gradient(#eef1ec,#d9ddd7)"></div>
<div style="left:213px;top:477.5px;width:13px;height:7.5px;border:1px solid #9aa098;background:linear-gradient(#eef1ec,#d9ddd7)"></div>
<div style="left:217.0px;top:471.0px;width:0;height:0;border-left:3.5px solid transparent;border-right:3.5px solid transparent;border-bottom:3.5px solid #000"></div>
<div style="left:217.0px;top:481.0px;width:0;height:0;border-left:3.5px solid transparent;border-right:3.5px solid transparent;border-top:3.5px solid #000"></div>
<div style="left:241px;top:468px;width:56px;height:17px;border:1px solid #b9c0b7;border-radius:3px;background:linear-gradient(#f1f4f0 0%,#eef1ec 50%,#d8ddd6 58%,#dfe3dd 100%);"></div>
<div style="left:-30.0px;top:472.64px;width:600px;font-size:10px;line-height:10px;text-align:center;white-space:nowrap;letter-spacing:-0.14px;color:#a9b0a7;">IRF for all</div>
<div style="left:8px;top:491px;width:91px;height:14px;border:1px solid #8d938c;border-radius:3px;background:linear-gradient(#ff8f5e 0%,#ff8a55 45%,#ff5e1a 55%,#ff5a14 100%);"></div>
<div style="left:-245.5px;top:494.14px;width:600px;font-size:10px;line-height:10px;text-align:center;white-space:nowrap;letter-spacing:-0.14px;color:#1e1e2e;">Show All</div>
<div style="left:104px;top:491px;width:93px;height:14px;border:1px solid #8d938c;border-radius:3px;background:linear-gradient(#f1f4f0 0%,#eef1ec 50%,#d8ddd6 58%,#dfe3dd 100%);"></div>
<div style="left:-148.5px;top:494.14px;width:600px;font-size:10px;line-height:10px;text-align:center;white-space:nowrap;letter-spacing:-0.14px;color:#1e1e2e;">Export as ASCII</div>
<div style="left:202px;top:491px;width:95px;height:14px;border:1px solid #8d938c;border-radius:3px;background:linear-gradient(#f1f4f0 0%,#eef1ec 50%,#d8ddd6 58%,#dfe3dd 100%);"></div>
<div style="left:-49.5px;top:494.14px;width:600px;font-size:10px;line-height:10px;text-align:center;white-space:nowrap;letter-spacing:-0.14px;color:#1e1e2e;">Export to Clipboard</div>
<svg style="left:6px;top:507px;" width="285" height="200" viewBox="0 0 285 200"><rect x="0" y="0" width="280" height="200" fill="#e0e9df"/><rect x="106.8" y="36.200000000000045" width="170.7" height="17.6" fill="#fff"/><rect x="245.6" y="37.200000000000045" width="15" height="15.6" fill="#e4e9e2"/><rect x="106.8" y="53.799999999999955" width="170.7" height="17.6" fill="#fff"/><rect x="245.6" y="54.799999999999955" width="15" height="15.6" fill="#e4e9e2"/><rect x="106.8" y="71.39999999999998" width="170.7" height="17.6" fill="#fff"/><rect x="245.6" y="72.39999999999998" width="15" height="15.6" fill="#e4e9e2"/><rect x="260.8" y="0.5" width="16.7" height="18.1" fill="#fff"/><line x1="0" y1="0.5" x2="277.5" y2="0.5" stroke="#111" stroke-width="1.6"/><line x1="0" y1="18.6" x2="277.5" y2="18.6" stroke="#111" stroke-width="1.6"/><line x1="0" y1="36.2" x2="277.5" y2="36.2" stroke="#111" stroke-width="1.6"/><line x1="0" y1="53.8" x2="277.5" y2="53.8" stroke="#111" stroke-width="1.6"/><line x1="0" y1="71.4" x2="277.5" y2="71.4" stroke="#111" stroke-width="1.6"/><line x1="0" y1="89.0" x2="277.5" y2="89.0" stroke="#111" stroke-width="1.6"/><line x1="0" y1="106.6" x2="277.5" y2="106.6" stroke="#111" stroke-width="1.6"/><line x1="0" y1="124.2" x2="277.5" y2="124.2" stroke="#111" stroke-width="1.6"/><line x1="0" y1="141.8" x2="277.5" y2="141.8" stroke="#111" stroke-width="1.6"/><line x1="0" y1="159.4" x2="277.5" y2="159.4" stroke="#111" stroke-width="1.6"/><line x1="0" y1="177.0" x2="277.5" y2="177.0" stroke="#111" stroke-width="1.6"/><line x1="0" y1="194.6" x2="277.5" y2="194.6" stroke="#111" stroke-width="1.6"/><line x1="0.8" y1="0.5" x2="0.8" y2="194.60000000000002" stroke="#111" stroke-width="1.6"/><line x1="277.5" y1="0.5" x2="277.5" y2="194.60000000000002" stroke="#111" stroke-width="1.6"/><line x1="124.4" y1="0.5" x2="124.4" y2="194.60000000000002" stroke="#111" stroke-width="1.6"/><line x1="106.8" y1="0.5" x2="106.8" y2="18.600000000000023" stroke="#777" stroke-width="1"/><line x1="260.8" y1="0.5" x2="260.8" y2="18.600000000000023" stroke="#777" stroke-width="1"/><line x1="106.8" y1="36.200000000000045" x2="106.8" y2="53.799999999999955" stroke="#111" stroke-width="1.6"/><line x1="245.6" y1="36.200000000000045" x2="245.6" y2="53.799999999999955" stroke="#111" stroke-width="1"/><line x1="260.8" y1="36.200000000000045" x2="260.8" y2="53.799999999999955" stroke="#111" stroke-width="1"/><path d="M249.6 42.700000000000045 L253.10000000000002 39.200000000000045 L256.6 42.700000000000045 Z M249.6 47.299999999999955 L253.10000000000002 50.799999999999955 L256.6 47.299999999999955 Z" fill="#111"/><line x1="246" y1="45.0" x2="260" y2="45.0" stroke="#888" stroke-width="1"/><line x1="106.8" y1="53.799999999999955" x2="106.8" y2="71.39999999999998" stroke="#111" stroke-width="1.6"/><line x1="245.6" y1="53.799999999999955" x2="245.6" y2="71.39999999999998" stroke="#111" stroke-width="1"/><line x1="260.8" y1="53.799999999999955" x2="260.8" y2="71.39999999999998" stroke="#111" stroke-width="1"/><path d="M249.6 60.299999999999955 L253.10000000000002 56.799999999999955 L256.6 60.299999999999955 Z M249.6 64.89999999999998 L253.10000000000002 68.39999999999998 L256.6 64.89999999999998 Z" fill="#111"/><line x1="246" y1="62.6" x2="260" y2="62.6" stroke="#888" stroke-width="1"/><line x1="106.8" y1="71.39999999999998" x2="106.8" y2="89" stroke="#111" stroke-width="1.6"/><line x1="245.6" y1="71.39999999999998" x2="245.6" y2="89" stroke="#111" stroke-width="1"/><line x1="260.8" y1="71.39999999999998" x2="260.8" y2="89" stroke="#111" stroke-width="1"/><path d="M249.6 77.89999999999998 L253.10000000000002 74.39999999999998 L256.6 77.89999999999998 Z M249.6 82.5 L253.10000000000002 86 L256.6 82.5 Z" fill="#111"/><line x1="246" y1="80.2" x2="260" y2="80.2" stroke="#888" stroke-width="1"/><path d="M265.5 9.550000000000011 L267.8 12.050000000000011 L272 7.050000000000011" stroke="#000" stroke-width="1.6" fill="none"/><path d="M265.5 45.0 L267.8 47.5 L272 42.5" stroke="#000" stroke-width="1.6" fill="none"/><path d="M265.5 62.599999999999966 L267.8 65.09999999999997 L272 60.099999999999966" stroke="#000" stroke-width="1.6" fill="none"/><path d="M265.5 80.19999999999999 L267.8 82.69999999999999 L272 77.69999999999999" stroke="#000" stroke-width="1.6" fill="none"/><g stroke="#222" stroke-width="0.9" fill="none"><circle cx="115.5" cy="9.549999999999955" r="6.5"/><ellipse cx="115.5" cy="9.549999999999955" rx="3" ry="6.5"/><line x1="109.0" y1="9.549999999999955" x2="122.0" y2="9.549999999999955"/><line x1="115.5" y1="3.0499999999999545" x2="115.5" y2="16.049999999999955"/><line x1="109.5" y1="6.5499999999999545" x2="121.5" y2="6.5499999999999545"/><line x1="109.5" y1="12.549999999999955" x2="121.5" y2="12.549999999999955"/></g></svg>
<div style="left:8px;top:513.58px;font-size:10px;line-height:10px;white-space:nowrap;letter-spacing:-0.14px;color:#1e1e2e">Parameter</div>
<div style="left:8px;top:531.44px;font-size:10px;line-height:10px;white-space:nowrap;letter-spacing:-0.14px;color:#1e1e2e">t<span style="font-size:8px">0</span>[ns]</div>
<div style="left:8px;top:549.03px;font-size:10px;line-height:10px;white-space:nowrap;letter-spacing:-0.14px;color:#1e1e2e">A<span style="font-size:7px">1</span> [kCnts]</div>
<div style="left:8px;top:566.63px;font-size:10px;line-height:10px;white-space:nowrap;letter-spacing:-0.14px;color:#1e1e2e"><span style="font-size:13px">τ</span><span style="font-size:7px">1</span> [ns]</div>
<div style="left:8px;top:584.24px;font-size:10px;line-height:10px;white-space:nowrap;letter-spacing:-0.14px;color:#1e1e2e">Bkgr<span style="font-size:7px">Dec</span>[Cnts]</div>
<div style="left:8px;top:601.83px;font-size:10px;line-height:10px;white-space:nowrap;letter-spacing:-0.14px;color:#1e1e2e">I<span style="font-size:7px">1</span> [kCnts]</div>
<div style="left:8px;top:619.44px;font-size:10px;line-height:10px;white-space:nowrap;letter-spacing:-0.14px;color:#1e1e2e">I<span style="font-size:7px">Sum</span>[kCnts]</div>
<div style="left:8px;top:637.03px;font-size:10px;line-height:10px;white-space:nowrap;letter-spacing:-0.14px;color:#1e1e2e">A<span style="font-size:7px">Sum</span>[kCnts]</div>
<div style="left:8px;top:654.63px;font-size:10px;line-height:10px;white-space:nowrap;letter-spacing:-0.14px;color:#1e1e2e"><span style="font-size:13px">τ</span><span style="font-size:7px">AvInt</span>[ns]</div>
<div style="left:8px;top:672.24px;font-size:10px;line-height:10px;white-space:nowrap;letter-spacing:-0.14px;color:#1e1e2e"><span style="font-size:13px">τ</span><span style="font-size:7px">AvAmp</span>[ns]</div>
<div style="left:8px;top:689.83px;font-size:10px;line-height:10px;white-space:nowrap;letter-spacing:-0.14px;color:#1e1e2e">A<span style="font-size:7px">rel 1</span></div>
<div style="left:132px;top:511.88px;font-size:10px;line-height:10px;white-space:nowrap;letter-spacing:-0.14px;color:#1e1e2e">Overall Decay</div>
<div style="left:-103px;top:530.24px;width:600px;font-size:10px;line-height:10px;text-align:center;white-space:nowrap;letter-spacing:-0.14px;color:#1e1e2e">0,0000 ± ------</div>
<div style="left:-98px;top:547.33px;width:600px;font-size:10px;line-height:10px;text-align:center;white-space:nowrap;letter-spacing:-0.14px;color:#1e1e2e">0,000 ± 0,000</div>
<div style="left:-98px;top:564.93px;width:600px;font-size:10px;line-height:10px;text-align:center;white-space:nowrap;letter-spacing:-0.14px;color:#1e1e2e">0,000 ± 0,000</div>
<div style="left:-98px;top:582.53px;width:600px;font-size:10px;line-height:10px;text-align:center;white-space:nowrap;letter-spacing:-0.14px;color:#1e1e2e">0,000 ± 0,000</div>
<div style="left:-98px;top:600.13px;width:600px;font-size:10px;line-height:10px;text-align:center;white-space:nowrap;letter-spacing:-0.14px;color:#1e1e2e">0,000 ± 0,000</div>
<div style="left:-98px;top:617.74px;width:600px;font-size:10px;line-height:10px;text-align:center;white-space:nowrap;letter-spacing:-0.14px;color:#1e1e2e">0,000 ± 0,000</div>
<div style="left:-98px;top:635.33px;width:600px;font-size:10px;line-height:10px;text-align:center;white-space:nowrap;letter-spacing:-0.14px;color:#1e1e2e">0,000 ± 0,000</div>
<div style="left:-98px;top:652.93px;width:600px;font-size:10px;line-height:10px;text-align:center;white-space:nowrap;letter-spacing:-0.14px;color:#1e1e2e">0,000 ± 0,000</div>
<div style="left:-98px;top:670.53px;width:600px;font-size:10px;line-height:10px;text-align:center;white-space:nowrap;letter-spacing:-0.14px;color:#1e1e2e">0,000 ± 0,000</div>
<div style="left:-98px;top:688.13px;width:600px;font-size:10px;line-height:10px;text-align:center;white-space:nowrap;letter-spacing:-0.14px;color:#1e1e2e">0,000 ± 0,000</div>
<div style="left:74px;top:545px;width:35px;height:13px;border:1px solid #8d938c;border-radius:3px;background:linear-gradient(#f1f4f0 0%,#eef1ec 50%,#d8ddd6 58%,#dfe3dd 100%);border-color:#222;border-radius:3px"></div>
<div style="left:-207.5px;top:547.63px;width:600px;font-size:10px;line-height:10px;text-align:center;white-space:nowrap;letter-spacing:-0.14px;color:#1e1e2e;">Limits</div>
<div style="left:74px;top:562px;width:35px;height:13px;border:1px solid #8d938c;border-radius:3px;background:#22a33e;border-color:#222;border-radius:3px"></div>
<div style="left:-207.5px;top:564.63px;width:600px;font-size:10px;line-height:10px;text-align:center;white-space:nowrap;letter-spacing:-0.14px;color:#1e1e2e;">Limits</div>
<div style="left:74px;top:580px;width:35px;height:13px;border:1px solid #8d938c;border-radius:3px;background:linear-gradient(#f1f4f0 0%,#eef1ec 50%,#d8ddd6 58%,#dfe3dd 100%);border-color:#222;border-radius:3px"></div>
<div style="left:-207.5px;top:582.63px;width:600px;font-size:10px;line-height:10px;text-align:center;white-space:nowrap;letter-spacing:-0.14px;color:#1e1e2e;">Limits</div>
<div style="left:284px;top:507px;width:4px;height:200px;background:#d5dbd3"></div>
<div style="left:6px;top:709px;width:278px;height:16px;background:#d0d6ce"></div>
<div style="left:6px;top:709px;width:15px;height:15px;background:#e6ebe4;border:1px solid #b5bcb3;box-sizing:border-box"></div>
<div style="left:11.2px;top:713.0px;width:0;height:0;border-top:3.5px solid transparent;border-bottom:3.5px solid transparent;border-right:3.5px solid #000"></div>
<div style="left:21px;top:709px;width:16px;height:15px;background:#e6ebe4;border:1px solid #b5bcb3;box-sizing:border-box"></div>
<div style="left:268px;top:709px;width:16px;height:15px;background:#e6ebe4;border:1px solid #b5bcb3;box-sizing:border-box"></div>
<div style="left:274.8px;top:713.0px;width:0;height:0;border-top:3.5px solid transparent;border-bottom:3.5px solid transparent;border-left:3.5px solid #000"></div>
<div style="left:7px;top:726px;width:43px;height:16px;border:1px solid #8d938c;border-radius:3px;background:linear-gradient(#f1f4f0 0%,#eef1ec 50%,#d8ddd6 58%,#dfe3dd 100%);"></div>
<div style="left:-270.5px;top:730.13px;width:600px;font-size:10px;line-height:10px;text-align:center;white-space:nowrap;letter-spacing:-0.14px;color:#1e1e2e;">Clear</div>
<div style="left:55px;top:726px;width:43px;height:16px;border:1px solid #8d938c;border-radius:3px;background:linear-gradient(#ff8f5e 0%,#ff8a55 45%,#ff5e1a 55%,#ff5a14 100%);"></div>
<div style="left:-222.5px;top:730.13px;width:600px;font-size:10px;line-height:10px;text-align:center;white-space:nowrap;letter-spacing:-0.14px;color:#1e1e2e;">Initial Fit</div>
<div style="left:103px;top:726px;width:44px;height:16px;border:1px solid #8d938c;border-radius:3px;background:linear-gradient(#f1f4f0 0%,#eef1ec 50%,#d8ddd6 58%,#dfe3dd 100%);"></div>
<div style="left:-174.0px;top:730.13px;width:600px;font-size:10px;line-height:10px;text-align:center;white-space:nowrap;letter-spacing:-0.14px;color:#1e1e2e;">Fit</div>
<div style="left:152px;top:726px;width:43px;height:16px;border:1px solid #8d938c;border-radius:3px;background:linear-gradient(#f1f4f0 0%,#eef1ec 50%,#d8ddd6 58%,#dfe3dd 100%);"></div>
<div style="left:-125.5px;top:730.13px;width:600px;font-size:10px;line-height:10px;text-align:center;white-space:nowrap;letter-spacing:-0.14px;color:#1e1e2e;">Fit All</div>
<div style="left:204px;top:729.53px;font-size:10px;line-height:10px;white-space:nowrap;letter-spacing:-0.14px;color:#1e1e2e">X² =</div>
<div style="left:228px;top:726px;width:54px;height:17px;border:1px solid #9aa098;box-sizing:border-box"></div>
<div style="left:-21px;top:730.03px;width:300px;font-size:10px;line-height:10px;text-align:right;white-space:nowrap;letter-spacing:-0.14px;color:#1e1e2e">0,000</div>
<div style="left:299px;top:397px;width:897px;height:1px;background:#b8cbb5"></div>
<div style="left:307px;top:402px;width:9px;height:9px;border:1px solid #5f6b5e;background:#24a33f"></div>
<svg style="left:307px;top:402px" width="11" height="11"><path d="M2.2 5.2 L4.2 7.3 L7.8 2.6" stroke="#000" stroke-width="1.8" fill="none"/></svg>
<div style="left:321px;top:403.04px;font-size:10px;line-height:10px;white-space:nowrap;letter-spacing:-0.14px;color:#1e1e2e">Apply Limits to All Curves</div>
<div style="left:548px;top:402.04px;font-size:10px;line-height:10px;white-space:nowrap;letter-spacing:-0.14px;color:#1e1e2e">Number of Photons: 21104555; Selected: 13248175 (63%)</div>
<div style="left:307px;top:425.04px;font-size:10px;line-height:10px;white-space:nowrap;letter-spacing:-0.14px;color:#1e1e2e">Lower Boundary:</div>
<div style="left:397px;top:421px;width:103px;height:17px;background:#fff;border:1px solid #8e928d;border-top-color:#6f736e;"></div>
<div style="left:195px;top:425.64px;width:300px;font-size:10px;line-height:10px;text-align:right;white-space:nowrap;letter-spacing:-0.14px;color:#1e1e2e">2,16 ns</div>
<div style="left:502px;top:421px;width:13px;height:7.5px;border:1px solid #9aa098;background:linear-gradient(#eef1ec,#d9ddd7)"></div>
<div style="left:502px;top:430.5px;width:13px;height:7.5px;border:1px solid #9aa098;background:linear-gradient(#eef1ec,#d9ddd7)"></div>
<div style="left:506.0px;top:424.0px;width:0;height:0;border-left:3.5px solid transparent;border-right:3.5px solid transparent;border-bottom:3.5px solid #000"></div>
<div style="left:506.0px;top:434.0px;width:0;height:0;border-left:3.5px solid transparent;border-right:3.5px solid transparent;border-top:3.5px solid #000"></div>
<div style="left:530px;top:425.04px;font-size:10px;line-height:10px;white-space:nowrap;letter-spacing:-0.14px;color:#1e1e2e">Upper Boundary:</div>
<div style="left:619px;top:421px;width:103px;height:17px;background:#fff;border:1px solid #8e928d;border-top-color:#6f736e;"></div>
<div style="left:417px;top:425.64px;width:300px;font-size:10px;line-height:10px;text-align:right;white-space:nowrap;letter-spacing:-0.14px;color:#1e1e2e">39,60 ns</div>
<div style="left:724px;top:421px;width:13px;height:7.5px;border:1px solid #9aa098;background:linear-gradient(#eef1ec,#d9ddd7)"></div>
<div style="left:724px;top:430.5px;width:13px;height:7.5px;border:1px solid #9aa098;background:linear-gradient(#eef1ec,#d9ddd7)"></div>
<div style="left:728.0px;top:424.0px;width:0;height:0;border-left:3.5px solid transparent;border-right:3.5px solid transparent;border-bottom:3.5px solid #000"></div>
<div style="left:728.0px;top:434.0px;width:0;height:0;border-left:3.5px solid transparent;border-right:3.5px solid transparent;border-top:3.5px solid #000"></div>
<div style="left:759px;top:422px;width:79px;height:17px;border:1px solid #8d938c;border-radius:3px;background:linear-gradient(#f1f4f0 0%,#eef1ec 50%,#d8ddd6 58%,#dfe3dd 100%);"></div>
<div style="left:499.5px;top:426.64px;width:600px;font-size:10px;line-height:10px;text-align:center;white-space:nowrap;letter-spacing:-0.14px;color:#1e1e2e;">Reset Range</div>
<div style="left:299px;top:440px;width:1px;height:307px;background:#a8afa6"></div>
<svg style="left:304px;top:445px;" width="747" height="296" viewBox="0 0 747 296"><rect width="747" height="296" fill="#fff"/><line x1="69.6" y1="21" x2="69.6" y2="278" stroke="#e6e6e6" stroke-width="1"/><line x1="86.6" y1="21" x2="86.6" y2="278" stroke="#e6e6e6" stroke-width="1"/><line x1="103.7" y1="21" x2="103.7" y2="278" stroke="#e6e6e6" stroke-width="1"/><line x1="137.9" y1="21" x2="137.9" y2="278" stroke="#e6e6e6" stroke-width="1"/><line x1="154.9" y1="21" x2="154.9" y2="278" stroke="#e6e6e6" stroke-width="1"/><line x1="172.0" y1="21" x2="172.0" y2="278" stroke="#e6e6e6" stroke-width="1"/><line x1="206.1" y1="21" x2="206.1" y2="278" stroke="#e6e6e6" stroke-width="1"/><line x1="223.2" y1="21" x2="223.2" y2="278" stroke="#e6e6e6" stroke-width="1"/><line x1="240.3" y1="21" x2="240.3" y2="278" stroke="#e6e6e6" stroke-width="1"/><line x1="274.4" y1="21" x2="274.4" y2="278" stroke="#e6e6e6" stroke-width="1"/><line x1="291.5" y1="21" x2="291.5" y2="278" stroke="#e6e6e6" stroke-width="1"/><line x1="308.5" y1="21" x2="308.5" y2="278" stroke="#e6e6e6" stroke-width="1"/><line x1="342.7" y1="21" x2="342.7" y2="278" stroke="#e6e6e6" stroke-width="1"/><line x1="359.8" y1="21" x2="359.8" y2="278" stroke="#e6e6e6" stroke-width="1"/><line x1="376.8" y1="21" x2="376.8" y2="278" stroke="#e6e6e6" stroke-width="1"/><line x1="411.0" y1="21" x2="411.0" y2="278" stroke="#e6e6e6" stroke-width="1"/><line x1="428.0" y1="21" x2="428.0" y2="278" stroke="#e6e6e6" stroke-width="1"/><line x1="445.1" y1="21" x2="445.1" y2="278" stroke="#e6e6e6" stroke-width="1"/><line x1="479.2" y1="21" x2="479.2" y2="278" stroke="#e6e6e6" stroke-width="1"/><line x1="496.3" y1="21" x2="496.3" y2="278" stroke="#e6e6e6" stroke-width="1"/><line x1="513.4" y1="21" x2="513.4" y2="278" stroke="#e6e6e6" stroke-width="1"/><line x1="547.5" y1="21" x2="547.5" y2="278" stroke="#e6e6e6" stroke-width="1"/><line x1="564.6" y1="21" x2="564.6" y2="278" stroke="#e6e6e6" stroke-width="1"/><line x1="581.7" y1="21" x2="581.7" y2="278" stroke="#e6e6e6" stroke-width="1"/><line x1="615.8" y1="21" x2="615.8" y2="278" stroke="#e6e6e6" stroke-width="1"/><line x1="632.9" y1="21" x2="632.9" y2="278" stroke="#e6e6e6" stroke-width="1"/><line x1="650.0" y1="21" x2="650.0" y2="278" stroke="#e6e6e6" stroke-width="1"/><line x1="684.1" y1="21" x2="684.1" y2="278" stroke="#e6e6e6" stroke-width="1"/><line x1="701.2" y1="21" x2="701.2" y2="278" stroke="#e6e6e6" stroke-width="1"/><line x1="718.2" y1="21" x2="718.2" y2="278" stroke="#e6e6e6" stroke-width="1"/><line x1="44" y1="187.3" x2="735" y2="187.3" stroke="#e8e8e8" stroke-width="1"/><line x1="44" y1="182.2" x2="735" y2="182.2" stroke="#e8e8e8" stroke-width="1"/><line x1="44" y1="178.6" x2="735" y2="178.6" stroke="#e8e8e8" stroke-width="1"/><line x1="44" y1="175.8" x2="735" y2="175.8" stroke="#e8e8e8" stroke-width="1"/><line x1="44" y1="173.6" x2="735" y2="173.6" stroke="#e8e8e8" stroke-width="1"/><line x1="44" y1="171.6" x2="735" y2="171.6" stroke="#e8e8e8" stroke-width="1"/><line x1="44" y1="170.0" x2="735" y2="170.0" stroke="#e8e8e8" stroke-width="1"/><line x1="44" y1="168.5" x2="735" y2="168.5" stroke="#e8e8e8" stroke-width="1"/><line x1="44" y1="158.6" x2="735" y2="158.6" stroke="#e8e8e8" stroke-width="1"/><line x1="44" y1="153.5" x2="735" y2="153.5" stroke="#e8e8e8" stroke-width="1"/><line x1="44" y1="149.9" x2="735" y2="149.9" stroke="#e8e8e8" stroke-width="1"/><line x1="44" y1="147.1" x2="735" y2="147.1" stroke="#e8e8e8" stroke-width="1"/><line x1="44" y1="144.9" x2="735" y2="144.9" stroke="#e8e8e8" stroke-width="1"/><line x1="44" y1="142.9" x2="735" y2="142.9" stroke="#e8e8e8" stroke-width="1"/><line x1="44" y1="141.3" x2="735" y2="141.3" stroke="#e8e8e8" stroke-width="1"/><line x1="44" y1="139.8" x2="735" y2="139.8" stroke="#e8e8e8" stroke-width="1"/><line x1="44" y1="129.9" x2="735" y2="129.9" stroke="#e8e8e8" stroke-width="1"/><line x1="44" y1="124.8" x2="735" y2="124.8" stroke="#e8e8e8" stroke-width="1"/><line x1="44" y1="121.2" x2="735" y2="121.2" stroke="#e8e8e8" stroke-width="1"/><line x1="44" y1="118.4" x2="735" y2="118.4" stroke="#e8e8e8" stroke-width="1"/><line x1="44" y1="116.2" x2="735" y2="116.2" stroke="#e8e8e8" stroke-width="1"/><line x1="44" y1="114.2" x2="735" y2="114.2" stroke="#e8e8e8" stroke-width="1"/><line x1="44" y1="112.6" x2="735" y2="112.6" stroke="#e8e8e8" stroke-width="1"/><line x1="44" y1="111.1" x2="735" y2="111.1" stroke="#e8e8e8" stroke-width="1"/><line x1="44" y1="101.2" x2="735" y2="101.2" stroke="#e8e8e8" stroke-width="1"/><line x1="44" y1="96.1" x2="735" y2="96.1" stroke="#e8e8e8" stroke-width="1"/><line x1="44" y1="92.5" x2="735" y2="92.5" stroke="#e8e8e8" stroke-width="1"/><line x1="44" y1="89.7" x2="735" y2="89.7" stroke="#e8e8e8" stroke-width="1"/><line x1="44" y1="87.5" x2="735" y2="87.5" stroke="#e8e8e8" stroke-width="1"/><line x1="44" y1="85.5" x2="735" y2="85.5" stroke="#e8e8e8" stroke-width="1"/><line x1="44" y1="83.9" x2="735" y2="83.9" stroke="#e8e8e8" stroke-width="1"/><line x1="44" y1="82.4" x2="735" y2="82.4" stroke="#e8e8e8" stroke-width="1"/><line x1="44" y1="72.5" x2="735" y2="72.5" stroke="#e8e8e8" stroke-width="1"/><line x1="44" y1="67.4" x2="735" y2="67.4" stroke="#e8e8e8" stroke-width="1"/><line x1="44" y1="63.8" x2="735" y2="63.8" stroke="#e8e8e8" stroke-width="1"/><line x1="44" y1="61.0" x2="735" y2="61.0" stroke="#e8e8e8" stroke-width="1"/><line x1="44" y1="58.8" x2="735" y2="58.8" stroke="#e8e8e8" stroke-width="1"/><line x1="44" y1="56.8" x2="735" y2="56.8" stroke="#e8e8e8" stroke-width="1"/><line x1="44" y1="55.2" x2="735" y2="55.2" stroke="#e8e8e8" stroke-width="1"/><line x1="44" y1="53.7" x2="735" y2="53.7" stroke="#e8e8e8" stroke-width="1"/><line x1="44" y1="43.8" x2="735" y2="43.8" stroke="#e8e8e8" stroke-width="1"/><line x1="44" y1="38.7" x2="735" y2="38.7" stroke="#e8e8e8" stroke-width="1"/><line x1="44" y1="35.1" x2="735" y2="35.1" stroke="#e8e8e8" stroke-width="1"/><line x1="44" y1="32.3" x2="735" y2="32.3" stroke="#e8e8e8" stroke-width="1"/><line x1="44" y1="30.1" x2="735" y2="30.1" stroke="#e8e8e8" stroke-width="1"/><line x1="44" y1="28.1" x2="735" y2="28.1" stroke="#e8e8e8" stroke-width="1"/><line x1="44" y1="26.5" x2="735" y2="26.5" stroke="#e8e8e8" stroke-width="1"/><line x1="44" y1="25.0" x2="735" y2="25.0" stroke="#e8e8e8" stroke-width="1"/><line x1="44" y1="234.2" x2="735" y2="234.2" stroke="#e8e8e8" stroke-width="1"/><line x1="44" y1="226.8" x2="735" y2="226.8" stroke="#e8e8e8" stroke-width="1"/><line x1="44" y1="219.4" x2="735" y2="219.4" stroke="#e8e8e8" stroke-width="1"/><line x1="44" y1="249.0" x2="735" y2="249.0" stroke="#e8e8e8" stroke-width="1"/><line x1="44" y1="256.4" x2="735" y2="256.4" stroke="#e8e8e8" stroke-width="1"/><line x1="44" y1="263.8" x2="735" y2="263.8" stroke="#e8e8e8" stroke-width="1"/><line x1="52.5" y1="21" x2="52.5" y2="278" stroke="#a9a9a9" stroke-width="1"/><line x1="120.8" y1="21" x2="120.8" y2="278" stroke="#a9a9a9" stroke-width="1"/><line x1="189.1" y1="21" x2="189.1" y2="278" stroke="#a9a9a9" stroke-width="1"/><line x1="257.3" y1="21" x2="257.3" y2="278" stroke="#a9a9a9" stroke-width="1"/><line x1="325.6" y1="21" x2="325.6" y2="278" stroke="#a9a9a9" stroke-width="1"/><line x1="393.9" y1="21" x2="393.9" y2="278" stroke="#a9a9a9" stroke-width="1"/><line x1="462.2" y1="21" x2="462.2" y2="278" stroke="#a9a9a9" stroke-width="1"/><line x1="530.5" y1="21" x2="530.5" y2="278" stroke="#a9a9a9" stroke-width="1"/><line x1="598.7" y1="21" x2="598.7" y2="278" stroke="#a9a9a9" stroke-width="1"/><line x1="667.0" y1="21" x2="667.0" y2="278" stroke="#a9a9a9" stroke-width="1"/><line x1="44" y1="195.9" x2="735" y2="195.9" stroke="#a9a9a9" stroke-width="1"/><text x="42" y="200.4" font-family="Liberation Sans" font-size="12.2" text-anchor="end" fill="#111">10<tspan font-size="9.6" dy="-1.8">0</tspan></text><line x1="44" y1="167.2" x2="735" y2="167.2" stroke="#a9a9a9" stroke-width="1"/><text x="42" y="171.7" font-family="Liberation Sans" font-size="12.2" text-anchor="end" fill="#111">10<tspan font-size="9.6" dy="-1.8">1</tspan></text><line x1="44" y1="138.5" x2="735" y2="138.5" stroke="#a9a9a9" stroke-width="1"/><text x="42" y="143.0" font-family="Liberation Sans" font-size="12.2" text-anchor="end" fill="#111">10<tspan font-size="9.6" dy="-1.8">2</tspan></text><line x1="44" y1="109.8" x2="735" y2="109.8" stroke="#a9a9a9" stroke-width="1"/><text x="42" y="114.3" font-family="Liberation Sans" font-size="12.2" text-anchor="end" fill="#111">10<tspan font-size="9.6" dy="-1.8">3</tspan></text><line x1="44" y1="81.1" x2="735" y2="81.1" stroke="#a9a9a9" stroke-width="1"/><text x="42" y="85.6" font-family="Liberation Sans" font-size="12.2" text-anchor="end" fill="#111">10<tspan font-size="9.6" dy="-1.8">4</tspan></text><line x1="44" y1="52.4" x2="735" y2="52.4" stroke="#a9a9a9" stroke-width="1"/><text x="42" y="56.9" font-family="Liberation Sans" font-size="12.2" text-anchor="end" fill="#111">10<tspan font-size="9.6" dy="-1.8">5</tspan></text><line x1="44" y1="23.7" x2="735" y2="23.7" stroke="#a9a9a9" stroke-width="1"/><text x="42" y="28.2" font-family="Liberation Sans" font-size="12.2" text-anchor="end" fill="#111">10<tspan font-size="9.6" dy="-1.8">6</tspan></text><rect x="4" y="0" width="80" height="21" fill="#fff"/><line x1="44" y1="212.0" x2="735" y2="212.0" stroke="#a9a9a9" stroke-width="1"/><text x="42" y="216.5" font-family="Liberation Sans" font-size="12.5" text-anchor="end" fill="#111">0,4</text><line x1="44" y1="241.6" x2="735" y2="241.6" stroke="#a9a9a9" stroke-width="1"/><text x="42" y="246.1" font-family="Liberation Sans" font-size="12.5" text-anchor="end" fill="#111">0,0</text><line x1="44" y1="271.2" x2="735" y2="271.2" stroke="#a9a9a9" stroke-width="1"/><text x="42" y="275.7" font-family="Liberation Sans" font-size="12.5" text-anchor="end" fill="#111">-0,4</text><text x="52.5" y="290" font-family="Liberation Sans" font-size="13" text-anchor="middle" fill="#111">0</text><text x="120.8" y="290" font-family="Liberation Sans" font-size="13" text-anchor="middle" fill="#111">4</text><text x="189.1" y="290" font-family="Liberation Sans" font-size="13" text-anchor="middle" fill="#111">8</text><text x="257.3" y="290" font-family="Liberation Sans" font-size="13" text-anchor="middle" fill="#111">12</text><text x="325.6" y="290" font-family="Liberation Sans" font-size="13" text-anchor="middle" fill="#111">16</text><text x="393.9" y="290" font-family="Liberation Sans" font-size="13" text-anchor="middle" fill="#111">20</text><text x="462.2" y="290" font-family="Liberation Sans" font-size="13" text-anchor="middle" fill="#111">24</text><text x="530.5" y="290" font-family="Liberation Sans" font-size="13" text-anchor="middle" fill="#111">28</text><text x="598.7" y="290" font-family="Liberation Sans" font-size="13" text-anchor="middle" fill="#111">32</text><text x="667.0" y="290" font-family="Liberation Sans" font-size="13" text-anchor="middle" fill="#111">36</text><text x="735.3" y="290" font-family="Liberation Sans" font-size="13" text-anchor="middle" fill="#111">40</text><line x1="52.5" y1="21" x2="52.5" y2="23" stroke="#000" stroke-width="1"/><line x1="52.5" y1="203" x2="52.5" y2="207" stroke="#000" stroke-width="1"/><line x1="52.5" y1="276" x2="52.5" y2="278" stroke="#000" stroke-width="1"/><line x1="69.6" y1="21" x2="69.6" y2="23" stroke="#000" stroke-width="1"/><line x1="69.6" y1="203" x2="69.6" y2="207" stroke="#000" stroke-width="1"/><line x1="69.6" y1="276" x2="69.6" y2="278" stroke="#000" stroke-width="1"/><line x1="86.6" y1="21" x2="86.6" y2="23" stroke="#000" stroke-width="1"/><line x1="86.6" y1="203" x2="86.6" y2="207" stroke="#000" stroke-width="1"/><line x1="86.6" y1="276" x2="86.6" y2="278" stroke="#000" stroke-width="1"/><line x1="103.7" y1="21" x2="103.7" y2="23" stroke="#000" stroke-width="1"/><line x1="103.7" y1="203" x2="103.7" y2="207" stroke="#000" stroke-width="1"/><line x1="103.7" y1="276" x2="103.7" y2="278" stroke="#000" stroke-width="1"/><line x1="120.8" y1="21" x2="120.8" y2="23" stroke="#000" stroke-width="1"/><line x1="120.8" y1="203" x2="120.8" y2="207" stroke="#000" stroke-width="1"/><line x1="120.8" y1="276" x2="120.8" y2="278" stroke="#000" stroke-width="1"/><line x1="137.9" y1="21" x2="137.9" y2="23" stroke="#000" stroke-width="1"/><line x1="137.9" y1="203" x2="137.9" y2="207" stroke="#000" stroke-width="1"/><line x1="137.9" y1="276" x2="137.9" y2="278" stroke="#000" stroke-width="1"/><line x1="154.9" y1="21" x2="154.9" y2="23" stroke="#000" stroke-width="1"/><line x1="154.9" y1="203" x2="154.9" y2="207" stroke="#000" stroke-width="1"/><line x1="154.9" y1="276" x2="154.9" y2="278" stroke="#000" stroke-width="1"/><line x1="172.0" y1="21" x2="172.0" y2="23" stroke="#000" stroke-width="1"/><line x1="172.0" y1="203" x2="172.0" y2="207" stroke="#000" stroke-width="1"/><line x1="172.0" y1="276" x2="172.0" y2="278" stroke="#000" stroke-width="1"/><line x1="189.1" y1="21" x2="189.1" y2="23" stroke="#000" stroke-width="1"/><line x1="189.1" y1="203" x2="189.1" y2="207" stroke="#000" stroke-width="1"/><line x1="189.1" y1="276" x2="189.1" y2="278" stroke="#000" stroke-width="1"/><line x1="206.1" y1="21" x2="206.1" y2="23" stroke="#000" stroke-width="1"/><line x1="206.1" y1="203" x2="206.1" y2="207" stroke="#000" stroke-width="1"/><line x1="206.1" y1="276" x2="206.1" y2="278" stroke="#000" stroke-width="1"/><line x1="223.2" y1="21" x2="223.2" y2="23" stroke="#000" stroke-width="1"/><line x1="223.2" y1="203" x2="223.2" y2="207" stroke="#000" stroke-width="1"/><line x1="223.2" y1="276" x2="223.2" y2="278" stroke="#000" stroke-width="1"/><line x1="240.3" y1="21" x2="240.3" y2="23" stroke="#000" stroke-width="1"/><line x1="240.3" y1="203" x2="240.3" y2="207" stroke="#000" stroke-width="1"/><line x1="240.3" y1="276" x2="240.3" y2="278" stroke="#000" stroke-width="1"/><line x1="257.3" y1="21" x2="257.3" y2="23" stroke="#000" stroke-width="1"/><line x1="257.3" y1="203" x2="257.3" y2="207" stroke="#000" stroke-width="1"/><line x1="257.3" y1="276" x2="257.3" y2="278" stroke="#000" stroke-width="1"/><line x1="274.4" y1="21" x2="274.4" y2="23" stroke="#000" stroke-width="1"/><line x1="274.4" y1="203" x2="274.4" y2="207" stroke="#000" stroke-width="1"/><line x1="274.4" y1="276" x2="274.4" y2="278" stroke="#000" stroke-width="1"/><line x1="291.5" y1="21" x2="291.5" y2="23" stroke="#000" stroke-width="1"/><line x1="291.5" y1="203" x2="291.5" y2="207" stroke="#000" stroke-width="1"/><line x1="291.5" y1="276" x2="291.5" y2="278" stroke="#000" stroke-width="1"/><line x1="308.5" y1="21" x2="308.5" y2="23" stroke="#000" stroke-width="1"/><line x1="308.5" y1="203" x2="308.5" y2="207" stroke="#000" stroke-width="1"/><line x1="308.5" y1="276" x2="308.5" y2="278" stroke="#000" stroke-width="1"/><line x1="325.6" y1="21" x2="325.6" y2="23" stroke="#000" stroke-width="1"/><line x1="325.6" y1="203" x2="325.6" y2="207" stroke="#000" stroke-width="1"/><line x1="325.6" y1="276" x2="325.6" y2="278" stroke="#000" stroke-width="1"/><line x1="342.7" y1="21" x2="342.7" y2="23" stroke="#000" stroke-width="1"/><line x1="342.7" y1="203" x2="342.7" y2="207" stroke="#000" stroke-width="1"/><line x1="342.7" y1="276" x2="342.7" y2="278" stroke="#000" stroke-width="1"/><line x1="359.8" y1="21" x2="359.8" y2="23" stroke="#000" stroke-width="1"/><line x1="359.8" y1="203" x2="359.8" y2="207" stroke="#000" stroke-width="1"/><line x1="359.8" y1="276" x2="359.8" y2="278" stroke="#000" stroke-width="1"/><line x1="376.8" y1="21" x2="376.8" y2="23" stroke="#000" stroke-width="1"/><line x1="376.8" y1="203" x2="376.8" y2="207" stroke="#000" stroke-width="1"/><line x1="376.8" y1="276" x2="376.8" y2="278" stroke="#000" stroke-width="1"/><line x1="393.9" y1="21" x2="393.9" y2="23" stroke="#000" stroke-width="1"/><line x1="393.9" y1="203" x2="393.9" y2="207" stroke="#000" stroke-width="1"/><line x1="393.9" y1="276" x2="393.9" y2="278" stroke="#000" stroke-width="1"/><line x1="411.0" y1="21" x2="411.0" y2="23" stroke="#000" stroke-width="1"/><line x1="411.0" y1="203" x2="411.0" y2="207" stroke="#000" stroke-width="1"/><line x1="411.0" y1="276" x2="411.0" y2="278" stroke="#000" stroke-width="1"/><line x1="428.0" y1="21" x2="428.0" y2="23" stroke="#000" stroke-width="1"/><line x1="428.0" y1="203" x2="428.0" y2="207" stroke="#000" stroke-width="1"/><line x1="428.0" y1="276" x2="428.0" y2="278" stroke="#000" stroke-width="1"/><line x1="445.1" y1="21" x2="445.1" y2="23" stroke="#000" stroke-width="1"/><line x1="445.1" y1="203" x2="445.1" y2="207" stroke="#000" stroke-width="1"/><line x1="445.1" y1="276" x2="445.1" y2="278" stroke="#000" stroke-width="1"/><line x1="462.2" y1="21" x2="462.2" y2="23" stroke="#000" stroke-width="1"/><line x1="462.2" y1="203" x2="462.2" y2="207" stroke="#000" stroke-width="1"/><line x1="462.2" y1="276" x2="462.2" y2="278" stroke="#000" stroke-width="1"/><line x1="479.2" y1="21" x2="479.2" y2="23" stroke="#000" stroke-width="1"/><line x1="479.2" y1="203" x2="479.2" y2="207" stroke="#000" stroke-width="1"/><line x1="479.2" y1="276" x2="479.2" y2="278" stroke="#000" stroke-width="1"/><line x1="496.3" y1="21" x2="496.3" y2="23" stroke="#000" stroke-width="1"/><line x1="496.3" y1="203" x2="496.3" y2="207" stroke="#000" stroke-width="1"/><line x1="496.3" y1="276" x2="496.3" y2="278" stroke="#000" stroke-width="1"/><line x1="513.4" y1="21" x2="513.4" y2="23" stroke="#000" stroke-width="1"/><line x1="513.4" y1="203" x2="513.4" y2="207" stroke="#000" stroke-width="1"/><line x1="513.4" y1="276" x2="513.4" y2="278" stroke="#000" stroke-width="1"/><line x1="530.5" y1="21" x2="530.5" y2="23" stroke="#000" stroke-width="1"/><line x1="530.5" y1="203" x2="530.5" y2="207" stroke="#000" stroke-width="1"/><line x1="530.5" y1="276" x2="530.5" y2="278" stroke="#000" stroke-width="1"/><line x1="547.5" y1="21" x2="547.5" y2="23" stroke="#000" stroke-width="1"/><line x1="547.5" y1="203" x2="547.5" y2="207" stroke="#000" stroke-width="1"/><line x1="547.5" y1="276" x2="547.5" y2="278" stroke="#000" stroke-width="1"/><line x1="564.6" y1="21" x2="564.6" y2="23" stroke="#000" stroke-width="1"/><line x1="564.6" y1="203" x2="564.6" y2="207" stroke="#000" stroke-width="1"/><line x1="564.6" y1="276" x2="564.6" y2="278" stroke="#000" stroke-width="1"/><line x1="581.7" y1="21" x2="581.7" y2="23" stroke="#000" stroke-width="1"/><line x1="581.7" y1="203" x2="581.7" y2="207" stroke="#000" stroke-width="1"/><line x1="581.7" y1="276" x2="581.7" y2="278" stroke="#000" stroke-width="1"/><line x1="598.7" y1="21" x2="598.7" y2="23" stroke="#000" stroke-width="1"/><line x1="598.7" y1="203" x2="598.7" y2="207" stroke="#000" stroke-width="1"/><line x1="598.7" y1="276" x2="598.7" y2="278" stroke="#000" stroke-width="1"/><line x1="615.8" y1="21" x2="615.8" y2="23" stroke="#000" stroke-width="1"/><line x1="615.8" y1="203" x2="615.8" y2="207" stroke="#000" stroke-width="1"/><line x1="615.8" y1="276" x2="615.8" y2="278" stroke="#000" stroke-width="1"/><line x1="632.9" y1="21" x2="632.9" y2="23" stroke="#000" stroke-width="1"/><line x1="632.9" y1="203" x2="632.9" y2="207" stroke="#000" stroke-width="1"/><line x1="632.9" y1="276" x2="632.9" y2="278" stroke="#000" stroke-width="1"/><line x1="650.0" y1="21" x2="650.0" y2="23" stroke="#000" stroke-width="1"/><line x1="650.0" y1="203" x2="650.0" y2="207" stroke="#000" stroke-width="1"/><line x1="650.0" y1="276" x2="650.0" y2="278" stroke="#000" stroke-width="1"/><line x1="667.0" y1="21" x2="667.0" y2="23" stroke="#000" stroke-width="1"/><line x1="667.0" y1="203" x2="667.0" y2="207" stroke="#000" stroke-width="1"/><line x1="667.0" y1="276" x2="667.0" y2="278" stroke="#000" stroke-width="1"/><line x1="684.1" y1="21" x2="684.1" y2="23" stroke="#000" stroke-width="1"/><line x1="684.1" y1="203" x2="684.1" y2="207" stroke="#000" stroke-width="1"/><line x1="684.1" y1="276" x2="684.1" y2="278" stroke="#000" stroke-width="1"/><line x1="701.2" y1="21" x2="701.2" y2="23" stroke="#000" stroke-width="1"/><line x1="701.2" y1="203" x2="701.2" y2="207" stroke="#000" stroke-width="1"/><line x1="701.2" y1="276" x2="701.2" y2="278" stroke="#000" stroke-width="1"/><line x1="718.2" y1="21" x2="718.2" y2="23" stroke="#000" stroke-width="1"/><line x1="718.2" y1="203" x2="718.2" y2="207" stroke="#000" stroke-width="1"/><line x1="718.2" y1="276" x2="718.2" y2="278" stroke="#000" stroke-width="1"/><line x1="44" y1="21.5" x2="735" y2="21.5" stroke="#333" stroke-width="1"/><line x1="44.5" y1="21" x2="44.5" y2="278" stroke="#333" stroke-width="1"/><line x1="44" y1="205" x2="735" y2="205" stroke="#000" stroke-width="2"/><line x1="44" y1="278" x2="735" y2="278" stroke="#333" stroke-width="1"/><line x1="44" y1="195.9" x2="46" y2="195.9" stroke="#000" stroke-width="1"/><line x1="44" y1="187.3" x2="46" y2="187.3" stroke="#000" stroke-width="1"/><line x1="44" y1="182.2" x2="46" y2="182.2" stroke="#000" stroke-width="1"/><line x1="44" y1="178.6" x2="46" y2="178.6" stroke="#000" stroke-width="1"/><line x1="44" y1="175.8" x2="46" y2="175.8" stroke="#000" stroke-width="1"/><line x1="44" y1="173.6" x2="46" y2="173.6" stroke="#000" stroke-width="1"/><line x1="44" y1="171.6" x2="46" y2="171.6" stroke="#000" stroke-width="1"/><line x1="44" y1="170.0" x2="46" y2="170.0" stroke="#000" stroke-width="1"/><line x1="44" y1="168.5" x2="46" y2="168.5" stroke="#000" stroke-width="1"/><line x1="44" y1="167.2" x2="46" y2="167.2" stroke="#000" stroke-width="1"/><line x1="44" y1="158.6" x2="46" y2="158.6" stroke="#000" stroke-width="1"/><line x1="44" y1="153.5" x2="46" y2="153.5" stroke="#000" stroke-width="1"/><line x1="44" y1="149.9" x2="46" y2="149.9" stroke="#000" stroke-width="1"/><line x1="44" y1="147.1" x2="46" y2="147.1" stroke="#000" stroke-width="1"/><line x1="44" y1="144.9" x2="46" y2="144.9" stroke="#000" stroke-width="1"/><line x1="44" y1="142.9" x2="46" y2="142.9" stroke="#000" stroke-width="1"/><line x1="44" y1="141.3" x2="46" y2="141.3" stroke="#000" stroke-width="1"/><line x1="44" y1="139.8" x2="46" y2="139.8" stroke="#000" stroke-width="1"/><line x1="44" y1="138.5" x2="46" y2="138.5" stroke="#000" stroke-width="1"/><line x1="44" y1="129.9" x2="46" y2="129.9" stroke="#000" stroke-width="1"/><line x1="44" y1="124.8" x2="46" y2="124.8" stroke="#000" stroke-width="1"/><line x1="44" y1="121.2" x2="46" y2="121.2" stroke="#000" stroke-width="1"/><line x1="44" y1="118.4" x2="46" y2="118.4" stroke="#000" stroke-width="1"/><line x1="44" y1="116.2" x2="46" y2="116.2" stroke="#000" stroke-width="1"/><line x1="44" y1="114.2" x2="46" y2="114.2" stroke="#000" stroke-width="1"/><line x1="44" y1="112.6" x2="46" y2="112.6" stroke="#000" stroke-width="1"/><line x1="44" y1="111.1" x2="46" y2="111.1" stroke="#000" stroke-width="1"/><line x1="44" y1="109.8" x2="46" y2="109.8" stroke="#000" stroke-width="1"/><line x1="44" y1="101.2" x2="46" y2="101.2" stroke="#000" stroke-width="1"/><line x1="44" y1="96.1" x2="46" y2="96.1" stroke="#000" stroke-width="1"/><line x1="44" y1="92.5" x2="46" y2="92.5" stroke="#000" stroke-width="1"/><line x1="44" y1="89.7" x2="46" y2="89.7" stroke="#000" stroke-width="1"/><line x1="44" y1="87.5" x2="46" y2="87.5" stroke="#000" stroke-width="1"/><line x1="44" y1="85.5" x2="46" y2="85.5" stroke="#000" stroke-width="1"/><line x1="44" y1="83.9" x2="46" y2="83.9" stroke="#000" stroke-width="1"/><line x1="44" y1="82.4" x2="46" y2="82.4" stroke="#000" stroke-width="1"/><line x1="44" y1="81.1" x2="46" y2="81.1" stroke="#000" stroke-width="1"/><line x1="44" y1="72.5" x2="46" y2="72.5" stroke="#000" stroke-width="1"/><line x1="44" y1="67.4" x2="46" y2="67.4" stroke="#000" stroke-width="1"/><line x1="44" y1="63.8" x2="46" y2="63.8" stroke="#000" stroke-width="1"/><line x1="44" y1="61.0" x2="46" y2="61.0" stroke="#000" stroke-width="1"/><line x1="44" y1="58.8" x2="46" y2="58.8" stroke="#000" stroke-width="1"/><line x1="44" y1="56.8" x2="46" y2="56.8" stroke="#000" stroke-width="1"/><line x1="44" y1="55.2" x2="46" y2="55.2" stroke="#000" stroke-width="1"/><line x1="44" y1="53.7" x2="46" y2="53.7" stroke="#000" stroke-width="1"/><line x1="44" y1="52.4" x2="46" y2="52.4" stroke="#000" stroke-width="1"/><line x1="44" y1="43.8" x2="46" y2="43.8" stroke="#000" stroke-width="1"/><line x1="44" y1="38.7" x2="46" y2="38.7" stroke="#000" stroke-width="1"/><line x1="44" y1="35.1" x2="46" y2="35.1" stroke="#000" stroke-width="1"/><line x1="44" y1="32.3" x2="46" y2="32.3" stroke="#000" stroke-width="1"/><line x1="44" y1="30.1" x2="46" y2="30.1" stroke="#000" stroke-width="1"/><line x1="44" y1="28.1" x2="46" y2="28.1" stroke="#000" stroke-width="1"/><line x1="44" y1="26.5" x2="46" y2="26.5" stroke="#000" stroke-width="1"/><line x1="44" y1="25.0" x2="46" y2="25.0" stroke="#000" stroke-width="1"/><line x1="67.5" y1="196" x2="67.5" y2="205" stroke="#c8c8c8" stroke-width="1"/><line x1="70.5" y1="196" x2="70.5" y2="205" stroke="#c8c8c8" stroke-width="1"/><line x1="74.5" y1="196" x2="74.5" y2="205" stroke="#c8c8c8" stroke-width="1"/><line x1="78.19999999999999" y1="196" x2="78.19999999999999" y2="205" stroke="#c8c8c8" stroke-width="1"/><line x1="84.5" y1="196" x2="84.5" y2="205" stroke="#c8c8c8" stroke-width="1"/><line x1="92.5" y1="196" x2="92.5" y2="205" stroke="#c8c8c8" stroke-width="1"/><line x1="97.5" y1="196" x2="97.5" y2="205" stroke="#c8c8c8" stroke-width="1"/><line x1="107.5" y1="196" x2="107.5" y2="205" stroke="#c8c8c8" stroke-width="1"/><line x1="114.5" y1="196" x2="114.5" y2="205" stroke="#c8c8c8" stroke-width="1"/><line x1="124.10000000000002" y1="196" x2="124.10000000000002" y2="205" stroke="#c8c8c8" stroke-width="1"/><line x1="134.5" y1="196" x2="134.5" y2="205" stroke="#c8c8c8" stroke-width="1"/><line x1="144.5" y1="196" x2="144.5" y2="205" stroke="#c8c8c8" stroke-width="1"/><line x1="67" y1="196.5" x2="144" y2="196.5" stroke="#d0d0d0" stroke-width="1"/><path d="M61.5 205.0 L62.0 151.0 L64.0 135.0 L67.0 95.0 L70.0 45.0 L72.5 29.0 L75.0 33.0 L78.0 60.0 L81.0 90.0 L82.0 100.0 L82.0 205.0" fill="none" stroke="#ffa0a0" stroke-width="1"/><path d="M52.6 147.7 L53.5 140.0 L55.0 141.0 L57.0 139.0 L59.0 142.0 L61.0 140.0 L63.0 142.0 L64.5 138.0 L65.2 129.5 L66.5 101.4 L69.4 51.0 L72.2 32.8 L76.4 28.0 L79.0 29.0 L82.3 30.3 L85.7 31.5 L89.0 32.8 L92.2 33.9 L95.5 35.0 L98.7 36.2 L101.9 37.3 L105.1 38.4 L108.4 39.5 L111.6 40.6 L114.8 41.8 L118.1 42.9 L121.3 44.0 L124.4 45.0 L127.5 45.9 L130.7 46.9 L133.8 47.8 L136.9 48.8 L140.0 49.7 L143.2 50.7 L146.3 51.6 L149.4 52.6 L152.5 53.5 L155.6 54.5 L158.8 55.5 L161.9 56.4 L165.0 57.4 L168.1 58.3 L171.3 59.3 L174.4 60.2 L177.5 61.2 L180.6 62.1 L183.8 63.1 L186.9 64.0 L190.0 65.0 L193.1 65.8 L196.2 66.5 L199.3 67.3 L202.5 68.1 L205.6 68.8 L208.7 69.6 L211.8 70.3 L214.9 71.1 L218.0 71.9 L221.1 72.6 L224.2 73.4 L227.4 74.2 L230.5 74.9 L233.6 75.7 L236.7 76.5 L239.8 77.2 L242.9 78.0 L246.0 78.7 L249.2 79.5 L252.3 80.3 L255.4 81.0 L258.5 81.7 L261.6 82.8 L264.8 83.5 L267.9 84.1 L271.0 84.8 L274.1 85.7 L277.2 86.8 L280.4 87.5 L283.5 88.5 L286.6 89.4 L289.8 89.7 L292.9 90.9 L296.0 91.2 L299.3 92.6 L302.6 92.8 L305.9 93.6 L309.2 95.0 L312.4 95.2 L315.7 95.8 L319.0 97.2 L322.3 97.7 L325.6 98.7 L328.6 98.8 L331.6 99.6 L334.6 100.8 L337.6 101.0 L340.6 102.2 L343.6 101.9 L346.6 103.4 L349.6 103.2 L352.6 104.3 L355.6 104.3 L358.6 105.2 L361.6 106.9 L364.6 106.9 L367.6 108.0 L370.6 107.9 L373.6 108.7 L376.6 109.0 L379.6 110.3 L382.6 111.5 L385.6 111.6 L388.6 112.1 L391.6 113.6 L394.6 114.2 L397.7 114.3 L400.8 113.9 L403.9 115.3 L407.0 115.5 L410.1 116.8 L413.2 116.3 L416.3 117.3 L419.4 117.7 L422.5 117.8 L425.6 118.5 L428.7 119.3 L431.8 120.2 L434.9 119.9 L438.0 120.2 L441.1 121.8 L444.2 120.5 L447.3 122.5 L450.4 122.7 L453.5 123.0 L456.6 123.2 L459.7 124.3 L462.8 125.1 L465.9 125.1 L469.0 125.5 L472.1 124.3 L475.2 125.2 L478.3 125.1 L481.4 127.2 L484.5 127.4 L487.6 126.1 L490.7 127.4 L493.8 127.7 L496.9 126.8 L500.0 127.9 L503.1 129.1 L506.2 129.1 L509.3 128.6 L512.4 130.1 L515.5 129.3 L518.6 130.2 L521.7 130.2 L524.8 131.9 L527.9 131.4 L531.0 132.2 L534.0 132.0 L537.0 131.4 L540.0 133.0 L543.0 132.5 L546.0 132.6 L549.0 131.6 L552.0 131.4 L555.0 132.7 L558.0 133.5 L561.0 133.5 L564.0 132.5 L567.0 132.0 L570.0 133.2 L573.0 134.3 L576.0 132.5 L579.0 134.2 L582.0 132.7 L585.0 133.2 L588.0 132.5 L591.1 133.3 L594.1 133.7 L597.1 135.5 L600.1 135.6 L603.1 133.4 L606.1 133.9 L609.1 135.9 L612.1 133.7 L615.2 134.2 L618.2 134.7 L621.2 133.8 L624.2 134.3 L627.2 134.8 L630.2 134.9 L633.2 136.8 L636.2 134.7 L639.3 134.6 L642.3 137.0 L645.3 135.6 L648.3 137.0 L651.3 136.5 L654.3 137.0 L657.3 135.6 L660.3 135.1 L663.3 137.3 L666.4 136.4 L669.4 136.8 L672.4 137.3 L675.4 137.7 L678.4 136.2 L681.4 136.6 L684.4 138.6 L687.4 137.4 L690.5 136.6 L693.5 137.9 L696.5 136.7 L699.5 138.6 L702.5 136.1 L705.5 139.1 L708.5 138.2 L711.5 137.5 L714.6 139.8 L717.6 137.4 L720.6 137.4 L723.6 136.9 L726.6 138.8 L730.8 139.5 L735.0 138.5" fill="none" stroke="#23a23a" stroke-width="1.8" stroke-linejoin="round"/><line x1="90" y1="21" x2="90" y2="278" stroke="#0010ff" stroke-width="2"/><path d="M91 39.60000000000002 L94.5 42.60000000000002 L91 45.60000000000002 Z" fill="#0010ff"/><path d="M91 61.80000000000001 L94.5 64.80000000000001 L91 67.80000000000001 Z" fill="#0010ff"/><path d="M91 84.0 L94.5 87.0 L91 90.0 Z" fill="#0010ff"/><path d="M91 106.20000000000005 L94.5 109.20000000000005 L91 112.20000000000005 Z" fill="#0010ff"/><path d="M91 128.4000000000001 L94.5 131.4000000000001 L91 134.4000000000001 Z" fill="#0010ff"/><path d="M91 150.60000000000014 L94.5 153.60000000000014 L91 156.60000000000014 Z" fill="#0010ff"/><path d="M91 172.80000000000018 L94.5 175.80000000000018 L91 178.80000000000018 Z" fill="#0010ff"/><path d="M91 195.00000000000023 L94.5 198.00000000000023 L91 201.00000000000023 Z" fill="#0010ff"/><path d="M91 217.20000000000027 L94.5 220.20000000000027 L91 223.20000000000027 Z" fill="#0010ff"/><path d="M91 239.40000000000032 L94.5 242.40000000000032 L91 245.40000000000032 Z" fill="#0010ff"/><path d="M91 261.60000000000036 L94.5 264.60000000000036 L91 267.60000000000036 Z" fill="#0010ff"/><line x1="729" y1="21" x2="729" y2="278" stroke="#0010ff" stroke-width="2"/><path d="M728 39.60000000000002 L724.5 42.60000000000002 L728 45.60000000000002 Z" fill="#0010ff"/><path d="M728 61.80000000000001 L724.5 64.80000000000001 L728 67.80000000000001 Z" fill="#0010ff"/><path d="M728 84.0 L724.5 87.0 L728 90.0 Z" fill="#0010ff"/><path d="M728 106.20000000000005 L724.5 109.20000000000005 L728 112.20000000000005 Z" fill="#0010ff"/><path d="M728 128.4000000000001 L724.5 131.4000000000001 L728 134.4000000000001 Z" fill="#0010ff"/><path d="M728 150.60000000000014 L724.5 153.60000000000014 L728 156.60000000000014 Z" fill="#0010ff"/><path d="M728 172.80000000000018 L724.5 175.80000000000018 L728 178.80000000000018 Z" fill="#0010ff"/><path d="M728 195.00000000000023 L724.5 198.00000000000023 L728 201.00000000000023 Z" fill="#0010ff"/><path d="M728 217.20000000000027 L724.5 220.20000000000027 L728 223.20000000000027 Z" fill="#0010ff"/><path d="M728 239.40000000000032 L724.5 242.40000000000032 L728 245.40000000000032 Z" fill="#0010ff"/><path d="M728 261.60000000000036 L724.5 264.60000000000036 L728 267.60000000000036 Z" fill="#0010ff"/><text x="374" y="16" font-family="Liberation Sans" font-weight="bold" font-size="12" text-anchor="middle" fill="#111">Fit</text><text transform="translate(15 117.5) rotate(-90)" font-family="Liberation Sans" font-size="11" text-anchor="middle" textLength="77" lengthAdjust="spacingAndGlyphs" fill="#111">Intensity [ Cnts]</text><clipPath id="rclip"><rect x="0" y="202" width="40" height="77"/></clipPath><g clip-path="url(#rclip)"><text transform="translate(15.5 244.5) rotate(-90)" font-family="Liberation Sans" font-size="12" text-anchor="middle" fill="#111">Resids. [StdDev.]</text></g><rect x="661.5" y="25.5" width="80" height="40" fill="#ffffd6" stroke="#777" stroke-width="1"/><rect x="663" y="28" width="10" height="8" fill="#ffb0b0"/><rect x="663" y="42" width="10" height="8" fill="#23a23a"/><rect x="663" y="55" width="10" height="8" fill="#c8c8c8"/><text x="677" y="36.5" font-family="Liberation Sans" font-size="9.6" letter-spacing="-0.1" fill="#222">Calculated IRF</text><text x="677" y="49.8" font-family="Liberation Sans" font-size="9.6" letter-spacing="-0.1" fill="#222">Overall Decay</text><text x="677" y="63.1" font-family="Liberation Sans" font-size="9.6" letter-spacing="-0.1" fill="#222">Pixel (1,1)</text><rect x="735" y="0" width="12" height="296" fill="#dfe6dd"/><rect x="735.5" y="0.5" width="11" height="14" fill="#e8ede6" stroke="#b8bfb6"/><path d="M738 10 L741 6.5 L744 10 Z" fill="#000"/><rect x="735.5" y="248.5" width="11" height="24" fill="#d0d6ce" stroke="#b8bfb6"/><rect x="735.5" y="272.5" width="11" height="15" fill="#e8ede6" stroke="#b8bfb6"/><path d="M738 278 L741 281.5 L744 278 Z" fill="#000"/><rect x="0" y="288" width="735" height="8" fill="#e2e9e0"/><rect x="704" y="288" width="14" height="8" fill="#d0d6ce"/></svg>
<div style="left:1056px;top:440px;width:139px;height:307px;background:#e0e9df"></div>
<svg style="left:1060.5px;top:448.7px" width="12" height="12"><circle cx="6" cy="6" r="4.5" fill="#fff" stroke="#9ba39a" stroke-width="1"/></svg>
<div style="left:1075px;top:449.84px;font-size:10px;line-height:10px;white-space:nowrap;letter-spacing:-0.14px;color:#1e1e2e">Lin. Intens. Axis</div>
<svg style="left:1060.5px;top:472px" width="12" height="12"><circle cx="6" cy="6" r="4.5" fill="#24a33f" stroke="#6d7a6c" stroke-width="1"/><circle cx="6" cy="6" r="2.2" fill="#000"/></svg>
<div style="left:1075px;top:473.14px;font-size:10px;line-height:10px;white-space:nowrap;letter-spacing:-0.14px;color:#1e1e2e">Log. Intens. Axis</div>
<div style="left:1061px;top:517px;width:9px;height:9px;border:1px solid #9ba39a;background:#fff"></div>
<div style="left:1075px;top:516.84px;font-size:10px;line-height:10px;white-space:nowrap;letter-spacing:-0.14px;color:#1e1e2e">Normalize Decays</div>
<svg style="left:1060.5px;top:540px" width="12" height="12"><circle cx="6" cy="6" r="4.5" fill="#24a33f" stroke="#6d7a6c" stroke-width="1"/><circle cx="6" cy="6" r="2.2" fill="#000"/></svg>
<div style="left:1075px;top:541.13px;font-size:10px;line-height:10px;white-space:nowrap;letter-spacing:-0.14px;color:#1e1e2e">Show all Datasets</div>
<svg style="left:1060.5px;top:563px" width="12" height="12"><circle cx="6" cy="6" r="4.5" fill="#fff" stroke="#9ba39a" stroke-width="1"/></svg>
<div style="left:1075px;top:564.13px;font-size:10px;line-height:10px;white-space:nowrap;letter-spacing:-0.14px;color:#1e1e2e">Show Active Dataset</div>
<svg style="left:1060.5px;top:586.1px" width="12" height="12"><circle cx="6" cy="6" r="4.5" fill="#fff" stroke="#9ba39a" stroke-width="1"/></svg>
<div style="left:1075px;top:587.24px;font-size:10px;line-height:10px;white-space:nowrap;letter-spacing:-0.14px;color:#1e1e2e">TCSPC Curves Only</div>
<svg style="left:1060.5px;top:609.2px" width="12" height="12"><circle cx="6" cy="6" r="4.5" fill="#fff" stroke="#9ba39a" stroke-width="1"/></svg>
<div style="left:1075px;top:610.34px;font-size:10px;line-height:10px;white-space:nowrap;letter-spacing:-0.14px;color:#1e1e2e">Parameter Plot</div>
<svg style="left:1060.5px;top:632.2px" width="12" height="12"><circle cx="6" cy="6" r="4.5" fill="#fff" stroke="#9ba39a" stroke-width="1"/></svg>
<div style="left:1075px;top:633.34px;font-size:10px;line-height:10px;white-space:nowrap;letter-spacing:-0.14px;color:#1e1e2e">Error Correlation Plot</div>
<div style="left:5px;top:41px;width:292px;height:312px;border:5px solid #fb3b3b;border-radius:3px;box-sizing:border-box"></div>
<div style="left:300px;top:41px;width:453px;height:322px;border:5px solid #fc9632;border-radius:3px;box-sizing:border-box"></div>
<div style="left:755px;top:41px;width:301px;height:355px;border:5px solid #8c1c75;border-radius:3px;box-sizing:border-box"></div>
<div style="left:0px;top:372px;width:293px;height:375px;border:5px solid #3764a7;border-radius:3px;box-sizing:border-box"></div>
<div style="left:299px;top:440px;width:757px;height:306px;border:5px solid #000000;border-radius:3px;box-sizing:border-box"></div>
<svg style="left:250px;top:50px;" width="34" height="48" viewBox="0 0 34 48"><path d="M14.3 6 L21 6 L21 37.3 L29.7 37.3 L29.7 42.7 L4.3 42.7 L4.3 37.3 L13.7 37.3 L13.7 13.5 L4.7 18 L4.7 12 Z" fill="#ee1111"/></svg>
<div style="left:693px;top:45.0px;width:68px;font-size:53.1px;line-height:59.3px;text-align:center;font-weight:bold;color:#ff8a1a;white-space:nowrap">2</div>
<div style="left:989px;top:54.7px;width:68px;font-size:54.5px;line-height:60.8px;text-align:center;font-weight:bold;color:#7e0c80;white-space:nowrap">3</div>
<div style="left:228px;top:378.0px;width:70px;font-size:53.1px;line-height:59.3px;text-align:center;font-weight:bold;color:#3764a7;white-space:nowrap">4</div>
<div style="left:933px;top:437.2px;width:67px;font-size:51.7px;line-height:57.7px;text-align:center;font-weight:bold;color:#000000;white-space:nowrap">5</div>
</body></html>
